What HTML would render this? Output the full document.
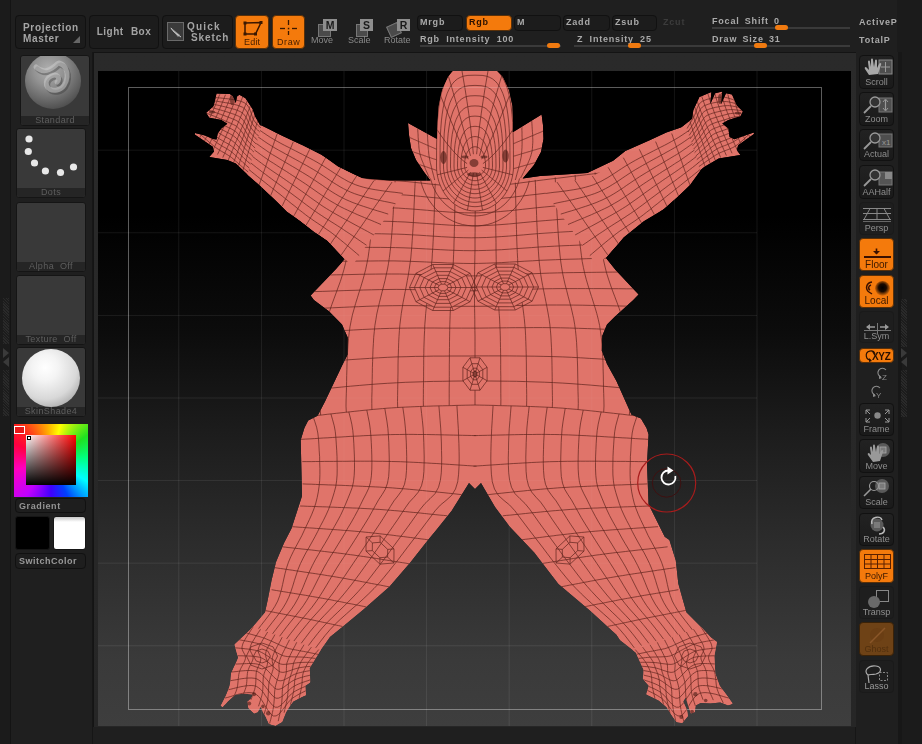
<!DOCTYPE html>
<html><head><meta charset="utf-8">
<style>
*{margin:0;padding:0;box-sizing:border-box}
body *{-webkit-font-smoothing:antialiased}
.btn,.t9,.th .c,.rb .t,.il,.sq{will-change:transform}
html,body{width:922px;height:744px;overflow:hidden;background:#1f1f1f;font-family:"Liberation Sans",sans-serif}
.a{position:absolute}
.btn{position:absolute;background:#1c1c1c;border:1px solid #111;border-radius:4px;color:#a6a6a6;font-weight:bold;font-size:10px;letter-spacing:0.7px;white-space:nowrap}
.or{background:#f47a0c;border-color:#5a3008}
.t9{position:absolute;color:#aaa;font-weight:bold;font-size:9px;letter-spacing:0.8px;white-space:nowrap;line-height:10px}
.th{position:absolute;background:#393939;border:1px solid #151515;border-radius:3px;overflow:hidden}
.th .c{position:absolute;left:0;right:0;bottom:0;height:9px;background:#252525;color:#5e5e5e;font-size:9px;text-align:center;line-height:9px;letter-spacing:0.4px}
.rb{position:absolute;left:859px;width:35px;background:linear-gradient(#222,#1a1a1a);border:1px solid #111;border-radius:4px;color:#8e8e8e;font-size:9px;text-align:center;overflow:hidden}
.rb .t{position:absolute;left:0;right:0;bottom:1px;line-height:10px}
.trk{position:absolute;height:2px;background:#3a3a3a}
.knob{position:absolute;height:5px;background:#f07a10;border-radius:3px}
.sq{position:absolute;background:#8e8e8e;color:#1a1a1a;font-weight:bold;font-size:10.5px;text-align:center;line-height:12px}
.sqb{position:absolute;background:#4a4a4a;border:1px solid #777}
.il{position:absolute;color:#8a8a8a;font-size:9px;white-space:nowrap;line-height:10px}
</style></head><body>
<div class="a" style="left:0;top:0;width:10px;height:744px;background:#1b1b1b"></div>
<div class="a" style="left:10px;top:0;width:1px;height:744px;background:#141414"></div>
<div class="a" style="left:898px;top:0;width:24px;height:744px;background:#1b1b1b"></div>
<div class="a" style="left:898px;top:0;width:4px;height:744px;background:#171717"></div>

<!-- top buttons -->
<div class="btn" style="left:15px;top:15px;width:71px;height:34px;padding:6px 0 0 7px;line-height:11px">Projection<br>Master
 <div class="a" style="right:5px;bottom:5px;width:0;height:0;border-left:7px solid transparent;border-bottom:7px solid #666"></div></div>
<div class="btn" style="left:89px;top:15px;width:70px;height:34px;line-height:32px;text-align:center;letter-spacing:0.5px;word-spacing:4px;color:#a4a4a4">Light Box</div>
<div class="btn" style="left:162px;top:15px;width:71px;height:34px;line-height:11px">
 <div class="a" style="left:4px;top:6px;width:17px;height:19px;border:1px solid #6a6a6a;background:#3a3a3a"><svg width="15" height="17" style="position:absolute;left:0;top:0"><path d="M2 4 L12 12 L10 14 Z" fill="#999"/><path d="M3 5 C5 9 9 11 13 14" stroke="#ccc" stroke-width="1" fill="none"/></svg></div>
 <div class="a" style="left:24px;top:5px;letter-spacing:1.2px;color:#a4a4a4">Quick</div><div class="a" style="left:28px;top:16px;letter-spacing:0.9px;color:#a4a4a4">Sketch</div></div>
<div class="btn or" style="left:235px;top:15px;width:34px;height:34px">
 <svg class="a" style="left:0;top:0" width="34" height="34"><path d="M9 7 L25 6.5 L19.5 18 L9 18 Z" fill="none" stroke="#3a1600" stroke-width="1.5"/><g fill="#3a1800"><rect x="7.5" y="5.5" width="3" height="3"/><rect x="23.5" y="5" width="3" height="3"/><rect x="18" y="16.5" width="3" height="3"/><rect x="7.5" y="16.5" width="3" height="3"/></g></svg>
 <div class="a" style="left:8px;top:21px;font-size:9px;font-weight:normal;color:#4a2000;letter-spacing:0.2px">Edit</div></div>
<div class="btn or" style="left:272px;top:15px;width:33px;height:34px">
 <svg class="a" style="left:0;top:0" width="33" height="34"><g stroke="#3a1800" stroke-width="1.3"><line x1="15.5" y1="4" x2="15.5" y2="9"/><line x1="15.5" y1="15" x2="15.5" y2="19"/><line x1="7" y1="12.5" x2="12" y2="12.5"/><line x1="19" y1="12.5" x2="24" y2="12.5"/></g><rect x="14.8" y="11.8" width="1.5" height="1.5" fill="#3a1800"/></svg>
 <div class="a" style="left:4px;top:21px;font-size:9px;font-weight:normal;color:#4a2000;letter-spacing:0.6px">Draw</div></div>
<!-- move scale rotate -->
<div class="sqb" style="left:318px;top:24px;width:13px;height:13px"></div>
<div class="sq" style="left:323px;top:19px;width:14px;height:12px">M</div>
<div class="il" style="left:311px;top:35px">Move</div>
<div class="sqb" style="left:356px;top:24px;width:12px;height:13px"></div>
<div class="sq" style="left:360px;top:19px;width:13px;height:12px">S</div>
<div class="il" style="left:348px;top:35px">Scale</div>
<div class="sqb" style="left:388px;top:24px;width:12px;height:12px;transform:rotate(-25deg)"></div>
<div class="sq" style="left:397px;top:19px;width:13px;height:12px">R</div>
<div class="il" style="left:384px;top:35px">Rotate</div>
<!-- mrgb row -->
<div class="btn" style="left:417px;top:15px;width:46px;height:16px"></div>
<div class="btn or" style="left:466px;top:15px;width:46px;height:16px"></div>
<div class="btn" style="left:514px;top:15px;width:47px;height:16px"></div>
<div class="btn" style="left:563px;top:15px;width:47px;height:16px"></div>
<div class="btn" style="left:612px;top:15px;width:45px;height:16px"></div>
<div class="t9" style="left:420px;top:17px">Mrgb</div>
<div class="t9" style="left:469px;top:17px;color:#2a1000">Rgb</div>
<div class="t9" style="left:517px;top:17px">M</div>
<div class="t9" style="left:566px;top:17px">Zadd</div>
<div class="t9" style="left:615px;top:17px">Zsub</div>
<div class="t9" style="left:663px;top:17px;color:#3c3c3c">Zcut</div>
<div class="t9" style="left:420px;top:34px;word-spacing:3px">Rgb Intensity 100</div>
<div class="t9" style="left:577px;top:34px;word-spacing:3px">Z Intensity 25</div>
<div class="t9" style="left:712px;top:16px;word-spacing:2px">Focal Shift 0</div>
<div class="t9" style="left:712px;top:34px;word-spacing:2px">Draw Size 31</div>
<div class="t9" style="left:859px;top:17px">ActiveP</div>
<div class="t9" style="left:859px;top:35px">TotalP</div>
<div class="a" style="left:897px;top:0;width:25px;height:52px;background:#1b1b1b"></div>
<div class="trk" style="left:420px;top:45px;width:141px"></div>
<div class="trk" style="left:574px;top:45px;width:130px"></div>
<div class="trk" style="left:712px;top:27px;width:138px"></div>
<div class="trk" style="left:690px;top:45px;width:160px"></div>
<div class="knob" style="left:547px;top:43px;width:13px"></div>
<div class="knob" style="left:628px;top:43px;width:13px"></div>
<div class="knob" style="left:775px;top:25px;width:13px"></div>
<div class="knob" style="left:754px;top:43px;width:13px"></div>


<!-- left panel -->
<div class="a" style="left:3px;top:298px;width:6px;height:46px;background:repeating-linear-gradient(45deg,#2a2a2a 0 1px,#1c1c1c 1px 2px)"></div>
<div class="a" style="left:3px;top:370px;width:6px;height:46px;background:repeating-linear-gradient(45deg,#2a2a2a 0 1px,#1c1c1c 1px 2px)"></div>
<div class="a" style="left:3px;top:348px;width:0;height:0;border-top:5px solid transparent;border-bottom:5px solid transparent;border-left:6px solid #3a3a3a"></div>
<div class="a" style="left:3px;top:357px;width:0;height:0;border-top:5px solid transparent;border-bottom:5px solid transparent;border-right:6px solid #3a3a3a"></div>
<div class="th" style="left:20px;top:55px;width:70px;height:71px">
 <div class="a" style="left:4px;top:-3px;width:56px;height:56px;border-radius:50%;background:radial-gradient(circle at 42% 30%,#b0b0b0 0%,#929292 30%,#666 62%,#454545 85%,#3a3a3a 100%)"></div>
 <svg class="a" style="left:-2px;top:0" width="70" height="62"><path d="M17 11 C24 18 32 14 38 8 M40 7 C52 10 50 32 38 34 C26 36 24 24 32 20 C38 17 42 22 38 26" fill="none" stroke="#2a2a2a" stroke-width="5" opacity="0.35" stroke-linecap="round" transform="translate(1.5,2)"/><path d="M17 11 C24 18 32 14 38 8 M40 7 C52 10 50 32 38 34 C26 36 24 24 32 20 C38 17 42 22 38 26" fill="none" stroke="#cfcfcf" stroke-width="5" opacity="0.5" stroke-linecap="round"/></svg>
 <div class="c">Standard</div></div>
<div class="th" style="left:16px;top:128px;width:70px;height:70px">
 <svg class="a" style="left:0;top:0" width="70" height="60"><g fill="#e8e8e8"><circle cx="12" cy="10" r="3.6"/><circle cx="11.3" cy="22.5" r="3.6"/><circle cx="17.5" cy="34" r="3.6"/><circle cx="28.4" cy="42" r="3.6"/><circle cx="43.5" cy="43.5" r="3.6"/><circle cx="56.5" cy="38" r="3.6"/></g></svg>
 <div class="c">Dots</div></div>
<div class="th" style="left:16px;top:202px;width:70px;height:70px"><div class="c">Alpha &nbsp;Off</div></div>
<div class="th" style="left:16px;top:275px;width:70px;height:70px"><div class="c">Texture &nbsp;Off</div></div>
<div class="th" style="left:16px;top:347px;width:70px;height:70px">
 <div class="a" style="left:5px;top:1px;width:58px;height:58px;border-radius:50%;background:radial-gradient(circle at 40% 32%,#ffffff 0%,#f4f4f4 25%,#d8d8d8 60%,#9a9a9a 90%,#777 100%)"></div>
 <div class="c">SkinShade4</div></div>
<div class="a" style="left:14px;top:424px;width:74px;height:73px;background:conic-gradient(from -45deg,#ff2020 0deg,#ffb000 40deg,#ffff00 60deg,#20e020 100deg,#00ff80 130deg,#00ffff 165deg,#0040ff 200deg,#4000ff 225deg,#c000ff 260deg,#ff00c0 300deg,#ff0040 340deg,#ff2020 360deg)"></div>
<div class="a" style="left:26px;top:435px;width:50px;height:50px;background:linear-gradient(to top,#000,rgba(0,0,0,0)),linear-gradient(to right,#fff,#f00)"></div>
<div class="a" style="left:14px;top:426px;width:11px;height:8px;border:1.5px solid #fff;background:#e81818"></div>
<div class="a" style="left:27px;top:436px;width:4px;height:4px;border:1px solid #000;background:#fff"></div>
<div class="btn" style="left:15px;top:498px;width:71px;height:15px;font-size:9px;color:#959595;padding:1px 0 0 3px;line-height:12px;letter-spacing:0.6px;background:#1e1e1e">Gradient</div>
<div class="a" style="left:15px;top:516px;width:35px;height:34px;background:#000;border-radius:3px;border:1px solid #161616"></div>
<div class="a" style="left:53px;top:516px;width:33px;height:34px;background:linear-gradient(#c8c8c8 0,#fff 5px,#fff 100%);border-radius:3px;border:1px solid #161616"></div>
<div class="btn" style="left:15px;top:553px;width:71px;height:16px;font-size:9px;color:#9a9a9a;padding:1px 0 0 3px;line-height:13px;letter-spacing:0.5px;background:#1e1e1e">SwitchColor</div>
<div class="a" style="left:92px;top:52px;width:1px;height:692px;background:#161616"></div>


<!-- right panel -->
<div class="a" style="left:855px;top:52px;width:1px;height:692px;background:#161616"></div>
<div class="a" style="left:901px;top:299px;width:6px;height:48px;background:repeating-linear-gradient(45deg,#2a2a2a 0 1px,#1c1c1c 1px 2px)"></div>
<div class="a" style="left:901px;top:370px;width:6px;height:47px;background:repeating-linear-gradient(45deg,#2a2a2a 0 1px,#1c1c1c 1px 2px)"></div>
<div class="a" style="left:901px;top:348px;width:0;height:0;border-top:5px solid transparent;border-bottom:5px solid transparent;border-left:6px solid #3a3a3a"></div>
<div class="a" style="left:901px;top:357px;width:0;height:0;border-top:5px solid transparent;border-bottom:5px solid transparent;border-right:6px solid #3a3a3a"></div>

<div class="rb" style="top:55px;height:34px"><svg class="a" style="left:0;top:0" width="35" height="24">
 <rect x="19" y="4" width="13" height="14" fill="#4e4e4e" stroke="#888" stroke-width="1"/>
 <path d="M25.5 6v10M21 11h9" stroke="#999" stroke-width="1"/>
 <path d="M9 19 L5 13 C4 11 6 10 7 12 L9 14 L8 6 C8 4 10 4 10 6 L11 11 L11 4 C11 2 13 2 13 4 L14 11 L15 5 C15 3 17 3 17 5 L17 12 L19 8 C20 6 22 7 21 9 L18 18 Z" fill="#a8a8a8"/></svg><div class="t">Scroll</div></div>
<div class="rb" style="top:92px;height:34px"><svg class="a" style="left:0;top:0" width="35" height="24">
 <rect x="19" y="5" width="13" height="14" fill="#4e4e4e" stroke="#777" stroke-width="1"/>
 <path d="M25.5 7v10" stroke="#999" stroke-width="1.2"/><path d="M23 9l2.5-3 2.5 3M23 15l2.5 3 2.5-3" fill="none" stroke="#999"/>
 <circle cx="15" cy="9" r="5" fill="#333" stroke="#999" stroke-width="1.3"/><path d="M11 13 L4 20" stroke="#999" stroke-width="1.8"/></svg><div class="t">Zoom</div></div>
<div class="rb" style="top:129px;height:32px"><svg class="a" style="left:0;top:0" width="35" height="22">
 <rect x="19" y="4" width="13" height="13" fill="#4e4e4e" stroke="#777" stroke-width="1"/>
 <text x="22" y="15" font-size="8" fill="#999" font-family="Liberation Sans">x1</text>
 <circle cx="15" cy="8" r="5" fill="#333" stroke="#999" stroke-width="1.3"/><path d="M11 12 L4 19" stroke="#999" stroke-width="1.8"/></svg><div class="t">Actual</div></div>
<div class="rb" style="top:165px;height:34px"><svg class="a" style="left:0;top:0" width="35" height="24">
 <rect x="19" y="6" width="13" height="13" fill="#555" stroke="#777" stroke-width="1"/><rect x="25" y="6" width="7" height="7" fill="#888"/>
 <circle cx="15" cy="9" r="5" fill="#333" stroke="#999" stroke-width="1.3"/><path d="M11 13 L4 20" stroke="#999" stroke-width="1.8"/></svg><div class="t">AAHalf</div></div>
<div class="rb" style="top:202px;height:33px;background:#1e1e1e;border-color:#1a1a1a"><svg class="a" style="left:0;top:0" width="35" height="22">
 <g stroke="#888" stroke-width="1" fill="none"><path d="M3 5.5h28M3 10.5h28M3 16.5h28M10 5.5L4 16.5M24 5.5L30 16.5M17 5.5v11"/><path d="M3 18.5h28" stroke="#666"/></g></svg><div class="t" style="color:#909090">Persp</div></div>
<div class="rb" style="top:238px;height:33px;background:#f47a0c;border-color:#5a3008;color:#3a1800"><svg class="a" style="left:0;top:0" width="35" height="22">
 <path d="M4 18h27" stroke="#3a1000" stroke-width="2"/><path d="M16.5 9.5v5" stroke="#3a1000" stroke-width="1.6"/><path d="M13 12l3.5 3.5 3.5-3.5z" fill="#3a1000"/></svg><div class="t" style="font-size:10px;bottom:0px">Floor</div></div>
<div class="rb" style="top:275px;height:33px;background:#f47a0c;border-color:#5a3008;color:#3a1800">
 <div class="a" style="left:15px;top:5px;width:15px;height:15px;border-radius:50%;background:radial-gradient(circle at 50% 45%,#000 0%,#1a0a00 35%,rgba(240,120,12,0) 75%)"></div>
 <svg class="a" style="left:0;top:0" width="35" height="22"><path d="M12 6 C6 7 5 13 9 16 M11 9 C8 10 8 13 10 14 M9 16 L12 18" fill="none" stroke="#3a1000" stroke-width="1.5"/></svg><div class="t" style="font-size:10px;bottom:1px">Local</div></div>
<div class="rb" style="top:311px;height:32px;background:#1e1e1e;border-color:#1a1a1a"><svg class="a" style="left:0;top:0" width="35" height="22">
 <path d="M4 18.5h27" stroke="#777" stroke-width="1.2"/><path d="M17.5 11v11" stroke="#777"/><path d="M7 15h8M20 15h8" stroke="#999" stroke-width="1.6"/><path d="M10 12l-4 3 4 3zM25 12l4 3-4 3z" fill="#999"/></svg><div class="t" style="color:#909090">L.Sym</div></div>
<div class="rb" style="top:348px;height:15px;background:#f47a0c;border-color:#5a3008;color:#2a1000"><div class="a" style="left:12px;top:2px;font-size:10px;line-height:12px;font-weight:bold;letter-spacing:-0.3px">XYZ</div>
 <svg class="a" style="left:0;top:0" width="35" height="15"><path d="M15 5 A4.5 4.5 0 1 0 11 11" fill="none" stroke="#2a1000" stroke-width="1.2"/><path d="M9 9 L12 12 L9 13 Z" fill="#2a1000"/></svg></div>
<svg class="a" style="left:859px;top:364px" width="35" height="36"><g fill="none" stroke="#8a8a8a" stroke-width="1.1"><path d="M27 6 A4.5 4.5 0 1 0 22 13"/><path d="M21 24 A4.5 4.5 0 1 0 16 31"/></g><path d="M20 11 L23 14 L20 15 Z M14 29 L17 32 L14 33 Z" fill="#8a8a8a"/>
 <text x="23" y="16" font-size="8" fill="#8a8a8a" font-family="Liberation Sans">Z</text><text x="17" y="34" font-size="8" fill="#8a8a8a" font-family="Liberation Sans">Y</text></svg>
<div class="rb" style="top:403px;height:33px"><svg class="a" style="left:0;top:0" width="35" height="22">
 <circle cx="17.5" cy="11.5" r="3.2" fill="#888"/><g stroke="#999" stroke-width="1" fill="none"><path d="M6 6l4 4M6 6h4M6 6v4M29 6l-4 4M29 6h-4M29 6v4M6 18l4-4M6 18h4M6 18v-4M29 18l-4-4M29 18h-4M29 18v-4"/></g></svg><div class="t">Frame</div></div>
<div class="rb" style="top:439px;height:34px"><svg class="a" style="left:0;top:0" width="35" height="24">
 <circle cx="23" cy="10" r="7" fill="#5a5a5a"/><rect x="20" y="7" width="6" height="6" fill="#7a7a7a" stroke="#aaa" stroke-width="0.8"/>
 <path d="M13 22 L8 15 C7 13 9 12 10 14 L11 15 L10 8 C10 6 12 6 12 8 L13 12 L13 6 C13 4 15 4 15 6 L16 12 L17 7 C17 5 19 5 19 7 L19 14 L21 11 C22 9 24 10 23 12 L20 21 Z" fill="#999"/></svg><div class="t">Move</div></div>
<div class="rb" style="top:476px;height:33px"><svg class="a" style="left:0;top:0" width="35" height="23">
 <circle cx="22" cy="9" r="7" fill="#5a5a5a"/><rect x="19" y="6" width="6" height="6" fill="#7a7a7a" stroke="#aaa" stroke-width="0.8"/>
 <circle cx="14" cy="9" r="4.5" fill="none" stroke="#999" stroke-width="1.2"/><path d="M11 12 L4 19" stroke="#999" stroke-width="1.6"/></svg><div class="t">Scale</div></div>
<div class="rb" style="top:513px;height:33px"><svg class="a" style="left:0;top:0" width="35" height="23">
 <circle cx="17" cy="11" r="6.5" fill="#5a5a5a"/><rect x="14" y="8" width="6" height="6" fill="#7a7a7a"/>
 <path d="M12 10 C10 3 20 1 22 6 M23 13 C26 16 24 20 19 20" fill="none" stroke="#bbb" stroke-width="1.5"/></svg><div class="t">Rotate</div></div>
<div class="rb" style="top:549px;height:34px;background:#f47a0c;border-color:#5a3008;color:#3a1800"><svg class="a" style="left:0;top:0" width="35" height="24">
 <g stroke="#5a2000" stroke-width="1" fill="none"><rect x="4.5" y="4.5" width="26" height="14"/><path d="M4.5 9.5h26M4.5 14h26M11 4.5v14M17.5 4.5v14M24 4.5v14"/></g></svg><div class="t" style="font-size:9px;bottom:1px">PolyF</div></div>
<div class="rb" style="top:586px;height:33px;background:#1e1e1e;border-color:#1a1a1a"><svg class="a" style="left:0;top:0" width="35" height="23">
 <rect x="16.5" y="3.5" width="12" height="11" fill="none" stroke="#888"/><circle cx="14" cy="15" r="6" fill="#6a6a6a"/></svg><div class="t" style="color:#909090">Transp</div></div>
<div class="rb" style="top:622px;height:34px;background:#6e4216;border-color:#3a2208;color:#52300e"><svg class="a" style="left:0;top:0" width="35" height="24">
 <circle cx="17" cy="12" r="7" fill="#6a3e14"/><path d="M10 20 L25 5" stroke="#8a5628" stroke-width="1.5"/></svg><div class="t">Ghost</div></div>
<div class="rb" style="top:660px;height:33px;background:#1e1e1e;border-color:#1a1a1a"><svg class="a" style="left:0;top:0" width="35" height="23">
 <path d="M8 14 C3 10 8 4 16 5 C22 6 22 11 16 13 C12 14 9 13 8 14 Z M8 14 L9 22" fill="none" stroke="#aaa" stroke-width="1.2"/><rect x="19.5" y="11.5" width="8" height="8" fill="none" stroke="#888" stroke-dasharray="2 1.5"/></svg><div class="t" style="color:#9a9a9a">Lasso</div></div>

<!-- canvas panel -->
<div class="a" style="left:93px;top:52px;width:763px;height:675px;background:linear-gradient(#2a2a2a,#262626);border-left:1px solid #141414;border-top:1px solid #141414"></div>
<div id="cv" class="a" style="left:98px;top:71px;width:753px;height:655px;background:linear-gradient(#000 0%,#000 22%,#0c0c0c 40%,#1c1c1c 55%,#2c2c2c 72%,#3a3a3a 90%,#3e3e3e 100%);overflow:hidden">
</div>
<svg class="a" style="left:0;top:0" width="922" height="744" viewBox="0 0 922 744">
<defs><clipPath id="cc"><rect x="98" y="71" width="753" height="655"/></clipPath></defs>
<g clip-path="url(#cc)">
<g stroke="rgba(255,255,255,0.05)" stroke-width="1"><line x1="178.8" y1="71" x2="178.8" y2="726"/><line x1="261.4" y1="71" x2="261.4" y2="726"/><line x1="344.0" y1="71" x2="344.0" y2="726"/><line x1="426.6" y1="71" x2="426.6" y2="726"/><line x1="509.2" y1="71" x2="509.2" y2="726"/><line x1="591.8" y1="71" x2="591.8" y2="726"/><line x1="674.4" y1="71" x2="674.4" y2="726"/><line x1="757.0" y1="71" x2="757.0" y2="726"/><line x1="96" y1="150.2" x2="757" y2="150.2"/><line x1="96" y1="232.8" x2="757" y2="232.8"/><line x1="96" y1="315.4" x2="757" y2="315.4"/><line x1="96" y1="398.0" x2="757" y2="398.0"/><line x1="96" y1="480.6" x2="757" y2="480.6"/><line x1="96" y1="563.2" x2="757" y2="563.2"/><line x1="96" y1="645.8" x2="757" y2="645.8"/></g>
<rect x="128.5" y="87.5" width="693" height="622" fill="none" stroke="rgba(255,255,255,0.24)" stroke-width="1"/>
<clipPath id="sil"><path d="M455,68 L494,68 L503,77 L509,90 L512.5,106 L513,122 L512.4,132.5 L541.6,114.6 L543,125 L543.5,139 L541,152 L534,165 L522.7,178.6 L540,176 L587.3,172.9 L613.1,160.7 L625.3,150.9 L649.6,140.2 L666.3,132.6 L681.5,127.3 L692.1,118.7 L693.3,110.2 L699.4,97 L711.4,92.1 L710.2,104.2 L715.1,93.3 L722.3,91.5 L721.1,104.2 L726,93.3 L732,94.5 L736.9,105.4 L742.9,111.5 L740.5,116.3 L728.4,120 L722.3,123.5 L728.4,128.4 L729.6,136.9 L734.4,139.3 L745,135.5 L753.8,132.5 L754,134 L738.1,145.3 L736.9,150.2 L740.5,155 L718.7,158.6 L704.2,167.1 L700.6,170 L690,184.8 L677.4,196.9 L663.9,209 L643.8,221 L623.6,237.2 L606,258 L615.6,270 L638.6,294.4 L633.3,300 L614.5,317 L607,324.5 L602.3,335.7 L601.8,350.8 L607,364 L616.4,381 L631.5,414.7 L640.9,418.5 L646.5,428 L648.6,434.5 L647,464 L648.6,504.4 L664.7,536.7 L669.4,540 L675.8,560.4 L678.3,583.5 L682.9,600 L686.4,612.2 L702.1,628 L710.9,637.6 L717,642 L714.4,656 L715.3,673.4 L719.7,685.7 L733,703.4 L728,705.4 L720.3,702.5 L710.5,703.4 L700.8,703 L695.9,705.4 L695,712.2 L691,713.7 L689,708.3 L685.6,697.6 L683.2,701.5 L687.1,710.3 L688,716 L682.2,723 L676.4,722 L671.5,715.2 L666.6,707.3 L658.8,700.5 L646.2,694.4 L648.8,685.7 L642.7,678.7 L643.6,670 L635.7,652.4 L620,640.2 L616.4,634.7 L589.8,610.6 L558.4,584 L534.2,552.5 L510,527.1 L495,507 L481,483 L475,489 L469,483 L451.9,510.4 L436.7,529.4 L428,540 L410.3,562.6 L389.4,586.8 L363.5,609.4 L344.2,625.5 L330,637 L320,651.3 L309.6,668.2 L310.5,682.2 L305.3,685.7 L306,695.3 L302.9,696.6 L293.1,701.5 L286.3,712.2 L282.4,722 L275.5,725.9 L268.7,724 L265.8,717.1 L262.9,712.2 L260.9,706.4 L258,712.2 L254.1,713.7 L248.2,708.3 L247.2,701.5 L251.1,698.6 L253.1,694.6 L244.3,693.7 L235.5,694.6 L227.7,701.5 L222.8,707.3 L220.4,705.9 L225.7,695.6 L229.6,685.9 L230.6,680 L231,673.4 L238,657.7 L234.5,644.6 L250.2,629.7 L265,612.2 L267.7,600 L271.4,581 L276,562 L284,543 L291.5,528.6 L302,496 L300.7,440 L304.4,427.9 L308.2,420.4 L317.6,415.7 L325,401.6 L342,365.8 L347.7,354.5 L347.7,337.6 L342,324.5 L328.9,311.3 L313.9,300 L310.6,295.6 L336,269 L344.5,259.3 L327.2,240.6 L313.8,231.8 L300.3,221 L286.9,211.7 L273.4,198.2 L260,185.5 L247.9,175 L235.8,163.6 L227.3,160 L209.2,157 L214,151.5 L212.8,146.7 L194.7,134.5 L195,133 L205,135.5 L213,139 L216.5,139.4 L217.7,133.4 L221.3,128.5 L227.3,123.7 L221.3,120 L209.2,117.7 L206.2,112.8 L213.4,106.2 L214.6,102 L216.5,93.5 L229.8,94 L232.8,95.9 L235.8,103 L237,96.5 L239.4,94.7 L245.5,98.3 L252.7,109.2 L255.2,116.5 L260,124.9 L280.4,134.9 L303.1,145.6 L321.4,154.7 L338.1,166.8 L362.4,178.2 L390,180.5 L430.5,180.5 L424,172 L416,160 L411,148 L409,135 L408,123 L437,139 L437.5,122 L438.5,106 L442,90 L448,77 Z"/></clipPath>
<g clip-path="url(#sil)">
<path d="M455,68 L494,68 L503,77 L509,90 L512.5,106 L513,122 L512.4,132.5 L541.6,114.6 L543,125 L543.5,139 L541,152 L534,165 L522.7,178.6 L540,176 L587.3,172.9 L613.1,160.7 L625.3,150.9 L649.6,140.2 L666.3,132.6 L681.5,127.3 L692.1,118.7 L693.3,110.2 L699.4,97 L711.4,92.1 L710.2,104.2 L715.1,93.3 L722.3,91.5 L721.1,104.2 L726,93.3 L732,94.5 L736.9,105.4 L742.9,111.5 L740.5,116.3 L728.4,120 L722.3,123.5 L728.4,128.4 L729.6,136.9 L734.4,139.3 L745,135.5 L753.8,132.5 L754,134 L738.1,145.3 L736.9,150.2 L740.5,155 L718.7,158.6 L704.2,167.1 L700.6,170 L690,184.8 L677.4,196.9 L663.9,209 L643.8,221 L623.6,237.2 L606,258 L615.6,270 L638.6,294.4 L633.3,300 L614.5,317 L607,324.5 L602.3,335.7 L601.8,350.8 L607,364 L616.4,381 L631.5,414.7 L640.9,418.5 L646.5,428 L648.6,434.5 L647,464 L648.6,504.4 L664.7,536.7 L669.4,540 L675.8,560.4 L678.3,583.5 L682.9,600 L686.4,612.2 L702.1,628 L710.9,637.6 L717,642 L714.4,656 L715.3,673.4 L719.7,685.7 L733,703.4 L728,705.4 L720.3,702.5 L710.5,703.4 L700.8,703 L695.9,705.4 L695,712.2 L691,713.7 L689,708.3 L685.6,697.6 L683.2,701.5 L687.1,710.3 L688,716 L682.2,723 L676.4,722 L671.5,715.2 L666.6,707.3 L658.8,700.5 L646.2,694.4 L648.8,685.7 L642.7,678.7 L643.6,670 L635.7,652.4 L620,640.2 L616.4,634.7 L589.8,610.6 L558.4,584 L534.2,552.5 L510,527.1 L495,507 L481,483 L475,489 L469,483 L451.9,510.4 L436.7,529.4 L428,540 L410.3,562.6 L389.4,586.8 L363.5,609.4 L344.2,625.5 L330,637 L320,651.3 L309.6,668.2 L310.5,682.2 L305.3,685.7 L306,695.3 L302.9,696.6 L293.1,701.5 L286.3,712.2 L282.4,722 L275.5,725.9 L268.7,724 L265.8,717.1 L262.9,712.2 L260.9,706.4 L258,712.2 L254.1,713.7 L248.2,708.3 L247.2,701.5 L251.1,698.6 L253.1,694.6 L244.3,693.7 L235.5,694.6 L227.7,701.5 L222.8,707.3 L220.4,705.9 L225.7,695.6 L229.6,685.9 L230.6,680 L231,673.4 L238,657.7 L234.5,644.6 L250.2,629.7 L265,612.2 L267.7,600 L271.4,581 L276,562 L284,543 L291.5,528.6 L302,496 L300.7,440 L304.4,427.9 L308.2,420.4 L317.6,415.7 L325,401.6 L342,365.8 L347.7,354.5 L347.7,337.6 L342,324.5 L328.9,311.3 L313.9,300 L310.6,295.6 L336,269 L344.5,259.3 L327.2,240.6 L313.8,231.8 L300.3,221 L286.9,211.7 L273.4,198.2 L260,185.5 L247.9,175 L235.8,163.6 L227.3,160 L209.2,157 L214,151.5 L212.8,146.7 L194.7,134.5 L195,133 L205,135.5 L213,139 L216.5,139.4 L217.7,133.4 L221.3,128.5 L227.3,123.7 L221.3,120 L209.2,117.7 L206.2,112.8 L213.4,106.2 L214.6,102 L216.5,93.5 L229.8,94 L232.8,95.9 L235.8,103 L237,96.5 L239.4,94.7 L245.5,98.3 L252.7,109.2 L255.2,116.5 L260,124.9 L280.4,134.9 L303.1,145.6 L321.4,154.7 L338.1,166.8 L362.4,178.2 L390,180.5 L430.5,180.5 L424,172 L416,160 L411,148 L409,135 L408,123 L437,139 L437.5,122 L438.5,106 L442,90 L448,77 Z" fill="#e0746a"/>
<path d="M334.9,177.1 342.1,177.5 349.3,177.9 356.5,178.3 363.7,178.8 370.9,179.2 378.1,179.6 385.3,180.1 392.5,180.5 399.7,181.0 406.9,181.6 414.1,182.3 421.3,183.1 428.5,183.9 435.7,184.6 442.8,185.3 450.0,186.0 457.2,186.5 464.4,186.8 471.7,186.9 478.9,186.8 486.1,186.5 493.3,186.0 500.5,185.3 507.7,184.5 514.8,183.7 522.0,182.7 529.1,181.8 536.3,180.8 543.4,179.9 550.6,179.0 557.8,178.2 565.0,177.3 572.1,176.4 579.3,175.6 586.4,174.7 593.6,173.8 600.8,172.9 607.9,172.0 615.1,171.1M333.6,191.4 340.8,191.7 348.1,192.1 355.4,192.4 362.6,192.7 369.9,193.1 377.2,193.4 384.5,193.8 391.7,194.2 399.0,194.6 406.2,195.1 413.5,195.7 420.7,196.4 428.0,197.1 435.2,197.8 442.5,198.4 449.8,199.0 457.0,199.5 464.3,199.8 471.6,199.9 478.9,199.8 486.1,199.5 493.4,199.0 500.7,198.4 507.9,197.7 515.1,196.9 522.4,196.0 529.6,195.1 536.8,194.3 544.1,193.4 551.3,192.7 558.5,191.9 565.8,191.2 573.0,190.4 580.2,189.7 587.5,188.9 594.7,188.1 601.9,187.3 609.1,186.5 616.4,185.8M332.3,205.7 339.6,205.9 347.0,206.2 354.3,206.4 361.6,206.7 368.9,206.9 376.3,207.2 383.6,207.5 390.9,207.8 398.3,208.1 405.6,208.6 412.9,209.1 420.2,209.7 427.5,210.3 434.8,211.0 442.2,211.5 449.5,212.1 456.8,212.5 464.2,212.8 471.5,212.9 478.8,212.8 486.2,212.5 493.5,212.1 500.8,211.5 508.2,210.8 515.5,210.1 522.7,209.3 530.0,208.5 537.3,207.7 544.6,207.0 551.9,206.3 559.2,205.7 566.5,205.0 573.8,204.4 581.1,203.7 588.4,203.1 595.7,202.4 603.0,201.8 610.3,201.1 617.6,200.4M330.9,220.0 338.3,220.1 345.7,220.3 353.1,220.5 360.5,220.6 367.9,220.8 375.3,221.0 382.7,221.2 390.1,221.4 397.5,221.7 404.9,222.0 412.2,222.5 419.6,223.0 427.0,223.5 434.4,224.1 441.8,224.6 449.2,225.1 456.6,225.5 464.0,225.7 471.4,225.8 478.8,225.8 486.2,225.5 493.6,225.1 501.0,224.6 508.4,224.0 515.8,223.3 523.1,222.6 530.5,221.9 537.9,221.2 545.2,220.6 552.6,220.0 560.0,219.4 567.3,218.9 574.7,218.4 582.1,217.8 589.4,217.3 596.8,216.7 604.2,216.2 611.5,215.6 618.9,215.1M329.4,233.1 336.8,233.2 344.3,233.3 351.8,233.4 359.3,233.5 366.7,233.6 374.2,233.7 381.7,233.8 389.1,234.0 396.6,234.1 404.1,234.4 411.5,234.8 419.0,235.2 426.4,235.7 433.9,236.2 441.4,236.7 448.8,237.1 456.3,237.5 463.8,237.7 471.3,237.8 478.8,237.7 486.3,237.5 493.7,237.1 501.2,236.6 508.7,236.1 516.1,235.5 523.5,234.9 531.0,234.2 538.4,233.6 545.9,233.1 553.3,232.6 560.8,232.1 568.2,231.7 575.6,231.2 583.1,230.8 590.5,230.4 597.9,229.9 605.4,229.5 612.8,229.0 620.3,228.6M327.4,247.4 334.9,247.4 342.5,247.4 350.1,247.3 357.6,247.3 365.2,247.3 372.8,247.4 380.3,247.4 387.9,247.5 395.5,247.6 403.0,247.8 410.6,248.1 418.1,248.5 425.7,248.9 433.2,249.3 440.8,249.7 448.4,250.1 456.0,250.4 463.5,250.6 471.1,250.7 478.7,250.6 486.3,250.4 493.9,250.1 501.5,249.7 509.0,249.2 516.6,248.6 524.1,248.1 531.6,247.6 539.2,247.0 546.7,246.6 554.3,246.2 561.8,245.8 569.4,245.5 576.9,245.2 584.4,244.8 592.0,244.5 599.5,244.2 607.0,243.8 614.6,243.5 622.1,243.2M324.6,261.4 332.3,261.4 340.0,261.3 347.7,261.2 355.4,261.1 363.1,261.0 370.8,261.0 378.5,260.9 386.2,260.9 393.9,260.9 401.6,261.1 409.3,261.3 417.0,261.6 424.6,261.9 432.3,262.3 440.0,262.6 447.7,263.0 455.5,263.2 463.2,263.4 470.9,263.5 478.6,263.4 486.3,263.2 494.1,262.9 501.8,262.6 509.5,262.1 517.1,261.7 524.8,261.2 532.5,260.8 540.2,260.3 547.9,260.0 555.5,259.7 563.2,259.4 570.9,259.2 578.6,259.0 586.2,258.7 593.9,258.5 601.6,258.3 609.2,258.1 616.9,257.9 624.6,257.6M320.5,275.2 328.4,275.0 336.3,274.8 344.1,274.7 352.0,274.5 359.9,274.3 367.8,274.2 375.7,274.1 383.6,274.0 391.5,274.0 399.4,274.0 407.3,274.2 415.2,274.4 423.1,274.6 431.0,274.9 438.9,275.2 446.8,275.5 454.7,275.7 462.7,275.9 470.6,275.9 478.5,275.9 486.4,275.7 494.3,275.5 502.2,275.2 510.1,274.8 518.0,274.4 525.9,274.0 533.8,273.7 541.7,273.4 549.6,273.1 557.4,272.9 565.3,272.7 573.2,272.6 581.1,272.5 588.9,272.4 596.8,272.3 604.7,272.2 612.5,272.1 620.4,272.0 628.3,271.9M314.0,291.6 322.2,291.4 330.4,291.1 338.6,290.8 346.9,290.5 355.1,290.3 363.3,290.0 371.5,289.8 379.8,289.6 388.0,289.5 396.2,289.4 404.4,289.5 412.7,289.6 420.9,289.8 429.1,290.0 437.3,290.2 445.6,290.4 453.8,290.6 462.1,290.7 470.3,290.8 478.6,290.7 486.8,290.6 495.1,290.4 503.3,290.1 511.6,289.9 519.8,289.6 528.0,289.3 536.2,289.0 544.4,288.8 552.6,288.7 560.8,288.6 569.1,288.6 577.3,288.6 585.5,288.6 593.7,288.6 601.9,288.6 610.1,288.7 618.3,288.7 626.5,288.8 634.7,288.8M306.8,308.9 315.4,308.6 323.9,308.2 332.5,307.8 341.1,307.4 349.7,307.0 358.3,306.7 366.9,306.3 375.5,306.0 384.1,305.8 392.7,305.7 401.3,305.6 410.0,305.6 418.6,305.7 427.2,305.8 435.8,305.9 444.4,306.1 453.0,306.2 461.7,306.3 470.3,306.3 478.9,306.3 487.5,306.2 496.2,306.0 504.8,305.8 513.4,305.6 522.0,305.4 530.6,305.3 539.2,305.1 547.8,305.0 556.4,305.0 565.0,305.0 573.6,305.1 582.2,305.2 590.7,305.4 599.3,305.6 607.9,305.7 616.5,305.9 625.0,306.1 633.6,306.3 642.2,306.5M299.5,333.2 308.4,332.7 317.4,332.1 326.4,331.6 335.4,331.0 344.4,330.5 353.4,330.0 362.3,329.5 371.3,329.1 380.3,328.7 389.3,328.4 398.3,328.2 407.3,328.1 416.3,328.0 425.3,328.0 434.3,328.0 443.3,328.1 452.4,328.1 461.4,328.1 470.4,328.1 479.4,328.1 488.4,328.0 497.5,327.9 506.5,327.8 515.5,327.7 524.5,327.7 533.5,327.6 542.5,327.6 551.5,327.7 560.5,327.8 569.4,328.0 578.4,328.3 587.4,328.6 596.4,328.9 605.3,329.3 614.3,329.7 623.3,330.1 632.2,330.4 641.2,330.8 650.2,331.2M296.2,363.9 305.3,363.2 314.5,362.5 323.6,361.7 332.8,361.0 341.9,360.3 351.1,359.6 360.2,359.0 369.4,358.4 378.6,357.8 387.7,357.3 396.9,356.9 406.1,356.7 415.3,356.4 424.5,356.3 433.6,356.1 442.8,356.1 452.0,356.0 461.2,356.0 470.4,356.0 479.6,355.9 488.8,355.9 498.0,355.9 507.2,355.9 516.4,356.0 525.6,356.1 534.8,356.2 543.9,356.4 553.1,356.6 562.3,356.9 571.4,357.3 580.6,357.8 589.7,358.4 598.9,358.9 608.0,359.5 617.2,360.1 626.3,360.8 635.5,361.4 644.6,362.0 653.7,362.6M295.3,391.5 304.5,390.6 313.7,389.7 322.9,388.8 332.1,388.0 341.3,387.1 350.5,386.2 359.7,385.4 368.9,384.6 378.1,383.9 387.3,383.3 396.5,382.8 405.7,382.3 415.0,382.0 424.2,381.7 433.4,381.4 442.7,381.3 451.9,381.1 461.2,381.0 470.4,381.0 479.6,381.0 488.9,381.0 498.1,381.1 507.4,381.2 516.6,381.3 525.8,381.6 535.1,381.9 544.3,382.2 553.5,382.6 562.7,383.1 572.0,383.7 581.2,384.4 590.4,385.1 599.6,385.9 608.7,386.7 617.9,387.5 627.1,388.4 636.3,389.2 645.5,390.1 654.7,390.9M355.1,177.2 354.5,183.4 354.0,189.6 353.5,195.8 353.1,202.0 352.6,208.2 352.1,214.4 351.5,220.6 350.9,226.8 350.2,233.0 349.5,239.2 348.7,245.4 347.7,251.5 346.7,257.7 345.4,263.7 343.9,269.7 342.2,275.6 340.3,281.5 338.2,287.2 336.1,293.0 334.0,298.7 331.9,304.4 329.9,310.3 328.0,316.1 326.5,322.1 325.1,328.1 324.1,334.2 323.3,340.4 322.7,346.6 322.1,352.8 321.8,359.0 321.5,365.2 321.3,371.4 321.1,377.7 321.0,383.9 320.9,390.2 320.7,396.4 320.4,402.6 320.3,408.9 320.6,415.1M375.1,178.4 374.7,184.5 374.2,190.6 373.8,196.7 373.4,202.8 373.0,208.9 372.6,215.0 372.1,221.1 371.6,227.2 371.0,233.3 370.4,239.4 369.8,245.4 368.9,251.5 368.1,257.5 366.9,263.5 365.7,269.4 364.2,275.2 362.6,280.9 360.9,286.6 359.1,292.2 357.4,297.8 355.6,303.5 354.0,309.2 352.4,314.9 351.2,320.7 350.0,326.7 349.2,332.7 348.5,338.7 348.0,344.8 347.6,350.9 347.3,357.0 347.0,363.2 346.9,369.3 346.7,375.4 346.6,381.6 346.5,387.7 346.3,393.8 346.1,399.9 346.0,406.1 346.3,412.2M395.2,179.7 394.8,185.7 394.5,191.7 394.1,197.7 393.8,203.7 393.4,209.7 393.1,215.7 392.7,221.7 392.3,227.7 391.8,233.7 391.3,239.7 390.8,245.6 390.1,251.6 389.4,257.5 388.5,263.4 387.5,269.1 386.2,274.9 385.0,280.5 383.6,286.1 382.2,291.6 380.8,297.1 379.4,302.7 378.1,308.3 376.8,313.9 375.9,319.6 374.9,325.4 374.3,331.4 373.7,337.3 373.4,343.3 373.0,349.3 372.8,355.3 372.6,361.3 372.4,367.4 372.3,373.4 372.2,379.4 372.1,385.4 372.0,391.5 371.8,397.5 371.8,403.5 371.9,409.5M415.2,181.4 414.9,187.3 414.6,193.2 414.4,199.1 414.1,205.0 413.9,210.9 413.6,216.9 413.3,222.8 413.0,228.7 412.6,234.5 412.2,240.4 411.8,246.3 411.3,252.1 410.8,258.0 410.0,263.7 409.2,269.4 408.3,275.1 407.3,280.6 406.3,286.1 405.2,291.5 404.2,296.9 403.1,302.4 402.2,307.9 401.3,313.4 400.6,319.0 399.9,324.7 399.4,330.6 399.0,336.4 398.7,342.3 398.5,348.2 398.3,354.1 398.1,360.1 398.0,366.0 398.0,371.9 397.9,377.8 397.8,383.8 397.7,389.7 397.6,395.6 397.5,401.6 397.7,407.5M435.2,183.6 435.0,189.4 434.8,195.2 434.6,201.0 434.4,206.8 434.3,212.6 434.1,218.5 433.9,224.3 433.6,230.1 433.4,235.9 433.1,241.7 432.8,247.5 432.4,253.2 432.1,258.9 431.5,264.6 431.0,270.2 430.3,275.8 429.7,281.2 429.0,286.6 428.3,292.0 427.6,297.3 426.9,302.6 426.3,308.0 425.7,313.5 425.3,319.0 424.8,324.6 424.6,330.3 424.3,336.1 424.1,341.9 423.9,347.7 423.8,353.5 423.7,359.4 423.7,365.2 423.6,371.1 423.6,376.9 423.5,382.7 423.4,388.6 423.4,394.4 423.3,400.3 423.4,406.1M455.2,185.3 455.1,191.1 455.0,196.8 454.9,202.6 454.8,208.3 454.7,214.1 454.6,219.8 454.5,225.6 454.3,231.3 454.2,237.1 454.0,242.8 453.9,248.5 453.6,254.2 453.4,259.9 453.1,265.5 452.8,271.0 452.4,276.5 452.1,281.9 451.7,287.2 451.4,292.5 451.0,297.8 450.7,303.0 450.5,308.3 450.2,313.7 450.0,319.2 449.8,324.7 449.7,330.4 449.6,336.1 449.5,341.8 449.5,347.6 449.4,353.3 449.4,359.1 449.3,364.9 449.3,370.6 449.3,376.4 449.3,382.2 449.2,388.0 449.2,393.7 449.2,399.5 449.2,405.3M475.3,185.9 475.3,191.7 475.2,197.4 475.2,203.1 475.2,208.9 475.2,214.6 475.1,220.3 475.1,226.0 475.1,231.8 475.0,237.5 475.0,243.2 475.0,248.9 474.9,254.5 474.8,260.2 474.7,265.8 474.6,271.3 474.5,276.8 474.5,282.1 474.5,287.5 474.5,292.7 474.5,298.0 474.5,303.2 474.6,308.5 474.7,313.8 474.8,319.3 474.8,324.8 474.9,330.4 475.0,336.1 475.0,341.8 475.0,347.5 475.0,353.3 475.0,359.0 475.0,364.8 475.0,370.5 475.0,376.3 475.0,382.0 475.0,387.8 475.0,393.5 475.0,399.3 475.0,405.0M495.3,184.8 495.4,190.6 495.5,196.3 495.5,202.1 495.6,207.9 495.6,213.6 495.7,219.4 495.7,225.2 495.8,230.9 495.9,236.7 496.0,242.4 496.0,248.1 496.1,253.8 496.2,259.5 496.3,265.2 496.5,270.7 496.6,276.2 496.9,281.6 497.2,287.0 497.6,292.3 498.0,297.5 498.4,302.8 498.8,308.1 499.2,313.5 499.6,319.0 499.8,324.6 500.1,330.2 500.3,335.9 500.4,341.7 500.5,347.4 500.6,353.2 500.7,359.0 500.7,364.8 500.7,370.6 500.8,376.3 500.8,382.1 500.8,387.9 500.8,393.7 500.9,399.5 500.8,405.3M515.3,182.6 515.5,188.4 515.6,194.3 515.7,200.1 515.9,206.0 516.0,211.8 516.2,217.6 516.3,223.5 516.5,229.3 516.6,235.1 516.8,241.0 517.0,246.8 517.3,252.6 517.6,258.3 517.8,264.0 518.3,269.7 518.7,275.3 519.3,280.7 519.9,286.2 520.6,291.5 521.4,296.9 522.1,302.3 522.9,307.6 523.6,313.1 524.3,318.7 524.8,324.3 525.3,330.0 525.6,335.8 525.8,341.6 526.0,347.5 526.2,353.3 526.3,359.2 526.4,365.0 526.4,370.9 526.5,376.8 526.5,382.6 526.6,388.5 526.7,394.4 526.7,400.2 526.6,406.1M535.2,179.9 535.5,185.8 535.7,191.8 535.9,197.7 536.1,203.7 536.4,209.6 536.6,215.6 536.8,221.5 537.1,227.5 537.3,233.4 537.7,239.3 538.0,245.2 538.4,251.1 538.8,257.0 539.3,262.8 540.0,268.6 540.7,274.3 541.6,279.9 542.6,285.4 543.7,290.9 544.8,296.3 545.9,301.8 547.0,307.3 548.0,312.8 549.0,318.5 549.8,324.2 550.4,330.1 550.9,336.0 551.2,341.9 551.5,347.8 551.7,353.8 551.9,359.7 552.0,365.7 552.1,371.7 552.2,377.7 552.2,383.6 552.3,389.6 552.4,395.6 552.5,401.5 552.3,407.5M555.2,177.4 555.5,183.5 555.8,189.5 556.1,195.6 556.4,201.7 556.7,207.7 557.0,213.8 557.4,219.8 557.7,225.9 558.1,232.0 558.5,238.0 559.0,244.0 559.5,250.0 560.1,256.0 560.8,262.0 561.7,267.8 562.7,273.7 563.9,279.4 565.2,285.0 566.7,290.6 568.1,296.2 569.6,301.8 571.1,307.4 572.4,313.0 573.7,318.8 574.7,324.7 575.5,330.6 576.1,336.6 576.6,342.7 576.9,348.7 577.2,354.8 577.4,360.9 577.6,367.0 577.7,373.0 577.8,379.1 577.9,385.2 578.0,391.3 578.2,397.4 578.3,403.5 578.1,409.5M575.1,175.0 575.5,181.2 575.9,187.4 576.3,193.6 576.7,199.8 577.1,206.0 577.4,212.2 577.9,218.4 578.3,224.5 578.8,230.7 579.4,236.9 579.9,243.1 580.6,249.2 581.4,255.3 582.2,261.4 583.4,267.4 584.7,273.4 586.2,279.2 587.9,285.0 589.7,290.7 591.5,296.4 593.3,302.1 595.1,307.8 596.8,313.6 598.3,319.5 599.6,325.5 600.5,331.6 601.3,337.7 601.9,343.9 602.4,350.1 602.7,356.3 603.0,362.5 603.1,368.7 603.3,374.9 603.4,381.1 603.5,387.3 603.7,393.6 603.9,399.8 604.0,406.0 603.7,412.2M595.1,172.5 595.6,178.8 596.0,185.2 596.5,191.5 596.9,197.8 597.4,204.2 597.9,210.5 598.4,216.8 598.9,223.2 599.5,229.5 600.2,235.8 600.9,242.1 601.7,248.4 602.7,254.6 603.7,260.9 605.1,267.0 606.6,273.1 608.5,279.1 610.5,285.0 612.6,290.9 614.8,296.7 617.0,302.5 619.2,308.4 621.1,314.3 622.9,320.3 624.4,326.5 625.6,332.7 626.5,338.9 627.2,345.3 627.7,351.6 628.1,357.9 628.4,364.3 628.7,370.6 628.8,377.0 629.0,383.3 629.1,389.7 629.3,396.0 629.6,402.4 629.7,408.7 629.4,415.1" fill="none" stroke="#62261e" stroke-width="0.8" stroke-opacity="0.9"/>
<path d="M262.0,124.0 265.5,126.3 268.9,128.6 272.5,130.8 276.1,132.9 279.7,134.8 283.4,136.7 287.2,138.6 290.9,140.4 294.7,142.2 298.4,144.0 302.2,145.7 305.9,147.5 309.7,149.3 313.4,151.2 317.1,153.0 320.8,154.9 324.5,157.0 328.0,159.1 331.6,161.3 335.1,163.5 338.6,165.8 342.1,168.0 345.6,170.2 349.2,172.3 352.9,174.2 356.7,175.9 360.6,177.4 364.5,178.6 368.6,179.6 372.7,180.3 376.8,180.8 380.9,181.3 385.1,181.7 389.2,182.0 393.4,182.2 397.5,182.4 401.7,182.5 405.8,182.7 410.0,183.0 410.0,183.0 408.5,185.1 407.0,187.3 405.5,189.4 404.1,191.5 402.6,193.6 401.1,195.8 399.6,197.9 398.1,200.0 396.6,202.2 395.1,204.3 393.6,206.4 392.2,208.5 390.7,210.7 389.2,212.8 387.7,214.9 386.2,217.1 384.7,219.2 383.2,221.3 381.7,223.4 380.3,225.6 378.8,227.7 377.3,229.8 375.8,231.9 374.3,234.1 372.8,236.2 371.3,238.3 369.8,240.5 368.4,242.6 366.9,244.7 365.4,246.8 363.9,249.0 362.4,251.1 360.9,253.2 359.4,255.4 357.9,257.5 356.5,259.6 355.0,261.7 353.5,263.9 352.0,266.0 352.0,266.0 349.5,263.5 347.1,260.9 344.6,258.3 342.2,255.8 339.7,253.2 337.2,250.7 334.7,248.2 332.1,245.7 329.5,243.3 326.9,240.9 324.1,238.7 321.3,236.5 318.5,234.3 315.6,232.3 312.7,230.2 309.8,228.2 306.9,226.1 304.0,224.1 301.2,221.9 298.4,219.7 295.7,217.5 292.9,215.2 290.2,212.9 287.5,210.6 284.8,208.2 282.2,205.9 279.5,203.6 276.8,201.3 274.1,198.9 271.4,196.6 268.7,194.3 266.0,192.1 263.3,189.8 260.6,187.5 257.8,185.2 255.1,182.9 252.4,180.6 249.7,178.3 247.0,176.0 247.0,176.0 247.4,174.7 247.8,173.3 248.2,172.0 248.5,170.7 248.9,169.3 249.3,168.0 249.7,166.7 250.1,165.3 250.5,164.0 250.8,162.7 251.2,161.3 251.6,160.0 252.0,158.7 252.4,157.3 252.8,156.0 253.2,154.7 253.5,153.3 253.9,152.0 254.3,150.7 254.7,149.3 255.1,148.0 255.5,146.7 255.8,145.3 256.2,144.0 256.6,142.7 257.0,141.3 257.4,140.0 257.8,138.7 258.2,137.3 258.5,136.0 258.9,134.7 259.3,133.3 259.7,132.0 260.1,130.7 260.5,129.3 260.8,128.0 261.2,126.7 261.6,125.3 262.0,124.0Z" fill="#e0746a"/>
<path d="M260.1,130.5 263.5,132.8 266.9,135.1 270.3,137.3 273.8,139.4 277.3,141.4 280.9,143.4 284.5,145.3 288.1,147.1 291.8,149.0 295.4,150.8 299.0,152.7 302.6,154.5 306.2,156.4 309.9,158.3 313.4,160.2 317.0,162.2 320.5,164.3 324.0,166.4 327.4,168.6 330.8,170.8 334.2,173.1 337.7,175.3 341.1,177.5 344.7,179.5 348.2,181.5 351.9,183.2 355.7,184.8 359.5,186.1 363.4,187.2 367.3,188.2 371.2,189.0 375.2,189.7 379.1,190.3 383.0,190.9 387.0,191.4 390.9,191.9 394.9,192.3 398.8,192.8 402.8,193.4M258.2,137.0 261.5,139.3 264.8,141.6 268.1,143.8 271.5,145.9 274.9,148.0 278.4,150.0 281.9,151.9 285.4,153.9 288.9,155.8 292.3,157.7 295.8,159.6 299.3,161.5 302.8,163.5 306.3,165.4 309.7,167.4 313.2,169.4 316.6,171.5 320.0,173.7 323.3,175.9 326.6,178.1 329.9,180.4 333.3,182.6 336.7,184.7 340.1,186.8 343.6,188.7 347.1,190.5 350.8,192.2 354.4,193.6 358.2,194.9 361.9,196.0 365.6,197.1 369.4,198.0 373.1,198.9 376.8,199.8 380.6,200.6 384.3,201.4 388.0,202.1 391.8,202.9 395.5,203.8M256.4,143.5 259.6,145.8 262.8,148.1 266.0,150.3 269.2,152.5 272.5,154.6 275.9,156.6 279.2,158.6 282.6,160.6 285.9,162.6 289.3,164.6 292.7,166.6 296.0,168.5 299.4,170.6 302.7,172.6 306.0,174.6 309.4,176.7 312.6,178.8 315.9,181.0 319.1,183.2 322.4,185.4 325.6,187.7 328.9,189.8 332.2,192.0 335.5,194.0 338.9,196.0 342.4,197.8 345.9,199.6 349.4,201.1 352.9,202.6 356.5,203.9 360.0,205.2 363.6,206.4 367.1,207.5 370.6,208.7 374.2,209.8 377.7,210.9 381.2,211.9 384.7,213.0 388.2,214.1M254.5,150.0 257.6,152.3 260.7,154.6 263.8,156.8 267.0,159.0 270.1,161.2 273.4,163.2 276.6,165.3 279.8,167.4 283.0,169.4 286.3,171.4 289.5,173.5 292.7,175.6 295.9,177.6 299.1,179.7 302.3,181.8 305.5,183.9 308.7,186.1 311.9,188.3 315.0,190.5 318.1,192.7 321.3,194.9 324.5,197.1 327.7,199.2 331.0,201.3 334.3,203.2 337.6,205.1 341.0,207.0 344.3,208.6 347.7,210.2 351.1,211.8 354.5,213.3 357.8,214.8 361.1,216.2 364.5,217.6 367.8,219.0 371.1,220.3 374.4,221.7 377.7,223.1 381.0,224.5M252.6,156.5 255.6,158.8 258.6,161.1 261.6,163.3 264.7,165.6 267.7,167.7 270.8,169.9 273.9,172.0 277.0,174.1 280.1,176.2 283.2,178.3 286.3,180.4 289.4,182.6 292.5,184.7 295.6,186.8 298.6,189.0 301.7,191.2 304.8,193.4 307.8,195.6 310.8,197.8 313.9,200.0 317.0,202.2 320.1,204.4 323.2,206.5 326.4,208.5 329.6,210.5 332.8,212.4 336.1,214.3 339.3,216.1 342.5,217.9 345.7,219.7 348.9,221.4 352.0,223.1 355.1,224.8 358.3,226.5 361.4,228.2 364.5,229.8 367.6,231.5 370.6,233.2 373.8,234.9M250.8,163.0 253.7,165.3 256.6,167.6 259.5,169.8 262.4,172.1 265.4,174.3 268.3,176.5 271.3,178.7 274.2,180.9 277.2,183.0 280.2,185.2 283.1,187.4 286.1,189.6 289.0,191.8 292.0,194.0 294.9,196.2 297.9,198.4 300.8,200.6 303.8,202.9 306.7,205.1 309.7,207.3 312.7,209.5 315.7,211.6 318.7,213.7 321.8,215.7 324.9,217.8 328.0,219.7 331.1,221.7 334.2,223.6 337.3,225.6 340.3,227.5 343.3,229.5 346.2,231.5 349.2,233.4 352.1,235.4 355.0,237.4 357.8,239.3 360.7,241.3 363.6,243.3 366.5,245.2M248.9,169.5 251.7,171.8 254.5,174.1 257.3,176.4 260.1,178.6 263.0,180.9 265.8,183.1 268.6,185.4 271.5,187.6 274.3,189.8 277.1,192.1 280.0,194.3 282.8,196.6 285.6,198.8 288.4,201.1 291.2,203.4 294.1,205.6 296.9,207.9 299.7,210.2 302.6,212.4 305.4,214.6 308.3,216.8 311.3,218.9 314.3,221.0 317.3,223.0 320.3,225.0 323.3,227.0 326.2,229.1 329.2,231.1 332.1,233.2 334.9,235.4 337.7,237.6 340.4,239.8 343.2,242.1 345.9,244.3 348.6,246.6 351.2,248.8 353.9,251.1 356.6,253.4 359.2,255.6M277.3,133.5 276.8,134.9 276.3,136.2 275.9,137.6 275.4,138.9 274.9,140.2 274.4,141.6 274.0,142.9 273.5,144.3 273.0,145.6 272.5,147.0 272.1,148.3 271.6,149.6 271.1,151.0 270.6,152.3 270.2,153.7 269.7,155.0 269.2,156.4 268.7,157.7 268.3,159.1 267.8,160.4 267.3,161.7 266.8,163.1 266.4,164.4 265.9,165.8 265.4,167.1 264.9,168.5 264.5,169.8 264.0,171.2 263.5,172.5 263.0,173.8 262.6,175.2 262.1,176.5 261.6,177.9 261.1,179.2 260.7,180.6 260.2,181.9 259.7,183.2 259.2,184.6 258.8,185.9M293.4,141.6 292.8,143.0 292.2,144.4 291.7,145.8 291.1,147.1 290.5,148.5 289.9,149.9 289.3,151.3 288.7,152.7 288.1,154.1 287.5,155.5 287.0,156.9 286.4,158.3 285.8,159.7 285.2,161.1 284.6,162.5 284.0,163.9 283.4,165.2 282.8,166.6 282.3,168.0 281.7,169.4 281.1,170.8 280.5,172.2 279.9,173.6 279.3,175.0 278.7,176.4 278.1,177.8 277.6,179.2 277.0,180.6 276.4,182.0 275.8,183.3 275.2,184.7 274.6,186.1 274.0,187.5 273.4,188.9 272.8,190.3 272.3,191.7 271.7,193.1 271.1,194.5 270.5,195.9M309.7,149.3 309.0,150.8 308.3,152.2 307.6,153.7 306.9,155.1 306.2,156.6 305.5,158.0 304.7,159.5 304.0,160.9 303.3,162.4 302.6,163.8 301.9,165.3 301.2,166.7 300.5,168.2 299.8,169.6 299.1,171.1 298.4,172.5 297.7,174.0 297.0,175.4 296.3,176.9 295.6,178.4 294.9,179.8 294.2,181.3 293.5,182.7 292.8,184.2 292.0,185.6 291.3,187.1 290.6,188.5 289.9,190.0 289.2,191.4 288.5,192.9 287.8,194.3 287.1,195.8 286.4,197.2 285.7,198.7 285.0,200.1 284.3,201.6 283.6,203.0 282.9,204.5 282.2,205.9M325.7,157.7 324.8,159.2 324.0,160.7 323.2,162.2 322.4,163.6 321.6,165.1 320.8,166.6 319.9,168.1 319.1,169.6 318.3,171.1 317.5,172.6 316.7,174.1 315.9,175.6 315.1,177.1 314.2,178.6 313.4,180.1 312.6,181.6 311.8,183.1 311.0,184.6 310.2,186.1 309.3,187.6 308.5,189.0 307.7,190.5 306.9,192.0 306.1,193.5 305.3,195.0 304.4,196.5 303.6,198.0 302.8,199.5 302.0,201.0 301.2,202.5 300.4,204.0 299.6,205.5 298.7,207.0 297.9,208.5 297.1,210.0 296.3,211.5 295.5,213.0 294.7,214.4 293.8,215.9M340.9,167.3 340.0,168.8 339.1,170.3 338.2,171.8 337.3,173.3 336.4,174.8 335.5,176.3 334.6,177.8 333.7,179.2 332.8,180.7 331.9,182.2 331.0,183.7 330.1,185.2 329.2,186.7 328.3,188.2 327.4,189.7 326.5,191.2 325.6,192.7 324.8,194.2 323.9,195.6 323.0,197.1 322.1,198.6 321.2,200.1 320.3,201.6 319.4,203.1 318.5,204.6 317.6,206.1 316.7,207.6 315.8,209.1 314.9,210.5 314.0,212.0 313.1,213.5 312.2,215.0 311.3,216.5 310.4,218.0 309.5,219.5 308.6,221.0 307.7,222.5 306.8,224.0 305.9,225.5M356.7,175.9 355.7,177.4 354.7,178.9 353.7,180.4 352.8,181.9 351.8,183.4 350.8,184.9 349.8,186.4 348.9,187.9 347.9,189.4 346.9,190.9 345.9,192.4 344.9,193.9 344.0,195.4 343.0,196.9 342.0,198.4 341.0,199.9 340.0,201.4 339.1,202.9 338.1,204.4 337.1,205.9 336.1,207.4 335.1,208.9 334.2,210.4 333.2,211.9 332.2,213.4 331.2,214.9 330.2,216.4 329.3,217.9 328.3,219.4 327.3,220.9 326.3,222.4 325.4,223.9 324.4,225.4 323.4,226.9 322.4,228.4 321.4,229.8 320.5,231.3 319.5,232.8 318.5,234.3M374.1,180.5 372.9,182.1 371.8,183.7 370.7,185.4 369.6,187.0 368.5,188.6 367.3,190.3 366.2,191.9 365.1,193.5 364.0,195.2 362.9,196.8 361.7,198.4 360.6,200.0 359.5,201.7 358.4,203.3 357.3,204.9 356.1,206.6 355.0,208.2 353.9,209.8 352.8,211.5 351.7,213.1 350.5,214.7 349.4,216.4 348.3,218.0 347.2,219.6 346.1,221.3 344.9,222.9 343.8,224.5 342.7,226.1 341.6,227.8 340.5,229.4 339.3,231.0 338.2,232.7 337.1,234.3 336.0,235.9 334.9,237.6 333.7,239.2 332.6,240.8 331.5,242.5 330.4,244.1M392.0,182.1 390.7,184.0 389.4,185.8 388.1,187.7 386.8,189.6 385.5,191.4 384.2,193.3 382.9,195.2 381.6,197.0 380.3,198.9 379.0,200.8 377.7,202.6 376.4,204.5 375.1,206.4 373.8,208.2 372.5,210.1 371.2,212.0 369.9,213.8 368.6,215.7 367.3,217.6 366.0,219.4 364.7,221.3 363.4,223.2 362.1,225.0 360.8,226.9 359.5,228.8 358.2,230.6 356.9,232.5 355.6,234.4 354.3,236.2 353.0,238.1 351.7,240.0 350.4,241.8 349.1,243.7 347.8,245.6 346.5,247.4 345.2,249.3 343.9,251.2 342.6,253.0 341.3,254.9" fill="none" stroke="#62261e" stroke-width="0.8" stroke-opacity="0.9"/>
<path d="M687.0,124.0 683.5,126.3 680.1,128.6 676.5,130.8 672.9,132.9 669.3,134.8 665.6,136.7 661.8,138.6 658.1,140.4 654.3,142.2 650.6,144.0 646.8,145.7 643.1,147.5 639.3,149.3 635.6,151.2 631.9,153.0 628.2,154.9 624.5,157.0 621.0,159.1 617.4,161.3 613.9,163.5 610.4,165.8 606.9,168.0 603.4,170.2 599.8,172.3 596.1,174.2 592.3,175.9 588.4,177.4 584.5,178.6 580.4,179.6 576.3,180.3 572.2,180.8 568.1,181.3 563.9,181.7 559.8,182.0 555.6,182.2 551.5,182.4 547.3,182.5 543.2,182.7 539.0,183.0 539.0,183.0 540.5,185.1 542.0,187.3 543.5,189.4 544.9,191.5 546.4,193.6 547.9,195.8 549.4,197.9 550.9,200.0 552.4,202.2 553.9,204.3 555.4,206.4 556.8,208.5 558.3,210.7 559.8,212.8 561.3,214.9 562.8,217.1 564.3,219.2 565.8,221.3 567.3,223.4 568.7,225.6 570.2,227.7 571.7,229.8 573.2,231.9 574.7,234.1 576.2,236.2 577.7,238.3 579.2,240.5 580.6,242.6 582.1,244.7 583.6,246.8 585.1,249.0 586.6,251.1 588.1,253.2 589.6,255.4 591.1,257.5 592.5,259.6 594.0,261.7 595.5,263.9 597.0,266.0 597.0,266.0 599.5,263.5 601.9,260.9 604.4,258.3 606.8,255.8 609.3,253.2 611.8,250.7 614.3,248.2 616.9,245.7 619.5,243.3 622.1,240.9 624.9,238.7 627.7,236.5 630.5,234.3 633.4,232.3 636.3,230.2 639.2,228.2 642.1,226.1 645.0,224.1 647.8,221.9 650.6,219.7 653.3,217.5 656.1,215.2 658.8,212.9 661.5,210.6 664.2,208.2 666.8,205.9 669.5,203.6 672.2,201.3 674.9,198.9 677.6,196.6 680.3,194.3 683.0,192.1 685.7,189.8 688.4,187.5 691.2,185.2 693.9,182.9 696.6,180.6 699.3,178.3 702.0,176.0 702.0,176.0 701.6,174.7 701.2,173.3 700.8,172.0 700.5,170.7 700.1,169.3 699.7,168.0 699.3,166.7 698.9,165.3 698.5,164.0 698.2,162.7 697.8,161.3 697.4,160.0 697.0,158.7 696.6,157.3 696.2,156.0 695.8,154.7 695.5,153.3 695.1,152.0 694.7,150.7 694.3,149.3 693.9,148.0 693.5,146.7 693.2,145.3 692.8,144.0 692.4,142.7 692.0,141.3 691.6,140.0 691.2,138.7 690.8,137.3 690.5,136.0 690.1,134.7 689.7,133.3 689.3,132.0 688.9,130.7 688.5,129.3 688.2,128.0 687.8,126.7 687.4,125.3 687.0,124.0Z" fill="#e0746a"/>
<path d="M688.9,130.5 685.5,132.8 682.1,135.1 678.7,137.3 675.2,139.4 671.7,141.4 668.1,143.4 664.5,145.3 660.9,147.1 657.2,149.0 653.6,150.8 650.0,152.7 646.4,154.5 642.8,156.4 639.1,158.3 635.6,160.2 632.0,162.2 628.5,164.3 625.0,166.4 621.6,168.6 618.2,170.8 614.8,173.1 611.3,175.3 607.9,177.5 604.3,179.5 600.8,181.5 597.1,183.2 593.3,184.8 589.5,186.1 585.6,187.2 581.7,188.2 577.8,189.0 573.8,189.7 569.9,190.3 566.0,190.9 562.0,191.4 558.1,191.9 554.1,192.3 550.2,192.8 546.2,193.4M690.8,137.0 687.5,139.3 684.2,141.6 680.9,143.8 677.5,145.9 674.1,148.0 670.6,150.0 667.1,151.9 663.6,153.9 660.1,155.8 656.7,157.7 653.2,159.6 649.7,161.5 646.2,163.5 642.7,165.4 639.3,167.4 635.8,169.4 632.4,171.5 629.0,173.7 625.7,175.9 622.4,178.1 619.1,180.4 615.7,182.6 612.3,184.7 608.9,186.8 605.4,188.7 601.9,190.5 598.2,192.2 594.6,193.6 590.8,194.9 587.1,196.0 583.4,197.1 579.6,198.0 575.9,198.9 572.2,199.8 568.4,200.6 564.7,201.4 561.0,202.1 557.2,202.9 553.5,203.8M692.6,143.5 689.4,145.8 686.2,148.1 683.0,150.3 679.8,152.5 676.5,154.6 673.1,156.6 669.8,158.6 666.4,160.6 663.1,162.6 659.7,164.6 656.3,166.6 653.0,168.5 649.6,170.6 646.3,172.6 643.0,174.6 639.6,176.7 636.4,178.8 633.1,181.0 629.9,183.2 626.6,185.4 623.4,187.7 620.1,189.8 616.8,192.0 613.5,194.0 610.1,196.0 606.6,197.8 603.1,199.6 599.6,201.1 596.1,202.6 592.5,203.9 589.0,205.2 585.4,206.4 581.9,207.5 578.4,208.7 574.8,209.8 571.3,210.9 567.8,211.9 564.3,213.0 560.8,214.1M694.5,150.0 691.4,152.3 688.3,154.6 685.2,156.8 682.0,159.0 678.9,161.2 675.6,163.2 672.4,165.3 669.2,167.4 666.0,169.4 662.7,171.4 659.5,173.5 656.3,175.6 653.1,177.6 649.9,179.7 646.7,181.8 643.5,183.9 640.3,186.1 637.1,188.3 634.0,190.5 630.9,192.7 627.7,194.9 624.5,197.1 621.3,199.2 618.0,201.3 614.7,203.2 611.4,205.1 608.0,207.0 604.7,208.6 601.3,210.2 597.9,211.8 594.5,213.3 591.2,214.8 587.9,216.2 584.5,217.6 581.2,219.0 577.9,220.3 574.6,221.7 571.3,223.1 568.0,224.5M696.4,156.5 693.4,158.8 690.4,161.1 687.4,163.3 684.3,165.6 681.3,167.7 678.2,169.9 675.1,172.0 672.0,174.1 668.9,176.2 665.8,178.3 662.7,180.4 659.6,182.6 656.5,184.7 653.4,186.8 650.4,189.0 647.3,191.2 644.2,193.4 641.2,195.6 638.2,197.8 635.1,200.0 632.0,202.2 628.9,204.4 625.8,206.5 622.6,208.5 619.4,210.5 616.2,212.4 612.9,214.3 609.7,216.1 606.5,217.9 603.3,219.7 600.1,221.4 597.0,223.1 593.9,224.8 590.7,226.5 587.6,228.2 584.5,229.8 581.4,231.5 578.4,233.2 575.2,234.9M698.2,163.0 695.3,165.3 692.4,167.6 689.5,169.8 686.6,172.1 683.6,174.3 680.7,176.5 677.7,178.7 674.8,180.9 671.8,183.0 668.8,185.2 665.9,187.4 662.9,189.6 660.0,191.8 657.0,194.0 654.1,196.2 651.1,198.4 648.2,200.6 645.2,202.9 642.3,205.1 639.3,207.3 636.3,209.5 633.3,211.6 630.3,213.7 627.2,215.7 624.1,217.8 621.0,219.7 617.9,221.7 614.8,223.6 611.7,225.6 608.7,227.5 605.7,229.5 602.8,231.5 599.8,233.4 596.9,235.4 594.0,237.4 591.2,239.3 588.3,241.3 585.4,243.3 582.5,245.2M700.1,169.5 697.3,171.8 694.5,174.1 691.7,176.4 688.9,178.6 686.0,180.9 683.2,183.1 680.4,185.4 677.5,187.6 674.7,189.8 671.9,192.1 669.0,194.3 666.2,196.6 663.4,198.8 660.6,201.1 657.8,203.4 654.9,205.6 652.1,207.9 649.3,210.2 646.4,212.4 643.6,214.6 640.7,216.8 637.7,218.9 634.7,221.0 631.7,223.0 628.7,225.0 625.7,227.0 622.8,229.1 619.8,231.1 616.9,233.2 614.1,235.4 611.3,237.6 608.6,239.8 605.8,242.1 603.1,244.3 600.4,246.6 597.8,248.8 595.1,251.1 592.4,253.4 589.8,255.6M671.7,133.5 672.2,134.9 672.7,136.2 673.1,137.6 673.6,138.9 674.1,140.2 674.6,141.6 675.0,142.9 675.5,144.3 676.0,145.6 676.5,147.0 676.9,148.3 677.4,149.6 677.9,151.0 678.4,152.3 678.8,153.7 679.3,155.0 679.8,156.4 680.3,157.7 680.7,159.1 681.2,160.4 681.7,161.7 682.2,163.1 682.6,164.4 683.1,165.8 683.6,167.1 684.1,168.5 684.5,169.8 685.0,171.2 685.5,172.5 686.0,173.8 686.4,175.2 686.9,176.5 687.4,177.9 687.9,179.2 688.3,180.6 688.8,181.9 689.3,183.2 689.8,184.6 690.2,185.9M655.6,141.6 656.2,143.0 656.8,144.4 657.3,145.8 657.9,147.1 658.5,148.5 659.1,149.9 659.7,151.3 660.3,152.7 660.9,154.1 661.5,155.5 662.0,156.9 662.6,158.3 663.2,159.7 663.8,161.1 664.4,162.5 665.0,163.9 665.6,165.2 666.2,166.6 666.7,168.0 667.3,169.4 667.9,170.8 668.5,172.2 669.1,173.6 669.7,175.0 670.3,176.4 670.9,177.8 671.4,179.2 672.0,180.6 672.6,182.0 673.2,183.3 673.8,184.7 674.4,186.1 675.0,187.5 675.6,188.9 676.2,190.3 676.7,191.7 677.3,193.1 677.9,194.5 678.5,195.9M639.3,149.3 640.0,150.8 640.7,152.2 641.4,153.7 642.1,155.1 642.8,156.6 643.5,158.0 644.3,159.5 645.0,160.9 645.7,162.4 646.4,163.8 647.1,165.3 647.8,166.7 648.5,168.2 649.2,169.6 649.9,171.1 650.6,172.5 651.3,174.0 652.0,175.4 652.7,176.9 653.4,178.4 654.1,179.8 654.8,181.3 655.5,182.7 656.2,184.2 657.0,185.6 657.7,187.1 658.4,188.5 659.1,190.0 659.8,191.4 660.5,192.9 661.2,194.3 661.9,195.8 662.6,197.2 663.3,198.7 664.0,200.1 664.7,201.6 665.4,203.0 666.1,204.5 666.8,205.9M623.3,157.7 624.2,159.2 625.0,160.7 625.8,162.2 626.6,163.6 627.4,165.1 628.2,166.6 629.1,168.1 629.9,169.6 630.7,171.1 631.5,172.6 632.3,174.1 633.1,175.6 633.9,177.1 634.8,178.6 635.6,180.1 636.4,181.6 637.2,183.1 638.0,184.6 638.8,186.1 639.7,187.6 640.5,189.0 641.3,190.5 642.1,192.0 642.9,193.5 643.7,195.0 644.6,196.5 645.4,198.0 646.2,199.5 647.0,201.0 647.8,202.5 648.6,204.0 649.4,205.5 650.3,207.0 651.1,208.5 651.9,210.0 652.7,211.5 653.5,213.0 654.3,214.4 655.2,215.9M608.1,167.3 609.0,168.8 609.9,170.3 610.8,171.8 611.7,173.3 612.6,174.8 613.5,176.3 614.4,177.8 615.3,179.2 616.2,180.7 617.1,182.2 618.0,183.7 618.9,185.2 619.8,186.7 620.7,188.2 621.6,189.7 622.5,191.2 623.4,192.7 624.2,194.2 625.1,195.6 626.0,197.1 626.9,198.6 627.8,200.1 628.7,201.6 629.6,203.1 630.5,204.6 631.4,206.1 632.3,207.6 633.2,209.1 634.1,210.5 635.0,212.0 635.9,213.5 636.8,215.0 637.7,216.5 638.6,218.0 639.5,219.5 640.4,221.0 641.3,222.5 642.2,224.0 643.1,225.5M592.3,175.9 593.3,177.4 594.3,178.9 595.3,180.4 596.2,181.9 597.2,183.4 598.2,184.9 599.2,186.4 600.1,187.9 601.1,189.4 602.1,190.9 603.1,192.4 604.1,193.9 605.0,195.4 606.0,196.9 607.0,198.4 608.0,199.9 609.0,201.4 609.9,202.9 610.9,204.4 611.9,205.9 612.9,207.4 613.9,208.9 614.8,210.4 615.8,211.9 616.8,213.4 617.8,214.9 618.8,216.4 619.7,217.9 620.7,219.4 621.7,220.9 622.7,222.4 623.6,223.9 624.6,225.4 625.6,226.9 626.6,228.4 627.6,229.8 628.5,231.3 629.5,232.8 630.5,234.3M574.9,180.5 576.1,182.1 577.2,183.7 578.3,185.4 579.4,187.0 580.5,188.6 581.7,190.3 582.8,191.9 583.9,193.5 585.0,195.2 586.1,196.8 587.3,198.4 588.4,200.0 589.5,201.7 590.6,203.3 591.7,204.9 592.9,206.6 594.0,208.2 595.1,209.8 596.2,211.5 597.3,213.1 598.5,214.7 599.6,216.4 600.7,218.0 601.8,219.6 602.9,221.3 604.1,222.9 605.2,224.5 606.3,226.1 607.4,227.8 608.5,229.4 609.7,231.0 610.8,232.7 611.9,234.3 613.0,235.9 614.1,237.6 615.3,239.2 616.4,240.8 617.5,242.5 618.6,244.1M557.0,182.1 558.3,184.0 559.6,185.8 560.9,187.7 562.2,189.6 563.5,191.4 564.8,193.3 566.1,195.2 567.4,197.0 568.7,198.9 570.0,200.8 571.3,202.6 572.6,204.5 573.9,206.4 575.2,208.2 576.5,210.1 577.8,212.0 579.1,213.8 580.4,215.7 581.7,217.6 583.0,219.4 584.3,221.3 585.6,223.2 586.9,225.0 588.2,226.9 589.5,228.8 590.8,230.6 592.1,232.5 593.4,234.4 594.7,236.2 596.0,238.1 597.3,240.0 598.6,241.8 599.9,243.7 601.2,245.6 602.5,247.4 603.8,249.3 605.1,251.2 606.4,253.0 607.7,254.9" fill="none" stroke="#62261e" stroke-width="0.8" stroke-opacity="0.9"/>
<path d="M295.0,418.0 299.6,417.5 304.2,417.0 308.8,416.4 313.4,415.9 318.0,415.4 322.6,414.9 327.2,414.3 331.8,413.8 336.4,413.3 341.0,412.8 345.6,412.3 350.2,411.8 354.8,411.3 359.4,410.8 364.0,410.3 368.6,409.9 373.2,409.4 377.9,409.0 382.5,408.6 387.1,408.2 391.7,407.9 396.3,407.6 401.0,407.3 405.6,407.1 410.2,406.9 414.8,406.7 419.5,406.5 424.1,406.3 428.7,406.2 433.3,406.0 438.0,405.9 442.6,405.8 447.2,405.7 451.9,405.6 456.5,405.4 461.1,405.3 465.7,405.2 470.4,405.1 475.0,405.0M300.9,439.4 305.4,439.1 309.9,438.9 314.4,438.6 318.8,438.3 323.3,438.0 327.8,437.8 332.3,437.5 336.8,437.2 341.2,437.0 345.7,436.7 350.2,436.4 354.7,436.2 359.2,436.0 363.7,435.7 368.1,435.5 372.6,435.3 377.1,435.1 381.6,434.9 386.1,434.8 390.6,434.6 395.1,434.5 399.6,434.5 404.1,434.4 408.6,434.4 413.1,434.4 417.6,434.5 422.1,434.5 426.6,434.5 431.1,434.6 435.6,434.7 440.1,434.8 444.6,434.9 449.1,435.0 453.6,435.1 458.1,435.2 462.6,435.3 467.1,435.4 471.7,435.5 476.2,435.6M302.3,461.6 306.8,461.6 311.2,461.6 315.7,461.5 320.2,461.5 324.6,461.4 329.1,461.4 333.5,461.4 338.0,461.3 342.4,461.3 346.9,461.3 351.3,461.2 355.8,461.2 360.2,461.2 364.7,461.2 369.2,461.2 373.6,461.2 378.1,461.3 382.6,461.3 387.0,461.4 391.5,461.5 396.0,461.6 400.4,461.7 404.9,461.9 409.4,462.1 413.8,462.3 418.3,462.5 422.8,462.8 427.3,463.0 431.7,463.3 436.2,463.5 440.7,463.8 445.2,464.1 449.6,464.4 454.1,464.7 458.6,465.0 463.1,465.3 467.6,465.6 472.0,465.9 476.5,466.2M302.6,483.9 306.9,484.1 311.2,484.2 315.5,484.4 319.7,484.6 324.0,484.7 328.3,484.9 332.6,485.0 336.8,485.2 341.1,485.3 345.4,485.5 349.7,485.7 353.9,485.9 358.2,486.1 362.5,486.3 366.8,486.5 371.1,486.7 375.3,486.9 379.6,487.1 383.9,487.4 388.2,487.6 392.5,487.9 396.8,488.3 401.1,488.6 405.3,488.9 409.6,489.3 413.9,489.7 418.2,490.1 422.5,490.5 426.8,491.0 431.1,491.4 435.4,491.8 439.7,492.3 444.0,492.7 448.3,493.2 452.6,493.6 456.9,494.1 461.2,494.6 465.5,495.0 469.8,495.4M300.1,506.0 303.8,506.1 307.6,506.3 311.4,506.4 315.1,506.5 318.9,506.7 322.7,506.8 326.4,506.9 330.2,507.1 334.0,507.2 337.7,507.4 341.5,507.5 345.3,507.7 349.0,507.8 352.8,508.0 356.6,508.1 360.3,508.3 364.1,508.5 367.9,508.7 371.6,508.9 375.4,509.2 379.2,509.4 383.0,509.7 386.8,510.0 390.5,510.3 394.3,510.6 398.1,510.9 401.9,511.3 405.6,511.6 409.4,512.0 413.2,512.4 417.0,512.7 420.8,513.1 424.5,513.5 428.3,513.9 432.1,514.3 435.9,514.7 439.7,515.1 443.5,515.4 447.2,515.8M292.0,526.7 295.5,526.9 298.9,527.2 302.4,527.4 305.9,527.7 309.4,527.9 312.9,528.1 316.4,528.4 319.9,528.6 323.3,528.8 326.8,529.1 330.3,529.3 333.8,529.6 337.3,529.8 340.8,530.1 344.3,530.4 347.8,530.6 351.2,530.9 354.7,531.2 358.2,531.5 361.7,531.8 365.2,532.2 368.7,532.5 372.2,532.9 375.7,533.3 379.2,533.7 382.7,534.1 386.2,534.5 389.7,534.9 393.2,535.3 396.7,535.8 400.2,536.2 403.7,536.6 407.2,537.1 410.7,537.5 414.2,538.0 417.7,538.4 421.2,538.9 424.7,539.3 428.2,539.8M282.4,546.8 285.7,547.2 288.9,547.6 292.2,547.9 295.4,548.3 298.7,548.6 301.9,549.0 305.1,549.3 308.4,549.7 311.6,550.0 314.9,550.4 318.1,550.8 321.4,551.1 324.6,551.5 327.9,551.9 331.1,552.3 334.4,552.6 337.6,553.0 340.9,553.4 344.1,553.8 347.4,554.3 350.6,554.7 353.9,555.1 357.1,555.6 360.4,556.1 363.6,556.5 366.9,557.0 370.1,557.5 373.4,558.0 376.6,558.5 379.9,559.0 383.1,559.6 386.4,560.1 389.7,560.6 392.9,561.1 396.2,561.7 399.4,562.2 402.7,562.7 405.9,563.2 409.2,563.8M274.7,567.6 277.6,568.1 280.5,568.5 283.5,568.9 286.4,569.4 289.3,569.8 292.3,570.2 295.2,570.7 298.1,571.1 301.0,571.5 304.0,572.0 306.9,572.4 309.8,572.9 312.8,573.3 315.7,573.7 318.6,574.2 321.6,574.6 324.5,575.1 327.4,575.6 330.4,576.0 333.3,576.5 336.2,577.0 339.2,577.5 342.1,578.0 345.0,578.5 348.0,579.1 350.9,579.6 353.8,580.1 356.8,580.7 359.7,581.2 362.7,581.8 365.6,582.3 368.5,582.9 371.5,583.5 374.4,584.0 377.3,584.6 380.3,585.1 383.2,585.7 386.2,586.3 389.1,586.8M271.6,589.7 274.0,590.1 276.4,590.5 278.8,590.9 281.3,591.3 283.7,591.7 286.1,592.1 288.5,592.5 290.9,592.9 293.4,593.3 295.8,593.7 298.2,594.1 300.6,594.5 303.0,594.9 305.5,595.3 307.9,595.7 310.3,596.2 312.7,596.6 315.1,597.0 317.6,597.4 320.0,597.9 322.4,598.3 324.8,598.7 327.2,599.2 329.7,599.6 332.1,600.1 334.5,600.6 336.9,601.1 339.3,601.5 341.8,602.0 344.2,602.5 346.6,603.0 349.0,603.5 351.5,603.9 353.9,604.4 356.3,604.9 358.7,605.4 361.2,605.9 363.6,606.4 366.0,606.9M263.4,610.2 265.4,610.6 267.5,611.0 269.5,611.4 271.5,611.8 273.5,612.2 275.6,612.6 277.6,613.0 279.6,613.4 281.7,613.8 283.7,614.2 285.7,614.6 287.7,615.0 289.8,615.4 291.8,615.8 293.8,616.2 295.9,616.6 297.9,617.0 299.9,617.4 301.9,617.8 304.0,618.2 306.0,618.6 308.0,619.0 310.1,619.5 312.1,619.9 314.1,620.3 316.2,620.8 318.2,621.2 320.2,621.6 322.2,622.1 324.3,622.5 326.3,622.9 328.3,623.4 330.4,623.8 332.4,624.3 334.4,624.7 336.4,625.2 338.5,625.6 340.5,626.0 342.5,626.5M312.9,416.0 314.8,421.6 316.6,427.2 317.8,433.0 318.5,438.9 318.9,444.9 319.2,450.8 319.6,456.7 319.7,462.7 319.9,468.6 319.9,474.6 319.7,480.5 319.1,486.3 318.3,491.9 317.2,497.5 315.8,503.1 314.0,508.7 311.8,514.2 309.4,519.6 306.8,525.0 304.3,530.3 301.8,535.7 299.0,540.9 296.2,546.1 293.4,551.4 290.8,556.7 288.5,562.1 286.6,567.7 285.1,573.3 283.8,578.9 282.6,584.5 281.3,590.2 279.7,595.7 277.7,601.1 274.9,606.3 271.7,611.3 268.2,616.1 264.6,620.8 260.9,625.5 257.3,630.2M330.9,413.9 332.6,419.8 334.2,425.7 335.3,431.7 335.9,437.9 336.3,444.1 336.7,450.2 337.0,456.4 337.1,462.6 337.2,468.7 337.1,474.9 336.6,481.0 335.7,486.9 334.2,492.5 332.5,498.0 330.7,503.6 328.6,509.3 326.1,514.9 323.4,520.4 320.5,525.8 317.8,531.3 315.0,536.7 312.0,542.1 309.0,547.5 305.9,552.8 303.1,558.2 300.4,563.7 298.1,569.3 296.2,575.0 294.4,580.6 292.7,586.2 290.9,591.7 288.8,597.2 286.2,602.6 283.1,607.8 279.6,612.8 275.9,617.7 272.1,622.6 268.3,627.5 264.6,632.4M348.8,411.9 350.4,418.0 351.8,424.2 352.8,430.5 353.4,436.9 353.8,443.3 354.1,449.7 354.4,456.1 354.5,462.5 354.5,468.9 354.2,475.3 353.5,481.6 352.2,487.6 350.1,493.1 347.9,498.5 345.6,504.1 343.1,509.9 340.4,515.6 337.4,521.2 334.3,526.7 331.2,532.3 328.2,537.9 325.0,543.4 321.7,548.8 318.5,554.3 315.3,559.8 312.4,565.4 309.7,571.0 307.3,576.7 305.0,582.3 302.8,587.8 300.4,593.3 297.8,598.7 294.8,604.1 291.3,609.3 287.5,614.3 283.6,619.4 279.7,624.4 275.8,629.5 271.9,634.6M366.8,410.1 368.1,416.5 369.4,422.9 370.3,429.4 370.9,436.1 371.3,442.7 371.6,449.3 371.8,455.9 371.9,462.6 371.8,469.2 371.4,475.8 370.5,482.3 368.7,488.3 366.1,493.8 363.3,499.1 360.5,504.8 357.7,510.6 354.6,516.4 351.4,522.1 348.0,527.7 344.7,533.4 341.4,539.0 337.9,544.7 334.5,550.3 331.0,555.8 327.6,561.4 324.3,567.1 321.3,572.8 318.4,578.4 315.6,584.0 312.8,589.5 309.9,594.9 306.8,600.3 303.4,605.6 299.5,610.8 295.5,615.9 291.3,621.0 287.2,626.2 283.2,631.5 279.2,636.8M384.8,408.4 385.9,415.1 387.0,421.8 387.9,428.6 388.4,435.4 388.8,442.3 389.0,449.1 389.2,456.0 389.3,462.8 389.1,469.7 388.7,476.5 387.5,483.1 385.3,489.3 382.1,494.6 378.6,499.8 375.4,505.5 372.2,511.4 368.9,517.3 365.4,523.1 361.8,528.8 358.2,534.6 354.6,540.3 350.9,546.1 347.2,551.8 343.5,557.5 339.8,563.2 336.2,568.9 332.8,574.6 329.5,580.2 326.2,585.8 322.9,591.2 319.5,596.6 315.9,601.9 312.0,607.2 307.8,612.3 303.4,617.5 299.1,622.7 294.8,628.1 290.6,633.5 286.5,639.0M402.8,407.2 403.8,414.1 404.7,421.1 405.4,428.1 405.9,435.1 406.3,442.2 406.5,449.3 406.7,456.3 406.7,463.4 406.5,470.4 405.9,477.5 404.5,484.3 401.8,490.5 398.0,495.8 394.0,500.8 390.4,506.5 386.8,512.5 383.2,518.4 379.4,524.3 375.5,530.1 371.7,536.0 367.8,541.8 363.9,547.7 360.0,553.5 356.0,559.2 352.1,565.0 348.2,570.8 344.4,576.5 340.6,582.1 336.8,587.6 333.0,593.0 329.0,598.3 324.9,603.6 320.6,608.8 316.0,613.9 311.3,619.1 306.8,624.5 302.4,629.9 298.0,635.5 293.8,641.2M420.8,406.4 421.6,413.6 422.4,420.7 423.1,428.0 423.5,435.2 423.8,442.5 424.0,449.7 424.2,457.0 424.1,464.3 423.9,471.5 423.2,478.7 421.5,485.7 418.4,492.0 414.0,497.2 409.4,502.1 405.3,507.8 401.4,513.8 397.5,519.8 393.4,525.7 389.3,531.6 385.2,537.6 381.1,543.5 377.0,549.4 372.8,555.3 368.6,561.2 364.4,567.0 360.2,572.9 356.0,578.6 351.8,584.2 347.5,589.6 343.1,595.0 338.6,600.2 333.9,605.3 329.2,610.4 324.2,615.6 319.3,620.8 314.5,626.2 309.9,631.8 305.5,637.6 301.1,643.4M438.9,405.9 439.5,413.2 440.1,420.6 440.7,428.1 441.1,435.5 441.4,443.0 441.5,450.4 441.7,457.9 441.6,465.4 441.3,472.8 440.4,480.2 438.5,487.3 435.0,493.7 430.0,498.7 424.9,503.6 420.3,509.2 416.1,515.2 411.8,521.3 407.5,527.3 403.1,533.3 398.7,539.3 394.3,545.3 390.0,551.3 385.6,557.3 381.1,563.2 376.6,569.1 372.1,575.0 367.6,580.8 362.9,586.3 358.1,591.7 353.2,596.9 348.1,602.1 343.0,607.1 337.8,612.2 332.4,617.3 327.2,622.5 322.2,628.0 317.5,633.7 312.9,639.6 308.4,645.6M456.9,405.4 457.4,413.1 457.8,420.7 458.3,428.3 458.6,435.9 458.9,443.6 459.1,451.3 459.2,458.9 459.0,466.6 458.6,474.2 457.7,481.8 455.5,489.0 451.6,495.4 446.1,500.4 440.3,505.1 435.2,510.7 430.7,516.8 426.1,522.9 421.5,529.0 416.9,535.0 412.2,541.1 407.6,547.1 403.0,553.2 398.4,559.3 393.7,565.3 388.9,571.3 384.1,577.2 379.2,583.0 374.0,588.5 368.7,593.8 363.2,599.0 357.7,604.0 352.0,608.9 346.4,613.9 340.7,619.0 335.2,624.2 329.9,629.8 325.0,635.6 320.3,641.7 315.7,647.8" fill="none" stroke="#62261e" stroke-width="0.8" stroke-opacity="0.9"/>
<path d="M393.9,563.0 379.9,564.1 366.0,551.1 366.1,537.0 380.1,535.9 394.0,548.9 393.9,563.0M387.6,557.1 379.9,557.7 372.3,550.6 372.4,542.9 380.1,542.3 387.7,549.4 387.6,557.1M393.9,563.0 387.6,557.1M379.9,564.1 379.9,557.7M366.0,551.1 372.3,550.6M366.1,537.0 372.4,542.9M380.1,535.9 380.1,542.3M394.0,548.9 387.7,549.4" fill="none" stroke="#62261e" stroke-width="0.8" stroke-opacity="0.9"/>
<path d="M655.0,418.0 650.4,417.5 645.8,417.0 641.2,416.4 636.6,415.9 632.0,415.4 627.4,414.9 622.8,414.3 618.2,413.8 613.6,413.3 609.0,412.8 604.4,412.3 599.8,411.8 595.2,411.3 590.6,410.8 586.0,410.3 581.4,409.9 576.8,409.4 572.1,409.0 567.5,408.6 562.9,408.2 558.3,407.9 553.7,407.6 549.0,407.3 544.4,407.1 539.8,406.9 535.2,406.7 530.5,406.5 525.9,406.3 521.3,406.2 516.7,406.0 512.0,405.9 507.4,405.8 502.8,405.7 498.1,405.6 493.5,405.4 488.9,405.3 484.3,405.2 479.6,405.1 475.0,405.0M649.1,439.4 644.6,439.1 640.1,438.9 635.6,438.6 631.2,438.3 626.7,438.0 622.2,437.8 617.7,437.5 613.2,437.2 608.8,437.0 604.3,436.7 599.8,436.4 595.3,436.2 590.8,436.0 586.3,435.7 581.9,435.5 577.4,435.3 572.9,435.1 568.4,434.9 563.9,434.8 559.4,434.6 554.9,434.5 550.4,434.5 545.9,434.4 541.4,434.4 536.9,434.4 532.4,434.5 527.9,434.5 523.4,434.5 518.9,434.6 514.4,434.7 509.9,434.8 505.4,434.9 500.9,435.0 496.4,435.1 491.9,435.2 487.4,435.3 482.9,435.4 478.3,435.5 473.8,435.6M647.7,461.6 643.2,461.6 638.8,461.6 634.3,461.5 629.8,461.5 625.4,461.4 620.9,461.4 616.5,461.4 612.0,461.3 607.6,461.3 603.1,461.3 598.7,461.2 594.2,461.2 589.8,461.2 585.3,461.2 580.8,461.2 576.4,461.2 571.9,461.3 567.4,461.3 563.0,461.4 558.5,461.5 554.0,461.6 549.6,461.7 545.1,461.9 540.6,462.1 536.2,462.3 531.7,462.5 527.2,462.8 522.7,463.0 518.3,463.3 513.8,463.5 509.3,463.8 504.8,464.1 500.4,464.4 495.9,464.7 491.4,465.0 486.9,465.3 482.4,465.6 478.0,465.9 473.5,466.2M647.4,483.9 643.1,484.1 638.8,484.2 634.5,484.4 630.3,484.6 626.0,484.7 621.7,484.9 617.4,485.0 613.2,485.2 608.9,485.3 604.6,485.5 600.3,485.7 596.1,485.9 591.8,486.1 587.5,486.3 583.2,486.5 578.9,486.7 574.7,486.9 570.4,487.1 566.1,487.4 561.8,487.6 557.5,487.9 553.2,488.3 548.9,488.6 544.7,488.9 540.4,489.3 536.1,489.7 531.8,490.1 527.5,490.5 523.2,491.0 518.9,491.4 514.6,491.8 510.3,492.3 506.0,492.7 501.7,493.2 497.4,493.6 493.1,494.1 488.8,494.6 484.5,495.0 480.2,495.4M649.9,506.0 646.2,506.1 642.4,506.3 638.6,506.4 634.9,506.5 631.1,506.7 627.3,506.8 623.6,506.9 619.8,507.1 616.0,507.2 612.3,507.4 608.5,507.5 604.7,507.7 601.0,507.8 597.2,508.0 593.4,508.1 589.7,508.3 585.9,508.5 582.1,508.7 578.4,508.9 574.6,509.2 570.8,509.4 567.0,509.7 563.2,510.0 559.5,510.3 555.7,510.6 551.9,510.9 548.1,511.3 544.4,511.6 540.6,512.0 536.8,512.4 533.0,512.7 529.2,513.1 525.5,513.5 521.7,513.9 517.9,514.3 514.1,514.7 510.3,515.1 506.5,515.4 502.8,515.8M658.0,526.7 654.5,526.9 651.1,527.2 647.6,527.4 644.1,527.7 640.6,527.9 637.1,528.1 633.6,528.4 630.1,528.6 626.7,528.8 623.2,529.1 619.7,529.3 616.2,529.6 612.7,529.8 609.2,530.1 605.7,530.4 602.2,530.6 598.8,530.9 595.3,531.2 591.8,531.5 588.3,531.8 584.8,532.2 581.3,532.5 577.8,532.9 574.3,533.3 570.8,533.7 567.3,534.1 563.8,534.5 560.3,534.9 556.8,535.3 553.3,535.8 549.8,536.2 546.3,536.6 542.8,537.1 539.3,537.5 535.8,538.0 532.3,538.4 528.8,538.9 525.3,539.3 521.8,539.8M667.6,546.8 664.3,547.2 661.1,547.6 657.8,547.9 654.6,548.3 651.3,548.6 648.1,549.0 644.9,549.3 641.6,549.7 638.4,550.0 635.1,550.4 631.9,550.8 628.6,551.1 625.4,551.5 622.1,551.9 618.9,552.3 615.6,552.6 612.4,553.0 609.1,553.4 605.9,553.8 602.6,554.3 599.4,554.7 596.1,555.1 592.9,555.6 589.6,556.1 586.4,556.5 583.1,557.0 579.9,557.5 576.6,558.0 573.4,558.5 570.1,559.0 566.9,559.6 563.6,560.1 560.3,560.6 557.1,561.1 553.8,561.7 550.6,562.2 547.3,562.7 544.1,563.2 540.8,563.8M675.3,567.6 672.4,568.1 669.5,568.5 666.5,568.9 663.6,569.4 660.7,569.8 657.7,570.2 654.8,570.7 651.9,571.1 649.0,571.5 646.0,572.0 643.1,572.4 640.2,572.9 637.2,573.3 634.3,573.7 631.4,574.2 628.4,574.6 625.5,575.1 622.6,575.6 619.6,576.0 616.7,576.5 613.8,577.0 610.8,577.5 607.9,578.0 605.0,578.5 602.0,579.1 599.1,579.6 596.2,580.1 593.2,580.7 590.3,581.2 587.3,581.8 584.4,582.3 581.5,582.9 578.5,583.5 575.6,584.0 572.7,584.6 569.7,585.1 566.8,585.7 563.8,586.3 560.9,586.8M678.4,589.7 676.0,590.1 673.6,590.5 671.2,590.9 668.7,591.3 666.3,591.7 663.9,592.1 661.5,592.5 659.1,592.9 656.6,593.3 654.2,593.7 651.8,594.1 649.4,594.5 647.0,594.9 644.5,595.3 642.1,595.7 639.7,596.2 637.3,596.6 634.9,597.0 632.4,597.4 630.0,597.9 627.6,598.3 625.2,598.7 622.8,599.2 620.3,599.6 617.9,600.1 615.5,600.6 613.1,601.1 610.7,601.5 608.2,602.0 605.8,602.5 603.4,603.0 601.0,603.5 598.5,603.9 596.1,604.4 593.7,604.9 591.3,605.4 588.8,605.9 586.4,606.4 584.0,606.9M686.6,610.2 684.6,610.6 682.5,611.0 680.5,611.4 678.5,611.8 676.5,612.2 674.4,612.6 672.4,613.0 670.4,613.4 668.3,613.8 666.3,614.2 664.3,614.6 662.3,615.0 660.2,615.4 658.2,615.8 656.2,616.2 654.1,616.6 652.1,617.0 650.1,617.4 648.1,617.8 646.0,618.2 644.0,618.6 642.0,619.0 639.9,619.5 637.9,619.9 635.9,620.3 633.8,620.8 631.8,621.2 629.8,621.6 627.8,622.1 625.7,622.5 623.7,622.9 621.7,623.4 619.6,623.8 617.6,624.3 615.6,624.7 613.6,625.2 611.5,625.6 609.5,626.0 607.5,626.5M637.1,416.0 635.2,421.6 633.4,427.2 632.2,433.0 631.5,438.9 631.1,444.9 630.8,450.8 630.4,456.7 630.3,462.7 630.1,468.6 630.1,474.6 630.3,480.5 630.9,486.3 631.7,491.9 632.8,497.5 634.2,503.1 636.0,508.7 638.2,514.2 640.6,519.6 643.2,525.0 645.7,530.3 648.2,535.7 651.0,540.9 653.8,546.1 656.6,551.4 659.2,556.7 661.5,562.1 663.4,567.7 664.9,573.3 666.2,578.9 667.4,584.5 668.7,590.2 670.3,595.7 672.3,601.1 675.1,606.3 678.3,611.3 681.8,616.1 685.4,620.8 689.1,625.5 692.7,630.2M619.1,413.9 617.4,419.8 615.8,425.7 614.7,431.7 614.1,437.9 613.7,444.1 613.3,450.2 613.0,456.4 612.9,462.6 612.8,468.7 612.9,474.9 613.4,481.0 614.3,486.9 615.8,492.5 617.5,498.0 619.3,503.6 621.4,509.3 623.9,514.9 626.6,520.4 629.5,525.8 632.2,531.3 635.0,536.7 638.0,542.1 641.0,547.5 644.1,552.8 646.9,558.2 649.6,563.7 651.9,569.3 653.8,575.0 655.6,580.6 657.3,586.2 659.1,591.7 661.2,597.2 663.8,602.6 666.9,607.8 670.4,612.8 674.1,617.7 677.9,622.6 681.7,627.5 685.4,632.4M601.2,411.9 599.6,418.0 598.2,424.2 597.2,430.5 596.6,436.9 596.2,443.3 595.9,449.7 595.6,456.1 595.5,462.5 595.5,468.9 595.8,475.3 596.5,481.6 597.8,487.6 599.9,493.1 602.1,498.5 604.4,504.1 606.9,509.9 609.6,515.6 612.6,521.2 615.7,526.7 618.8,532.3 621.8,537.9 625.0,543.4 628.3,548.8 631.5,554.3 634.7,559.8 637.6,565.4 640.3,571.0 642.7,576.7 645.0,582.3 647.2,587.8 649.6,593.3 652.2,598.7 655.2,604.1 658.7,609.3 662.5,614.3 666.4,619.4 670.3,624.4 674.2,629.5 678.1,634.6M583.2,410.1 581.9,416.5 580.6,422.9 579.7,429.4 579.1,436.1 578.7,442.7 578.4,449.3 578.2,455.9 578.1,462.6 578.2,469.2 578.6,475.8 579.5,482.3 581.3,488.3 583.9,493.8 586.7,499.1 589.5,504.8 592.3,510.6 595.4,516.4 598.6,522.1 602.0,527.7 605.3,533.4 608.6,539.0 612.1,544.7 615.5,550.3 619.0,555.8 622.4,561.4 625.7,567.1 628.7,572.8 631.6,578.4 634.4,584.0 637.2,589.5 640.1,594.9 643.2,600.3 646.6,605.6 650.5,610.8 654.5,615.9 658.7,621.0 662.8,626.2 666.8,631.5 670.8,636.8M565.2,408.4 564.1,415.1 563.0,421.8 562.1,428.6 561.6,435.4 561.2,442.3 561.0,449.1 560.8,456.0 560.7,462.8 560.9,469.7 561.3,476.5 562.5,483.1 564.7,489.3 567.9,494.6 571.4,499.8 574.6,505.5 577.8,511.4 581.1,517.3 584.6,523.1 588.2,528.8 591.8,534.6 595.4,540.3 599.1,546.1 602.8,551.8 606.5,557.5 610.2,563.2 613.8,568.9 617.2,574.6 620.5,580.2 623.8,585.8 627.1,591.2 630.5,596.6 634.1,601.9 638.0,607.2 642.2,612.3 646.6,617.5 650.9,622.7 655.2,628.1 659.4,633.5 663.5,639.0M547.2,407.2 546.2,414.1 545.3,421.1 544.6,428.1 544.1,435.1 543.7,442.2 543.5,449.3 543.3,456.3 543.3,463.4 543.5,470.4 544.1,477.5 545.5,484.3 548.2,490.5 552.0,495.8 556.0,500.8 559.6,506.5 563.2,512.5 566.8,518.4 570.6,524.3 574.5,530.1 578.3,536.0 582.2,541.8 586.1,547.7 590.0,553.5 594.0,559.2 597.9,565.0 601.8,570.8 605.6,576.5 609.4,582.1 613.2,587.6 617.0,593.0 621.0,598.3 625.1,603.6 629.4,608.8 634.0,613.9 638.7,619.1 643.2,624.5 647.6,629.9 652.0,635.5 656.2,641.2M529.2,406.4 528.4,413.6 527.6,420.7 526.9,428.0 526.5,435.2 526.2,442.5 526.0,449.7 525.8,457.0 525.9,464.3 526.1,471.5 526.8,478.7 528.5,485.7 531.6,492.0 536.0,497.2 540.6,502.1 544.7,507.8 548.6,513.8 552.5,519.8 556.6,525.7 560.7,531.6 564.8,537.6 568.9,543.5 573.0,549.4 577.2,555.3 581.4,561.2 585.6,567.0 589.8,572.9 594.0,578.6 598.2,584.2 602.5,589.6 606.9,595.0 611.4,600.2 616.1,605.3 620.8,610.4 625.8,615.6 630.7,620.8 635.5,626.2 640.1,631.8 644.5,637.6 648.9,643.4M511.1,405.9 510.5,413.2 509.9,420.6 509.3,428.1 508.9,435.5 508.6,443.0 508.5,450.4 508.3,457.9 508.4,465.4 508.7,472.8 509.6,480.2 511.5,487.3 515.0,493.7 520.0,498.7 525.1,503.6 529.7,509.2 533.9,515.2 538.2,521.3 542.5,527.3 546.9,533.3 551.3,539.3 555.7,545.3 560.0,551.3 564.4,557.3 568.9,563.2 573.4,569.1 577.9,575.0 582.4,580.8 587.1,586.3 591.9,591.7 596.8,596.9 601.9,602.1 607.0,607.1 612.2,612.2 617.6,617.3 622.8,622.5 627.8,628.0 632.5,633.7 637.1,639.6 641.6,645.6M493.1,405.4 492.6,413.1 492.2,420.7 491.7,428.3 491.4,435.9 491.1,443.6 490.9,451.3 490.8,458.9 491.0,466.6 491.4,474.2 492.3,481.8 494.5,489.0 498.4,495.4 503.9,500.4 509.7,505.1 514.8,510.7 519.3,516.8 523.9,522.9 528.5,529.0 533.1,535.0 537.8,541.1 542.4,547.1 547.0,553.2 551.6,559.3 556.3,565.3 561.1,571.3 565.9,577.2 570.8,583.0 576.0,588.5 581.3,593.8 586.8,599.0 592.3,604.0 598.0,608.9 603.6,613.9 609.3,619.0 614.8,624.2 620.1,629.8 625.0,635.6 629.7,641.7 634.3,647.8" fill="none" stroke="#62261e" stroke-width="0.8" stroke-opacity="0.9"/>
<path d="M583.9,537.0 584.0,551.1 570.1,564.1 556.1,563.0 556.0,548.9 569.9,535.9 583.9,537.0M577.6,542.9 577.7,550.6 570.1,557.7 562.4,557.1 562.3,549.4 569.9,542.3 577.6,542.9M583.9,537.0 577.6,542.9M584.0,551.1 577.7,550.6M570.1,564.1 570.1,557.7M556.1,563.0 562.4,557.1M556.0,548.9 562.3,549.4M569.9,535.9 569.9,542.3" fill="none" stroke="#62261e" stroke-width="0.8" stroke-opacity="0.9"/>
<path d="M246.0,624.0 248.0,624.7 250.1,625.5 252.1,626.2 254.2,627.0 256.2,627.7 258.2,628.5 260.3,629.2 262.3,630.0 264.4,630.7 266.4,631.5 268.4,632.2 270.5,633.0 272.5,633.7 274.6,634.5 276.6,635.2 278.7,635.9 280.7,636.7 282.7,637.4 284.8,638.2 286.8,638.9 288.9,639.6 290.9,640.3 293.0,641.0 295.1,641.7 297.1,642.4 299.2,643.1 301.2,643.8 303.3,644.5 305.4,645.2 307.4,645.9 309.5,646.6 311.5,647.3 313.6,647.9 315.7,648.6 317.7,649.3 319.8,650.0 321.9,650.6 323.9,651.3 326.0,652.0 326.0,652.0 325.2,652.9 324.3,653.8 323.5,654.7 322.6,655.5 321.7,656.4 320.9,657.3 320.0,658.2 319.2,659.0 318.4,660.0 317.5,660.9 316.7,661.8 315.9,662.7 315.1,663.6 314.4,664.6 313.6,665.5 312.9,666.6 312.3,667.6 311.7,668.7 311.2,669.8 310.9,671.0 310.6,672.2 310.4,673.4 310.3,674.6 310.2,675.8 310.2,677.0 310.2,678.3 310.2,679.5 310.1,680.7 310.0,681.9 309.8,683.1 309.6,684.3 309.4,685.5 309.2,686.8 309.0,688.0 308.8,689.2 308.6,690.4 308.4,691.6 308.2,692.8 308.0,694.0 308.0,694.0 305.5,695.4 302.9,696.8 300.3,698.1 297.8,699.6 295.3,701.1 292.9,702.7 290.6,704.5 288.6,706.6 286.7,708.8 285.1,711.2 283.5,713.6 281.9,716.0 280.3,718.4 278.5,720.8 276.5,722.9 274.2,724.4 271.4,724.7 269.1,723.0 267.3,720.8 265.6,718.4 264.2,715.9 262.8,713.3 261.3,710.8 259.9,708.3 258.2,705.9 256.5,703.6 254.3,701.7 251.9,700.1 249.1,699.6 246.2,699.4 243.3,699.7 240.5,700.1 237.6,700.8 234.8,701.6 232.1,702.5 229.3,703.3 226.5,704.3 223.8,705.2 221.0,706.0 221.0,706.0 222.0,704.0 223.1,701.9 224.2,699.9 225.2,697.8 226.2,695.7 227.1,693.6 227.8,691.4 228.4,689.2 228.9,687.0 229.2,684.7 229.5,682.4 229.7,680.1 230.0,677.8 230.4,675.6 230.9,673.3 231.7,671.2 232.7,669.1 233.8,667.1 235.0,665.1 236.1,663.1 237.1,661.1 237.8,658.9 237.9,656.6 237.2,654.4 236.0,652.4 234.9,650.4 234.1,648.3 233.9,646.0 234.4,643.8 235.3,641.7 236.3,639.6 237.4,637.6 238.6,635.6 239.8,633.7 241.0,631.7 242.3,629.8 243.5,627.9 244.8,625.9 246.0,624.0Z" fill="#e0746a"/>
<path d="M241.1,631.5 243.3,632.1 245.4,632.7 247.5,633.3 249.7,633.9 251.8,634.5 254.0,635.1 256.1,635.7 258.2,636.3 260.4,636.9 262.5,637.6 264.7,638.3 266.8,639.2 268.8,640.0 270.9,640.9 272.9,641.8 274.9,642.7 276.9,643.6 278.9,644.6 280.9,645.5 283.0,646.4 285.0,647.2 287.1,648.0 289.3,648.7 291.4,649.1 293.4,649.6 295.5,649.9 297.5,650.3 299.6,650.7 301.6,651.1 303.6,651.4 305.7,651.8 307.8,652.2 309.9,652.7 312.0,653.1 314.2,653.6 316.3,654.0 318.4,654.5 320.6,655.0 322.7,655.4M236.5,639.2 238.8,639.6 241.0,640.1 243.2,640.5 245.4,640.9 247.6,641.3 249.9,641.7 252.1,642.2 254.3,642.7 256.6,643.2 258.8,643.8 261.1,644.5 263.2,645.4 265.3,646.4 267.3,647.5 269.3,648.5 271.3,649.6 273.3,650.7 275.2,651.8 277.2,652.8 279.2,653.9 281.2,654.9 283.4,655.8 285.6,656.3 287.8,656.6 289.8,656.7 291.9,656.8 293.9,656.9 295.9,656.9 297.9,657.0 299.9,657.0 302.0,657.1 304.1,657.2 306.2,657.4 308.4,657.6 310.6,657.9 312.8,658.1 315.0,658.4 317.2,658.6 319.4,658.9M234.0,647.6 236.2,647.9 238.5,648.1 240.7,648.3 243.0,648.5 245.3,648.8 247.5,649.0 249.8,649.3 252.1,649.7 254.4,650.1 256.7,650.6 259.0,651.3 261.1,652.2 263.2,653.3 265.2,654.5 267.1,655.7 269.0,656.9 270.8,658.2 272.7,659.4 274.6,660.7 276.5,661.9 278.5,663.0 280.6,664.0 282.9,664.4 285.0,664.3 287.1,664.2 289.0,663.9 291.0,663.7 292.9,663.4 294.8,663.1 296.7,662.8 298.7,662.6 300.8,662.5 302.9,662.4 305.1,662.3 307.3,662.3 309.5,662.3 311.7,662.3 313.9,662.4 316.2,662.4M237.7,655.7 239.8,655.8 242.0,655.8 244.1,655.9 246.2,655.9 248.4,656.0 250.6,656.1 252.7,656.2 254.9,656.5 257.1,656.8 259.3,657.2 261.5,657.9 263.5,658.9 265.4,660.1 267.1,661.4 268.8,662.7 270.4,664.2 272.0,665.6 273.7,667.0 275.3,668.4 277.0,669.8 278.7,671.0 280.7,672.1 282.9,672.4 284.8,672.1 286.7,671.7 288.4,671.1 290.1,670.6 291.8,670.0 293.5,669.4 295.2,668.8 297.0,668.3 298.9,667.8 300.9,667.5 302.9,667.2 304.9,666.9 307.0,666.7 309.1,666.5 311.1,666.3 313.2,666.2M235.5,664.1 237.8,664.0 239.9,663.9 242.1,663.8 244.3,663.7 246.5,663.6 248.8,663.5 251.0,663.5 253.2,663.6 255.5,663.8 257.7,664.2 260.0,664.8 262.0,665.9 263.9,667.2 265.6,668.7 267.2,670.2 268.8,671.8 270.3,673.4 271.8,675.0 273.4,676.5 275.0,678.1 276.7,679.5 278.7,680.6 280.9,680.8 282.9,680.3 284.7,679.6 286.4,678.7 288.1,677.9 289.7,676.9 291.3,676.0 292.9,675.1 294.7,674.3 296.6,673.6 298.5,673.0 300.6,672.5 302.6,672.0 304.7,671.6 306.8,671.2 308.9,670.8 311.0,670.4M231.4,672.0 233.7,671.8 236.1,671.6 238.4,671.3 240.7,671.0 243.1,670.8 245.4,670.6 247.8,670.5 250.2,670.5 252.6,670.6 255.0,670.9 257.4,671.5 259.5,672.7 261.5,674.2 263.2,675.8 264.9,677.5 266.5,679.3 268.0,681.1 269.5,682.9 271.1,684.7 272.8,686.4 274.5,688.0 276.6,689.2 278.9,689.3 281.0,688.7 282.9,687.7 284.7,686.5 286.3,685.3 288.0,684.1 289.6,682.9 291.3,681.7 293.1,680.6 295.0,679.7 297.1,678.8 299.2,678.1 301.4,677.4 303.6,676.8 305.8,676.2 308.1,675.7 310.3,675.1M229.6,680.8 232.1,680.4 234.5,680.0 236.9,679.6 239.4,679.1 241.8,678.7 244.3,678.4 246.8,678.1 249.3,678.0 251.8,678.0 254.3,678.3 256.8,678.9 259.0,680.2 261.0,681.7 262.7,683.5 264.4,685.4 265.9,687.4 267.4,689.3 268.9,691.3 270.4,693.3 272.0,695.1 273.8,696.9 276.0,698.2 278.4,698.2 280.5,697.3 282.5,696.1 284.2,694.6 285.8,693.1 287.4,691.6 289.1,690.1 290.7,688.6 292.5,687.2 294.5,686.0 296.6,684.9 298.8,683.9 301.0,683.0 303.3,682.2 305.6,681.4 307.9,680.7 310.2,679.8M228.3,689.7 230.8,689.2 233.4,688.5 235.8,687.9 238.4,687.3 240.9,686.7 243.4,686.3 246.0,685.8 248.6,685.6 251.2,685.5 253.8,685.7 256.3,686.3 258.5,687.7 260.6,689.3 262.3,691.3 263.9,693.3 265.3,695.5 266.8,697.6 268.2,699.7 269.7,701.9 271.3,703.9 273.0,705.8 275.2,707.2 277.7,707.2 279.9,706.0 281.8,704.5 283.5,702.7 285.1,700.9 286.6,699.1 288.2,697.2 289.8,695.4 291.7,693.8 293.6,692.2 295.7,690.9 298.0,689.7 300.2,688.6 302.5,687.6 304.9,686.6 307.3,685.6 309.6,684.6M225.1,698.0 227.7,697.4 230.4,696.6 233.0,695.8 235.6,695.1 238.2,694.3 240.9,693.7 243.6,693.2 246.3,692.8 249.0,692.6 251.8,692.8 254.4,693.3 256.7,694.8 258.8,696.6 260.5,698.7 262.2,700.9 263.6,703.2 265.0,705.6 266.5,707.9 267.9,710.2 269.5,712.4 271.2,714.5 273.5,716.0 276.1,715.9 278.4,714.5 280.3,712.7 282.0,710.6 283.6,708.5 285.2,706.4 286.8,704.3 288.4,702.2 290.2,700.2 292.2,698.4 294.4,696.9 296.7,695.5 299.1,694.1 301.5,692.9 303.9,691.7 306.4,690.5 308.8,689.3M253.2,626.7 252.1,628.4 250.9,630.2 249.8,632.0 248.6,633.8 247.4,635.6 246.3,637.4 245.2,639.2 244.2,641.1 243.2,642.9 242.5,644.9 242.0,647.0 242.1,649.1 242.8,651.0 243.8,652.9 244.8,654.7 245.4,656.7 245.4,658.8 244.7,660.9 243.8,662.8 242.8,664.7 241.8,666.5 240.8,668.4 240.0,670.3 239.3,672.4 238.8,674.4 238.6,676.6 238.3,678.7 238.1,680.8 237.9,683.0 237.7,685.1 237.3,687.2 236.8,689.2 236.1,691.3 235.3,693.3 234.5,695.2 233.6,697.1 232.7,699.0 231.7,700.9 230.8,702.9M260.5,629.3 259.4,631.0 258.3,632.6 257.3,634.2 256.2,635.9 255.1,637.5 254.1,639.2 253.1,640.9 252.1,642.6 251.2,644.3 250.5,646.1 250.0,648.0 250.1,649.9 250.7,651.7 251.6,653.4 252.5,655.2 253.1,657.0 253.0,659.0 252.4,660.8 251.6,662.6 250.7,664.4 249.8,666.1 249.0,667.9 248.3,669.7 247.7,671.6 247.4,673.5 247.2,675.5 247.0,677.5 246.9,679.5 246.8,681.5 246.6,683.5 246.3,685.4 245.9,687.4 245.3,689.3 244.6,691.1 243.9,692.9 243.1,694.7 242.3,696.5 241.5,698.3 240.7,700.1M267.7,632.0 266.7,633.5 265.8,635.1 264.8,636.7 263.8,638.2 262.8,639.8 261.9,641.4 261.0,643.0 260.1,644.6 259.3,646.2 258.6,648.0 258.2,649.7 258.2,651.6 258.8,653.3 259.5,654.9 260.3,656.6 260.8,658.3 260.7,660.2 260.2,662.0 259.6,663.7 258.8,665.4 258.0,667.1 257.3,668.8 256.8,670.5 256.3,672.4 256.1,674.2 256.0,676.1 255.9,678.1 255.9,680.0 255.8,681.9 255.7,683.8 255.5,685.7 255.1,687.5 254.7,689.4 254.1,691.1 253.5,692.9 252.9,694.6 252.2,696.4 251.6,698.1 250.9,699.8M274.9,634.6 274.0,636.3 273.1,637.9 272.1,639.6 271.2,641.2 270.2,642.9 269.3,644.6 268.4,646.3 267.5,648.0 266.7,649.7 266.1,651.5 265.6,653.4 265.6,655.3 265.9,657.1 266.5,658.8 267.1,660.5 267.5,662.4 267.4,664.3 266.9,666.2 266.2,668.1 265.5,669.9 264.8,671.7 264.2,673.5 263.7,675.4 263.3,677.3 263.2,679.3 263.1,681.3 263.0,683.3 263.0,685.3 262.9,687.3 262.8,689.3 262.6,691.3 262.3,693.2 261.9,695.2 261.4,697.1 260.9,698.9 260.3,700.8 259.7,702.6 259.1,704.5 258.5,706.3M282.2,637.2 281.2,639.1 280.3,640.9 279.3,642.7 278.3,644.5 277.3,646.3 276.4,648.1 275.4,650.0 274.5,651.8 273.7,653.7 272.9,655.7 272.4,657.7 272.2,659.7 272.3,661.6 272.7,663.5 273.1,665.4 273.2,667.4 273.0,669.5 272.4,671.5 271.8,673.5 271.1,675.5 270.4,677.5 269.8,679.5 269.3,681.6 268.9,683.7 268.7,685.8 268.6,687.9 268.5,690.1 268.4,692.3 268.3,694.4 268.1,696.6 267.9,698.7 267.6,700.8 267.2,702.9 266.7,705.0 266.1,707.1 265.6,709.1 265.0,711.1 264.4,713.1 263.8,715.2M289.5,639.8 288.5,641.8 287.5,643.7 286.5,645.7 285.5,647.7 284.5,649.6 283.5,651.6 282.5,653.6 281.6,655.6 280.7,657.6 279.9,659.7 279.3,661.8 279.0,663.9 278.9,666.0 279.1,668.0 279.2,670.1 279.2,672.2 278.8,674.4 278.3,676.6 277.6,678.8 276.9,680.9 276.3,683.1 275.7,685.3 275.2,687.5 274.9,689.7 274.6,692.0 274.5,694.3 274.4,696.6 274.3,698.9 274.1,701.2 273.9,703.5 273.6,705.8 273.3,708.1 272.9,710.3 272.4,712.6 271.9,714.8 271.3,717.0 270.8,719.2 270.2,721.3 269.6,723.5M296.7,642.3 295.8,644.2 294.9,646.0 293.9,647.8 293.0,649.7 292.0,651.5 291.1,653.3 290.2,655.2 289.3,657.1 288.4,659.0 287.7,660.9 287.0,662.8 286.6,664.8 286.5,666.8 286.4,668.7 286.4,670.6 286.3,672.6 285.9,674.6 285.3,676.7 284.7,678.8 284.1,680.8 283.6,682.8 283.1,684.9 282.7,687.0 282.5,689.2 282.3,691.3 282.2,693.5 282.2,695.7 282.1,697.9 281.9,700.0 281.8,702.2 281.5,704.4 281.2,706.5 280.9,708.6 280.5,710.8 280.1,712.8 279.6,714.9 279.1,717.0 278.7,719.1 278.2,721.2M304.0,644.8 303.1,646.3 302.1,647.9 301.2,649.4 300.2,651.0 299.2,652.5 298.3,654.1 297.4,655.7 296.4,657.2 295.5,658.8 294.7,660.5 294.0,662.1 293.4,663.8 293.1,665.5 292.8,667.1 292.6,668.7 292.3,670.4 291.8,672.2 291.2,673.9 290.6,675.7 290.0,677.5 289.5,679.3 289.0,681.1 288.7,682.9 288.4,684.8 288.3,686.7 288.1,688.6 288.1,690.5 287.9,692.4 287.8,694.3 287.5,696.2 287.3,698.0 287.0,699.9 286.6,701.8 286.2,703.6 285.8,705.4 285.4,707.3 284.9,709.1 284.5,710.9 284.1,712.7M311.4,647.2 310.4,648.5 309.4,649.8 308.5,651.1 307.5,652.3 306.5,653.6 305.6,654.9 304.6,656.2 303.7,657.5 302.8,658.8 301.9,660.2 301.1,661.5 300.4,662.9 299.9,664.3 299.4,665.6 299.0,667.0 298.5,668.4 297.9,669.9 297.3,671.4 296.7,672.9 296.1,674.4 295.7,676.0 295.3,677.5 294.9,679.1 294.7,680.7 294.6,682.3 294.4,684.0 294.3,685.6 294.2,687.2 294.0,688.8 293.7,690.4 293.5,692.1 293.1,693.7 292.8,695.2 292.4,696.8 292.0,698.4 291.7,700.0 291.2,701.6 290.8,703.1 290.4,704.7M318.7,649.6 317.8,650.7 316.9,651.8 315.9,652.8 315.0,653.9 314.1,655.0 313.2,656.0 312.3,657.1 311.4,658.2 310.5,659.3 309.7,660.4 308.8,661.5 308.1,662.7 307.4,663.8 306.8,664.9 306.2,666.1 305.6,667.3 305.0,668.5 304.4,669.8 303.8,671.1 303.4,672.5 303.0,673.8 302.7,675.2 302.5,676.6 302.3,678.0 302.2,679.4 302.2,680.8 302.1,682.2 302.0,683.7 301.8,685.1 301.6,686.5 301.3,687.9 301.1,689.3 300.8,690.7 300.5,692.0 300.2,693.4 299.9,694.8 299.6,696.2 299.3,697.5 299.0,698.9" fill="none" stroke="#62261e" stroke-width="0.8" stroke-opacity="0.9"/>
<path d="M270.4,656.0 267.9,660.9 262.0,663.0 256.1,660.9 253.6,656.0 256.1,651.1 262.0,649.0 267.9,651.1 270.4,656.0M277.6,656.0 273.0,665.2 262.0,669.0 251.0,665.2 246.4,656.0 251.0,646.8 262.0,643.0 273.0,646.8 277.6,656.0" fill="none" stroke="#62261e" stroke-width="0.8" stroke-opacity="0.9"/>
<path d="M708.0,624.0 706.0,624.7 703.9,625.5 701.9,626.2 699.8,627.0 697.8,627.7 695.8,628.5 693.7,629.2 691.7,630.0 689.6,630.7 687.6,631.5 685.6,632.2 683.5,633.0 681.5,633.7 679.4,634.5 677.4,635.2 675.3,635.9 673.3,636.7 671.3,637.4 669.2,638.2 667.2,638.9 665.1,639.6 663.1,640.3 661.0,641.0 658.9,641.7 656.9,642.4 654.8,643.1 652.8,643.8 650.7,644.5 648.6,645.2 646.6,645.9 644.5,646.6 642.5,647.3 640.4,647.9 638.3,648.6 636.3,649.3 634.2,650.0 632.1,650.6 630.1,651.3 628.0,652.0 628.0,652.0 628.8,652.9 629.7,653.8 630.5,654.7 631.4,655.5 632.3,656.4 633.1,657.3 634.0,658.2 634.8,659.0 635.6,660.0 636.5,660.9 637.3,661.8 638.1,662.7 638.9,663.6 639.6,664.6 640.4,665.5 641.1,666.6 641.7,667.6 642.3,668.7 642.8,669.8 643.1,671.0 643.4,672.2 643.6,673.4 643.7,674.6 643.8,675.8 643.8,677.0 643.8,678.3 643.8,679.5 643.9,680.7 644.0,681.9 644.2,683.1 644.4,684.3 644.6,685.5 644.8,686.8 645.0,688.0 645.2,689.2 645.4,690.4 645.6,691.6 645.8,692.8 646.0,694.0 646.0,694.0 648.5,695.4 651.1,696.8 653.7,698.1 656.2,699.6 658.7,701.1 661.1,702.7 663.4,704.5 665.4,706.6 667.3,708.8 668.9,711.2 670.5,713.6 672.1,716.0 673.7,718.4 675.5,720.8 677.5,722.9 679.8,724.4 682.6,724.7 684.9,723.0 686.7,720.8 688.4,718.4 689.8,715.9 691.2,713.3 692.7,710.8 694.1,708.3 695.8,705.9 697.5,703.6 699.7,701.7 702.1,700.1 704.9,699.6 707.8,699.4 710.7,699.7 713.5,700.1 716.4,700.8 719.2,701.6 721.9,702.5 724.7,703.3 727.5,704.3 730.2,705.2 733.0,706.0 733.0,706.0 732.0,704.0 730.9,701.9 729.8,699.9 728.8,697.8 727.8,695.7 726.9,693.6 726.2,691.4 725.6,689.2 725.1,687.0 724.8,684.7 724.5,682.4 724.3,680.1 724.0,677.8 723.6,675.6 723.1,673.3 722.3,671.2 721.3,669.1 720.2,667.1 719.0,665.1 717.9,663.1 716.9,661.1 716.2,658.9 716.1,656.6 716.8,654.4 718.0,652.4 719.1,650.4 719.9,648.3 720.1,646.0 719.6,643.8 718.7,641.7 717.7,639.6 716.6,637.6 715.4,635.6 714.2,633.7 713.0,631.7 711.7,629.8 710.5,627.9 709.2,625.9 708.0,624.0Z" fill="#e0746a"/>
<path d="M712.9,631.5 710.7,632.1 708.6,632.7 706.5,633.3 704.3,633.9 702.2,634.5 700.0,635.1 697.9,635.7 695.8,636.3 693.6,636.9 691.5,637.6 689.3,638.3 687.2,639.2 685.2,640.0 683.1,640.9 681.1,641.8 679.1,642.7 677.1,643.6 675.1,644.6 673.1,645.5 671.0,646.4 669.0,647.2 666.9,648.0 664.7,648.7 662.6,649.1 660.6,649.6 658.5,649.9 656.5,650.3 654.4,650.7 652.4,651.1 650.4,651.4 648.3,651.8 646.2,652.2 644.1,652.7 642.0,653.1 639.8,653.6 637.7,654.0 635.6,654.5 633.4,655.0 631.3,655.4M717.5,639.2 715.2,639.6 713.0,640.1 710.8,640.5 708.6,640.9 706.4,641.3 704.1,641.7 701.9,642.2 699.7,642.7 697.4,643.2 695.2,643.8 692.9,644.5 690.8,645.4 688.7,646.4 686.7,647.5 684.7,648.5 682.7,649.6 680.7,650.7 678.8,651.8 676.8,652.8 674.8,653.9 672.8,654.9 670.6,655.8 668.4,656.3 666.2,656.6 664.2,656.7 662.1,656.8 660.1,656.9 658.1,656.9 656.1,657.0 654.1,657.0 652.0,657.1 649.9,657.2 647.8,657.4 645.6,657.6 643.4,657.9 641.2,658.1 639.0,658.4 636.8,658.6 634.6,658.9M720.0,647.6 717.8,647.9 715.5,648.1 713.3,648.3 711.0,648.5 708.7,648.8 706.5,649.0 704.2,649.3 701.9,649.7 699.6,650.1 697.3,650.6 695.0,651.3 692.9,652.2 690.8,653.3 688.8,654.5 686.9,655.7 685.0,656.9 683.2,658.2 681.3,659.4 679.4,660.7 677.5,661.9 675.5,663.0 673.4,664.0 671.1,664.4 669.0,664.3 666.9,664.2 665.0,663.9 663.0,663.7 661.1,663.4 659.2,663.1 657.3,662.8 655.3,662.6 653.2,662.5 651.1,662.4 648.9,662.3 646.7,662.3 644.5,662.3 642.3,662.3 640.1,662.4 637.8,662.4M716.3,655.7 714.2,655.8 712.0,655.8 709.9,655.9 707.8,655.9 705.6,656.0 703.4,656.1 701.3,656.2 699.1,656.5 696.9,656.8 694.7,657.2 692.5,657.9 690.5,658.9 688.6,660.1 686.9,661.4 685.2,662.7 683.6,664.2 682.0,665.6 680.3,667.0 678.7,668.4 677.0,669.8 675.3,671.0 673.3,672.1 671.1,672.4 669.2,672.1 667.3,671.7 665.6,671.1 663.9,670.6 662.2,670.0 660.5,669.4 658.8,668.8 657.0,668.3 655.1,667.8 653.1,667.5 651.1,667.2 649.1,666.9 647.0,666.7 644.9,666.5 642.9,666.3 640.8,666.2M718.5,664.1 716.2,664.0 714.1,663.9 711.9,663.8 709.7,663.7 707.5,663.6 705.2,663.5 703.0,663.5 700.8,663.6 698.5,663.8 696.3,664.2 694.0,664.8 692.0,665.9 690.1,667.2 688.4,668.7 686.8,670.2 685.2,671.8 683.7,673.4 682.2,675.0 680.6,676.5 679.0,678.1 677.3,679.5 675.3,680.6 673.1,680.8 671.1,680.3 669.3,679.6 667.6,678.7 665.9,677.9 664.3,676.9 662.7,676.0 661.1,675.1 659.3,674.3 657.4,673.6 655.5,673.0 653.4,672.5 651.4,672.0 649.3,671.6 647.2,671.2 645.1,670.8 643.0,670.4M722.6,672.0 720.3,671.8 717.9,671.6 715.6,671.3 713.3,671.0 710.9,670.8 708.6,670.6 706.2,670.5 703.8,670.5 701.4,670.6 699.0,670.9 696.6,671.5 694.5,672.7 692.5,674.2 690.8,675.8 689.1,677.5 687.5,679.3 686.0,681.1 684.5,682.9 682.9,684.7 681.2,686.4 679.5,688.0 677.4,689.2 675.1,689.3 673.0,688.7 671.1,687.7 669.3,686.5 667.7,685.3 666.0,684.1 664.4,682.9 662.7,681.7 660.9,680.6 659.0,679.7 656.9,678.8 654.8,678.1 652.6,677.4 650.4,676.8 648.2,676.2 645.9,675.7 643.7,675.1M724.4,680.8 721.9,680.4 719.5,680.0 717.1,679.6 714.6,679.1 712.2,678.7 709.7,678.4 707.2,678.1 704.7,678.0 702.2,678.0 699.7,678.3 697.2,678.9 695.0,680.2 693.0,681.7 691.3,683.5 689.6,685.4 688.1,687.4 686.6,689.3 685.1,691.3 683.6,693.3 682.0,695.1 680.2,696.9 678.0,698.2 675.6,698.2 673.5,697.3 671.5,696.1 669.8,694.6 668.2,693.1 666.6,691.6 664.9,690.1 663.3,688.6 661.5,687.2 659.5,686.0 657.4,684.9 655.2,683.9 653.0,683.0 650.7,682.2 648.4,681.4 646.1,680.7 643.8,679.8M725.7,689.7 723.2,689.2 720.6,688.5 718.2,687.9 715.6,687.3 713.1,686.7 710.6,686.3 708.0,685.8 705.4,685.6 702.8,685.5 700.2,685.7 697.7,686.3 695.5,687.7 693.4,689.3 691.7,691.3 690.1,693.3 688.7,695.5 687.2,697.6 685.8,699.7 684.3,701.9 682.7,703.9 681.0,705.8 678.8,707.2 676.3,707.2 674.1,706.0 672.2,704.5 670.5,702.7 668.9,700.9 667.4,699.1 665.8,697.2 664.2,695.4 662.3,693.8 660.4,692.2 658.3,690.9 656.0,689.7 653.8,688.6 651.5,687.6 649.1,686.6 646.7,685.6 644.4,684.6M728.9,698.0 726.3,697.4 723.6,696.6 721.0,695.8 718.4,695.1 715.8,694.3 713.1,693.7 710.4,693.2 707.7,692.8 705.0,692.6 702.2,692.8 699.6,693.3 697.3,694.8 695.2,696.6 693.5,698.7 691.8,700.9 690.4,703.2 689.0,705.6 687.5,707.9 686.1,710.2 684.5,712.4 682.8,714.5 680.5,716.0 677.9,715.9 675.6,714.5 673.7,712.7 672.0,710.6 670.4,708.5 668.8,706.4 667.2,704.3 665.6,702.2 663.8,700.2 661.8,698.4 659.6,696.9 657.3,695.5 654.9,694.1 652.5,692.9 650.1,691.7 647.6,690.5 645.2,689.3M700.8,626.7 701.9,628.4 703.1,630.2 704.2,632.0 705.4,633.8 706.6,635.6 707.7,637.4 708.8,639.2 709.8,641.1 710.8,642.9 711.5,644.9 712.0,647.0 711.9,649.1 711.2,651.0 710.2,652.9 709.2,654.7 708.6,656.7 708.6,658.8 709.3,660.9 710.2,662.8 711.2,664.7 712.2,666.5 713.2,668.4 714.0,670.3 714.7,672.4 715.2,674.4 715.4,676.6 715.7,678.7 715.9,680.8 716.1,683.0 716.3,685.1 716.7,687.2 717.2,689.2 717.9,691.3 718.7,693.3 719.5,695.2 720.4,697.1 721.3,699.0 722.3,700.9 723.2,702.9M693.5,629.3 694.6,631.0 695.7,632.6 696.7,634.2 697.8,635.9 698.9,637.5 699.9,639.2 700.9,640.9 701.9,642.6 702.8,644.3 703.5,646.1 704.0,648.0 703.9,649.9 703.3,651.7 702.4,653.4 701.5,655.2 700.9,657.0 701.0,659.0 701.6,660.8 702.4,662.6 703.3,664.4 704.2,666.1 705.0,667.9 705.7,669.7 706.3,671.6 706.6,673.5 706.8,675.5 707.0,677.5 707.1,679.5 707.2,681.5 707.4,683.5 707.7,685.4 708.1,687.4 708.7,689.3 709.4,691.1 710.1,692.9 710.9,694.7 711.7,696.5 712.5,698.3 713.3,700.1M686.3,632.0 687.3,633.5 688.2,635.1 689.2,636.7 690.2,638.2 691.2,639.8 692.1,641.4 693.0,643.0 693.9,644.6 694.7,646.2 695.4,648.0 695.8,649.7 695.8,651.6 695.2,653.3 694.5,654.9 693.7,656.6 693.2,658.3 693.3,660.2 693.8,662.0 694.4,663.7 695.2,665.4 696.0,667.1 696.7,668.8 697.2,670.5 697.7,672.4 697.9,674.2 698.0,676.1 698.1,678.1 698.1,680.0 698.2,681.9 698.3,683.8 698.5,685.7 698.9,687.5 699.3,689.4 699.9,691.1 700.5,692.9 701.1,694.6 701.8,696.4 702.4,698.1 703.1,699.8M679.1,634.6 680.0,636.3 680.9,637.9 681.9,639.6 682.8,641.2 683.8,642.9 684.7,644.6 685.6,646.3 686.5,648.0 687.3,649.7 687.9,651.5 688.4,653.4 688.4,655.3 688.1,657.1 687.5,658.8 686.9,660.5 686.5,662.4 686.6,664.3 687.1,666.2 687.8,668.1 688.5,669.9 689.2,671.7 689.8,673.5 690.3,675.4 690.7,677.3 690.8,679.3 690.9,681.3 691.0,683.3 691.0,685.3 691.1,687.3 691.2,689.3 691.4,691.3 691.7,693.2 692.1,695.2 692.6,697.1 693.1,698.9 693.7,700.8 694.3,702.6 694.9,704.5 695.5,706.3M671.8,637.2 672.8,639.1 673.7,640.9 674.7,642.7 675.7,644.5 676.7,646.3 677.6,648.1 678.6,650.0 679.5,651.8 680.3,653.7 681.1,655.7 681.6,657.7 681.8,659.7 681.7,661.6 681.3,663.5 680.9,665.4 680.8,667.4 681.0,669.5 681.6,671.5 682.2,673.5 682.9,675.5 683.6,677.5 684.2,679.5 684.7,681.6 685.1,683.7 685.3,685.8 685.4,687.9 685.5,690.1 685.6,692.3 685.7,694.4 685.9,696.6 686.1,698.7 686.4,700.8 686.8,702.9 687.3,705.0 687.9,707.1 688.4,709.1 689.0,711.1 689.6,713.1 690.2,715.2M664.5,639.8 665.5,641.8 666.5,643.7 667.5,645.7 668.5,647.7 669.5,649.6 670.5,651.6 671.5,653.6 672.4,655.6 673.3,657.6 674.1,659.7 674.7,661.8 675.0,663.9 675.1,666.0 674.9,668.0 674.8,670.1 674.8,672.2 675.2,674.4 675.7,676.6 676.4,678.8 677.1,680.9 677.7,683.1 678.3,685.3 678.8,687.5 679.1,689.7 679.4,692.0 679.5,694.3 679.6,696.6 679.7,698.9 679.9,701.2 680.1,703.5 680.4,705.8 680.7,708.1 681.1,710.3 681.6,712.6 682.1,714.8 682.7,717.0 683.2,719.2 683.8,721.3 684.4,723.5M657.3,642.3 658.2,644.2 659.1,646.0 660.1,647.8 661.0,649.7 662.0,651.5 662.9,653.3 663.8,655.2 664.7,657.1 665.6,659.0 666.3,660.9 667.0,662.8 667.4,664.8 667.5,666.8 667.6,668.7 667.6,670.6 667.7,672.6 668.1,674.6 668.7,676.7 669.3,678.8 669.9,680.8 670.4,682.8 670.9,684.9 671.3,687.0 671.5,689.2 671.7,691.3 671.8,693.5 671.8,695.7 671.9,697.9 672.1,700.0 672.2,702.2 672.5,704.4 672.8,706.5 673.1,708.6 673.5,710.8 673.9,712.8 674.4,714.9 674.9,717.0 675.3,719.1 675.8,721.2M650.0,644.8 650.9,646.3 651.9,647.9 652.8,649.4 653.8,651.0 654.8,652.5 655.7,654.1 656.6,655.7 657.6,657.2 658.5,658.8 659.3,660.5 660.0,662.1 660.6,663.8 660.9,665.5 661.2,667.1 661.4,668.7 661.7,670.4 662.2,672.2 662.8,673.9 663.4,675.7 664.0,677.5 664.5,679.3 665.0,681.1 665.3,682.9 665.6,684.8 665.7,686.7 665.9,688.6 665.9,690.5 666.1,692.4 666.2,694.3 666.5,696.2 666.7,698.0 667.0,699.9 667.4,701.8 667.8,703.6 668.2,705.4 668.6,707.3 669.1,709.1 669.5,710.9 669.9,712.7M642.6,647.2 643.6,648.5 644.6,649.8 645.5,651.1 646.5,652.3 647.5,653.6 648.4,654.9 649.4,656.2 650.3,657.5 651.2,658.8 652.1,660.2 652.9,661.5 653.6,662.9 654.1,664.3 654.6,665.6 655.0,667.0 655.5,668.4 656.1,669.9 656.7,671.4 657.3,672.9 657.9,674.4 658.3,676.0 658.7,677.5 659.1,679.1 659.3,680.7 659.4,682.3 659.6,684.0 659.7,685.6 659.8,687.2 660.0,688.8 660.3,690.4 660.5,692.1 660.9,693.7 661.2,695.2 661.6,696.8 662.0,698.4 662.3,700.0 662.8,701.6 663.2,703.1 663.6,704.7M635.3,649.6 636.2,650.7 637.1,651.8 638.1,652.8 639.0,653.9 639.9,655.0 640.8,656.0 641.7,657.1 642.6,658.2 643.5,659.3 644.3,660.4 645.2,661.5 645.9,662.7 646.6,663.8 647.2,664.9 647.8,666.1 648.4,667.3 649.0,668.5 649.6,669.8 650.2,671.1 650.6,672.5 651.0,673.8 651.3,675.2 651.5,676.6 651.7,678.0 651.8,679.4 651.8,680.8 651.9,682.2 652.0,683.7 652.2,685.1 652.4,686.5 652.7,687.9 652.9,689.3 653.2,690.7 653.5,692.0 653.8,693.4 654.1,694.8 654.4,696.2 654.7,697.5 655.0,698.9" fill="none" stroke="#62261e" stroke-width="0.8" stroke-opacity="0.9"/>
<path d="M698.4,656.0 695.9,660.9 690.0,663.0 684.1,660.9 681.6,656.0 684.1,651.1 690.0,649.0 695.9,651.1 698.4,656.0M705.6,656.0 701.0,665.2 690.0,669.0 679.0,665.2 674.4,656.0 679.0,646.8 690.0,643.0 701.0,646.8 705.6,656.0" fill="none" stroke="#62261e" stroke-width="0.8" stroke-opacity="0.9"/>
<path d="M408.8,137.1 409.5,137.4 410.3,137.8 411.0,138.1 411.8,138.4 412.5,138.7 413.2,139.1 414.0,139.4 414.7,139.7 415.5,140.0 416.2,140.4 417.0,140.7 417.7,141.0 418.4,141.3 419.2,141.6 419.9,142.0 420.7,142.3 421.4,142.6 422.2,142.9 422.9,143.3 423.6,143.6 424.4,143.9 425.1,144.2 425.9,144.6 426.6,144.9 427.4,145.2 428.1,145.5 428.8,145.9 429.6,146.2 430.3,146.5 431.1,146.8 431.8,147.2 432.6,147.5 433.3,147.8 434.0,148.1 434.8,148.5 435.5,148.8 436.3,149.1 437.0,149.4 437.8,149.8M410.8,151.1 411.5,151.3 412.2,151.6 412.9,151.8 413.6,152.0 414.3,152.3 415.1,152.5 415.8,152.8 416.5,153.0 417.2,153.2 417.9,153.5 418.6,153.7 419.3,154.0 420.0,154.2 420.7,154.5 421.4,154.7 422.2,154.9 422.9,155.2 423.6,155.4 424.3,155.7 425.0,155.9 425.7,156.1 426.4,156.4 427.1,156.6 427.8,156.9 428.6,157.1 429.3,157.4 430.0,157.6 430.7,157.8 431.4,158.1 432.1,158.3 432.8,158.6 433.5,158.8 434.2,159.0 434.9,159.3 435.7,159.5 436.4,159.8 437.1,160.0 437.8,160.3 438.5,160.5M416.9,163.8 417.5,164.0 418.1,164.2 418.6,164.3 419.2,164.5 419.8,164.7 420.4,164.9 420.9,165.1 421.5,165.3 422.1,165.5 422.7,165.7 423.2,165.9 423.8,166.1 424.4,166.3 424.9,166.5 425.5,166.6 426.1,166.8 426.7,167.0 427.2,167.2 427.8,167.4 428.4,167.6 428.9,167.8 429.5,168.0 430.1,168.2 430.7,168.4 431.2,168.6 431.8,168.8 432.4,168.9 433.0,169.1 433.5,169.3 434.1,169.5 434.7,169.7 435.2,169.9 435.8,170.1 436.4,170.3 437.0,170.5 437.5,170.7 438.1,170.9 438.7,171.1 439.2,171.2M417.7,128.3 417.8,129.7 417.8,131.0 417.9,132.3 418.0,133.7 418.1,135.0 418.1,136.3 418.2,137.7 418.3,139.0 418.4,140.3 418.5,141.7 418.6,143.0 418.7,144.3 418.8,145.6 418.9,147.0 419.0,148.3 419.2,149.6 419.4,150.9 419.6,152.3 419.9,153.6 420.2,154.9 420.5,156.1 420.9,157.4 421.4,158.6 421.8,159.9 422.3,161.1 422.8,162.3 423.3,163.5 423.8,164.7 424.2,166.0 424.7,167.2 425.2,168.4 425.7,169.6 426.2,170.8 426.7,172.0 427.3,173.2 427.8,174.4 428.3,175.6 428.8,176.8 429.3,178.0M427.3,133.7 427.4,134.9 427.5,136.1 427.6,137.3 427.6,138.5 427.7,139.8 427.8,141.0 427.9,142.2 428.0,143.4 428.0,144.6 428.1,145.8 428.2,147.1 428.3,148.3 428.4,149.5 428.5,150.7 428.6,151.9 428.7,153.1 428.8,154.3 429.0,155.6 429.2,156.8 429.4,158.0 429.6,159.1 429.8,160.3 430.1,161.5 430.3,162.7 430.6,163.8 430.9,165.0 431.2,166.1 431.5,167.3 431.7,168.5 432.0,169.6 432.3,170.8 432.6,171.9 432.9,173.1 433.2,174.2 433.5,175.4 433.8,176.5 434.1,177.7 434.4,178.8 434.7,180.0" fill="none" stroke="#62261e" stroke-width="0.8" stroke-opacity="0.9"/>
<path d="M543.2,131.1 542.4,131.4 541.6,131.8 540.8,132.1 540.0,132.5 539.2,132.8 538.3,133.2 537.5,133.5 536.7,133.8 535.9,134.2 535.1,134.5 534.3,134.9 533.5,135.2 532.7,135.6 531.8,135.9 531.0,136.2 530.2,136.6 529.4,136.9 528.6,137.3 527.8,137.6 527.0,138.0 526.1,138.3 525.3,138.7 524.5,139.0 523.7,139.3 522.9,139.7 522.1,140.0 521.3,140.4 520.4,140.7 519.6,141.1 518.8,141.4 518.0,141.7 517.2,142.1 516.4,142.4 515.6,142.8 514.8,143.1 513.9,143.5 513.1,143.8 512.3,144.2 511.5,144.5M542.6,147.6 541.8,147.8 541.0,148.1 540.2,148.3 539.4,148.6 538.6,148.8 537.8,149.0 537.0,149.3 536.2,149.5 535.3,149.8 534.5,150.0 533.7,150.2 532.9,150.5 532.1,150.7 531.3,151.0 530.5,151.2 529.7,151.5 528.9,151.7 528.0,151.9 527.2,152.2 526.4,152.4 525.6,152.7 524.8,152.9 524.0,153.1 523.2,153.4 522.4,153.6 521.5,153.9 520.7,154.1 519.9,154.3 519.1,154.6 518.3,154.8 517.5,155.1 516.7,155.3 515.9,155.6 515.1,155.8 514.2,156.0 513.4,156.3 512.6,156.5 511.8,156.8 511.0,157.0M535.6,162.5 534.9,162.6 534.3,162.8 533.6,163.0 533.0,163.2 532.3,163.4 531.7,163.5 531.1,163.7 530.4,163.9 529.8,164.1 529.1,164.3 528.5,164.4 527.8,164.6 527.2,164.8 526.6,165.0 525.9,165.2 525.3,165.3 524.6,165.5 524.0,165.7 523.3,165.9 522.7,166.1 522.1,166.3 521.4,166.4 520.8,166.6 520.1,166.8 519.5,167.0 518.9,167.2 518.2,167.3 517.6,167.5 516.9,167.7 516.3,167.9 515.6,168.1 515.0,168.2 514.4,168.4 513.7,168.6 513.1,168.8 512.4,169.0 511.8,169.1 511.1,169.3 510.5,169.5M531.7,120.4 531.8,122.0 531.9,123.5 532.0,125.1 532.1,126.6 532.2,128.2 532.3,129.7 532.4,131.3 532.5,132.8 532.6,134.4 532.7,135.9 532.7,137.5 532.8,139.1 532.8,140.6 532.8,142.2 532.7,143.7 532.6,145.3 532.5,146.9 532.4,148.4 532.2,150.0 532.0,151.5 531.6,153.0 531.2,154.5 530.8,156.0 530.3,157.4 529.8,158.9 529.2,160.3 528.6,161.7 528.0,163.1 527.4,164.5 526.7,165.8 526.1,167.2 525.4,168.6 524.7,169.9 524.0,171.3 523.4,172.6 522.7,173.9 522.0,175.3 521.3,176.6 520.7,178.0M521.9,126.2 521.9,127.6 521.9,129.0 521.9,130.5 522.0,131.9 522.0,133.3 522.0,134.7 522.0,136.1 522.1,137.5 522.1,139.0 522.1,140.4 522.1,141.8 522.1,143.2 522.1,144.6 522.0,146.1 522.0,147.5 521.9,148.9 521.8,150.3 521.7,151.7 521.6,153.2 521.5,154.6 521.3,156.0 521.1,157.4 520.8,158.7 520.5,160.1 520.2,161.5 519.9,162.8 519.6,164.2 519.3,165.5 518.9,166.8 518.6,168.1 518.2,169.5 517.9,170.8 517.5,172.1 517.1,173.4 516.8,174.7 516.4,176.1 516.1,177.4 515.7,178.7 515.3,180.0" fill="none" stroke="#62261e" stroke-width="0.8" stroke-opacity="0.9"/>
<path d="M513.5,166.0 513.4,169.9 512.9,173.8 512.2,177.6 511.2,181.4 509.9,185.0 508.3,188.5 506.5,191.8 504.5,194.9 502.2,197.8 499.7,200.5 497.1,202.9 494.2,205.0 491.3,206.8 488.2,208.3 485.0,209.5 481.7,210.3 478.4,210.8 475.0,211.0 471.6,210.8 468.3,210.3 465.0,209.5 461.8,208.3 458.7,206.8 455.8,205.0 452.9,202.9 450.3,200.5 447.8,197.8 445.5,194.9 443.5,191.8 441.7,188.5 440.1,185.0 438.8,181.4 437.8,177.6 437.1,173.8 436.6,169.9 436.5,166.0 436.6,144.0 436.9,132.2 437.3,122.6 438.0,114.3 438.8,107.0 439.8,100.5 441.0,94.6 442.4,89.4 444.0,84.7 445.8,80.5 447.8,76.8 450.0,73.7 452.5,71.0 455.3,68.9 458.5,67.2 462.1,66.0 466.6,65.2 475.0,65.0 483.4,65.2 487.9,66.0 491.5,67.2 494.7,68.9 497.5,71.0 500.0,73.7 502.2,76.8 504.2,80.5 506.0,84.7 507.6,89.4 509.0,94.6 510.2,100.5 511.2,107.0 512.0,114.3 512.7,122.6 513.1,132.2 513.4,144.0 513.5,166.0Z" fill="#e0746a"/>
<path d="M485.5,166.0 485.5,166.9 485.3,167.8 485.1,168.7 484.9,169.5 484.5,170.4 484.1,171.2 483.6,171.9 483.0,172.6 482.4,173.3 481.7,173.9 481.0,174.5 480.2,174.9 479.4,175.4 478.6,175.7 477.7,176.0 476.8,176.2 475.9,176.3 475.0,176.3 474.1,176.3 473.2,176.2 472.3,176.0 471.4,175.7 470.6,175.4 469.8,174.9 469.0,174.5 468.3,173.9 467.6,173.3 467.0,172.6 466.4,171.9 465.9,171.2 465.5,170.4 465.1,169.5 464.9,168.7 464.7,167.8 464.5,166.9 464.5,166.0 464.5,164.0 464.6,162.3 464.8,160.6 465.1,159.0 465.4,157.4 465.8,156.0 466.3,154.6 466.8,153.3 467.4,152.1 468.1,151.0 468.8,150.1 469.5,149.2 470.3,148.5 471.2,147.9 472.0,147.4 473.0,147.1 473.9,146.8 475.0,146.8 476.1,146.8 477.0,147.1 478.0,147.4 478.8,147.9 479.7,148.5 480.5,149.2 481.2,150.1 481.9,151.0 482.6,152.1 483.2,153.3 483.7,154.6 484.2,156.0 484.6,157.4 484.9,159.0 485.2,160.6 485.4,162.3 485.5,164.0 485.5,166.0M489.0,166.0 488.9,167.3 488.8,168.5 488.5,169.8 488.2,171.0 487.7,172.2 487.1,173.3 486.5,174.4 485.7,175.4 484.9,176.4 484.0,177.2 483.0,178.0 482.0,178.7 480.9,179.3 479.8,179.8 478.6,180.2 477.4,180.4 476.2,180.6 475.0,180.7 473.8,180.6 472.6,180.4 471.4,180.2 470.2,179.8 469.1,179.3 468.0,178.7 467.0,178.0 466.0,177.2 465.1,176.4 464.3,175.4 463.5,174.4 462.9,173.3 462.3,172.2 461.8,171.0 461.5,169.8 461.2,168.5 461.1,167.3 461.0,166.0 461.0,162.6 461.2,159.7 461.4,157.1 461.7,154.6 462.2,152.2 462.7,150.0 463.3,148.0 463.9,146.1 464.7,144.3 465.5,142.7 466.4,141.3 467.4,140.1 468.5,139.0 469.6,138.1 470.8,137.4 472.0,137.0 473.4,136.7 475.0,136.6 476.6,136.7 478.0,137.0 479.2,137.4 480.4,138.1 481.5,139.0 482.6,140.1 483.6,141.3 484.5,142.7 485.3,144.3 486.1,146.1 486.7,148.0 487.3,150.0 487.8,152.2 488.3,154.6 488.6,157.1 488.8,159.7 489.0,162.6 489.0,166.0M492.5,166.0 492.4,167.7 492.2,169.3 491.9,170.9 491.4,172.5 490.9,174.0 490.2,175.5 489.3,176.9 488.4,178.2 487.4,179.4 486.2,180.6 485.0,181.6 483.8,182.5 482.4,183.2 481.0,183.9 479.5,184.4 478.0,184.7 476.5,184.9 475.0,185.0 473.5,184.9 472.0,184.7 470.5,184.4 469.0,183.9 467.6,183.2 466.2,182.5 465.0,181.6 463.8,180.6 462.6,179.4 461.6,178.2 460.7,176.9 459.8,175.5 459.1,174.0 458.6,172.5 458.1,170.9 457.8,169.3 457.6,167.7 457.5,166.0 457.6,160.8 457.7,156.8 458.0,153.1 458.4,149.8 458.9,146.6 459.5,143.7 460.2,141.0 461.0,138.6 461.9,136.3 462.9,134.2 464.0,132.4 465.2,130.8 466.5,129.5 467.8,128.3 469.3,127.5 470.9,126.8 472.7,126.5 475.0,126.3 477.3,126.5 479.1,126.8 480.7,127.5 482.2,128.3 483.5,129.5 484.8,130.8 486.0,132.4 487.1,134.2 488.1,136.3 489.0,138.6 489.8,141.0 490.5,143.7 491.1,146.6 491.6,149.8 492.0,153.1 492.3,156.8 492.4,160.8 492.5,166.0M496.0,166.0 495.9,168.0 495.7,170.1 495.3,172.0 494.7,174.0 494.0,175.9 493.2,177.7 492.2,179.4 491.1,181.0 489.8,182.5 488.5,183.9 487.0,185.1 485.5,186.2 483.9,187.1 482.2,187.9 480.4,188.5 478.6,189.0 476.8,189.2 475.0,189.3 473.2,189.2 471.4,189.0 469.6,188.5 467.8,187.9 466.1,187.1 464.5,186.2 463.0,185.1 461.5,183.9 460.2,182.5 458.9,181.0 457.8,179.4 456.8,177.7 456.0,175.9 455.3,174.0 454.7,172.0 454.3,170.1 454.1,168.0 454.0,166.0 454.1,158.7 454.3,153.5 454.6,148.8 455.0,144.6 455.6,140.7 456.3,137.1 457.1,133.8 458.0,130.8 459.0,128.1 460.2,125.6 461.5,123.4 462.9,121.5 464.4,119.8 466.0,118.5 467.8,117.5 469.7,116.7 471.9,116.3 475.0,116.1 478.1,116.3 480.3,116.7 482.2,117.5 484.0,118.5 485.6,119.8 487.1,121.5 488.5,123.4 489.8,125.6 491.0,128.1 492.0,130.8 492.9,133.8 493.7,137.1 494.4,140.7 495.0,144.6 495.4,148.8 495.7,153.5 495.9,158.7 496.0,166.0M499.5,166.0 499.4,168.4 499.1,170.8 498.7,173.2 498.0,175.5 497.2,177.7 496.2,179.8 495.1,181.9 493.8,183.8 492.3,185.6 490.7,187.2 489.1,188.7 487.2,190.0 485.4,191.1 483.4,192.0 481.3,192.7 479.3,193.2 477.1,193.6 475.0,193.7 472.9,193.6 470.7,193.2 468.7,192.7 466.6,192.0 464.6,191.1 462.8,190.0 460.9,188.7 459.3,187.2 457.7,185.6 456.2,183.8 454.9,181.9 453.8,179.8 452.8,177.7 452.0,175.5 451.3,173.2 450.9,170.8 450.6,168.4 450.5,166.0 450.6,156.4 450.8,149.8 451.1,144.2 451.6,139.1 452.2,134.5 453.0,130.3 453.9,126.4 454.9,122.8 456.1,119.6 457.4,116.8 458.9,114.2 460.4,112.0 462.2,110.2 464.0,108.6 466.1,107.4 468.4,106.6 471.1,106.1 475.0,105.9 478.9,106.1 481.6,106.6 483.9,107.4 486.0,108.6 487.8,110.2 489.6,112.0 491.1,114.2 492.6,116.8 493.9,119.6 495.1,122.8 496.1,126.4 497.0,130.3 497.8,134.5 498.4,139.1 498.9,144.2 499.2,149.8 499.4,156.4 499.5,166.0M503.0,166.0 502.9,168.8 502.6,171.6 502.0,174.3 501.3,176.9 500.4,179.5 499.2,182.0 497.9,184.4 496.4,186.6 494.8,188.6 493.0,190.5 491.1,192.2 489.0,193.7 486.8,195.0 484.6,196.1 482.2,196.9 479.9,197.5 477.4,197.9 475.0,198.0 472.6,197.9 470.1,197.5 467.8,196.9 465.4,196.1 463.2,195.0 461.0,193.7 458.9,192.2 457.0,190.5 455.2,188.6 453.6,186.6 452.1,184.4 450.8,182.0 449.6,179.5 448.7,176.9 448.0,174.3 447.4,171.6 447.1,168.8 447.0,166.0 447.1,153.7 447.3,145.9 447.7,139.2 448.2,133.3 448.9,128.0 449.7,123.1 450.7,118.7 451.9,114.7 453.1,111.1 454.6,107.9 456.2,105.0 457.9,102.5 459.9,100.4 462.0,98.7 464.3,97.4 467.0,96.4 470.1,95.9 475.0,95.7 479.9,95.9 483.0,96.4 485.7,97.4 488.0,98.7 490.1,100.4 492.1,102.5 493.8,105.0 495.4,107.9 496.9,111.1 498.1,114.7 499.3,118.7 500.3,123.1 501.1,128.0 501.8,133.3 502.3,139.2 502.7,145.9 502.9,153.7 503.0,166.0M506.5,166.0 506.4,169.2 506.0,172.3 505.4,175.4 504.6,178.4 503.5,181.4 502.3,184.2 500.8,186.8 499.1,189.4 497.3,191.7 495.2,193.8 493.1,195.8 490.8,197.5 488.3,198.9 485.8,200.1 483.2,201.1 480.5,201.8 477.7,202.2 475.0,202.3 472.3,202.2 469.5,201.8 466.8,201.1 464.2,200.1 461.7,198.9 459.2,197.5 456.9,195.8 454.8,193.8 452.7,191.7 450.9,189.4 449.2,186.8 447.7,184.2 446.5,181.4 445.4,178.4 444.6,175.4 444.0,172.3 443.6,169.2 443.5,166.0 443.6,150.7 443.8,141.6 444.2,133.9 444.8,127.2 445.5,121.2 446.4,115.8 447.5,110.9 448.7,106.4 450.1,102.4 451.7,98.8 453.4,95.7 455.4,93.0 457.5,90.7 459.8,88.8 462.5,87.3 465.5,86.3 469.0,85.7 475.0,85.4 481.0,85.7 484.5,86.3 487.5,87.3 490.2,88.8 492.5,90.7 494.6,93.0 496.6,95.7 498.3,98.8 499.9,102.4 501.3,106.4 502.5,110.9 503.6,115.8 504.5,121.2 505.2,127.2 505.8,133.9 506.2,141.6 506.4,150.7 506.5,166.0M510.0,166.0 509.9,169.5 509.5,173.1 508.8,176.5 507.9,179.9 506.7,183.2 505.3,186.3 503.7,189.3 501.8,192.1 499.7,194.8 497.5,197.2 495.1,199.3 492.5,201.2 489.8,202.9 487.0,204.2 484.1,205.3 481.1,206.0 478.1,206.5 475.0,206.7 471.9,206.5 468.9,206.0 465.9,205.3 463.0,204.2 460.2,202.9 457.5,201.2 454.9,199.3 452.5,197.2 450.3,194.8 448.2,192.1 446.3,189.3 444.7,186.3 443.3,183.2 442.1,179.9 441.2,176.5 440.5,173.1 440.1,169.5 440.0,166.0 440.1,147.5 440.3,137.0 440.8,128.4 441.4,120.9 442.2,114.2 443.1,108.2 444.3,102.8 445.6,98.0 447.1,93.6 448.8,89.7 450.6,86.3 452.7,83.4 455.0,80.9 457.6,78.8 460.5,77.3 463.8,76.1 467.9,75.4 475.0,75.2 482.1,75.4 486.2,76.1 489.5,77.3 492.4,78.8 495.0,80.9 497.3,83.4 499.4,86.3 501.2,89.7 502.9,93.6 504.4,98.0 505.7,102.8 506.9,108.2 507.8,114.2 508.6,120.9 509.2,128.4 509.7,137.0 509.9,147.5 510.0,166.0M513.5,166.0 513.4,169.9 512.9,173.8 512.2,177.6 511.2,181.4 509.9,185.0 508.3,188.5 506.5,191.8 504.5,194.9 502.2,197.8 499.7,200.5 497.1,202.9 494.2,205.0 491.3,206.8 488.2,208.3 485.0,209.5 481.7,210.3 478.4,210.8 475.0,211.0 471.6,210.8 468.3,210.3 465.0,209.5 461.8,208.3 458.7,206.8 455.8,205.0 452.9,202.9 450.3,200.5 447.8,197.8 445.5,194.9 443.5,191.8 441.7,188.5 440.1,185.0 438.8,181.4 437.8,177.6 437.1,173.8 436.6,169.9 436.5,166.0 436.6,144.0 436.9,132.2 437.3,122.6 438.0,114.3 438.8,107.0 439.8,100.5 441.0,94.6 442.4,89.4 444.0,84.7 445.8,80.5 447.8,76.8 450.0,73.7 452.5,71.0 455.3,68.9 458.5,67.2 462.1,66.0 466.6,65.2 475.0,65.0 483.4,65.2 487.9,66.0 491.5,67.2 494.7,68.9 497.5,71.0 500.0,73.7 502.2,76.8 504.2,80.5 506.0,84.7 507.6,89.4 509.0,94.6 510.2,100.5 511.2,107.0 512.0,114.3 512.7,122.6 513.1,132.2 513.4,144.0 513.5,166.0M482.9,167.4 484.9,167.9 486.9,168.4 488.9,168.9 490.9,169.4 492.9,169.9 494.8,170.4 496.8,170.9 498.8,171.3 500.8,171.8 502.8,172.3 504.8,172.8 506.8,173.3 508.8,173.8 510.8,174.3 512.8,174.8M481.7,170.1 483.4,171.5 485.1,172.8 486.8,174.2 488.4,175.6 490.1,177.0 491.8,178.4 493.5,179.8 495.2,181.2 496.9,182.6 498.6,184.0 500.3,185.4 501.9,186.8 503.6,188.2 505.3,189.6 507.0,191.0M479.5,172.1 480.6,174.2 481.7,176.2 482.9,178.3 484.0,180.4 485.1,182.5 486.2,184.6 487.4,186.7 488.5,188.8 489.6,190.9 490.8,193.0 491.9,195.1 493.0,197.1 494.1,199.2 495.3,201.3 496.4,203.4M476.6,173.2 477.0,175.6 477.4,178.1 477.8,180.6 478.2,183.0 478.6,185.5 478.9,187.9 479.3,190.4 479.7,192.9 480.1,195.3 480.5,197.8 480.9,200.3 481.3,202.7 481.7,205.2 482.1,207.7 482.5,210.1M473.4,173.2 473.0,175.6 472.6,178.1 472.2,180.6 471.8,183.0 471.4,185.5 471.1,187.9 470.7,190.4 470.3,192.9 469.9,195.3 469.5,197.8 469.1,200.3 468.7,202.7 468.3,205.2 467.9,207.7 467.5,210.1M470.5,172.1 469.4,174.2 468.3,176.2 467.1,178.3 466.0,180.4 464.9,182.5 463.8,184.6 462.6,186.7 461.5,188.8 460.4,190.9 459.2,193.0 458.1,195.1 457.0,197.1 455.9,199.2 454.7,201.3 453.6,203.4M468.3,170.1 466.6,171.5 464.9,172.8 463.2,174.2 461.6,175.6 459.9,177.0 458.2,178.4 456.5,179.8 454.8,181.2 453.1,182.6 451.4,184.0 449.7,185.4 448.1,186.8 446.4,188.2 444.7,189.6 443.0,191.0M467.1,167.4 465.1,167.9 463.1,168.4 461.1,168.9 459.1,169.4 457.1,169.9 455.2,170.4 453.2,170.9 451.2,171.3 449.2,171.8 447.2,172.3 445.2,172.8 443.2,173.3 441.2,173.8 439.2,174.3 437.2,174.8M467.1,163.6 465.1,162.2 463.1,160.6 461.1,158.9 459.1,157.1 457.1,155.2 455.1,153.1 453.1,150.9 451.1,148.6 449.1,146.2 447.0,143.7 445.0,141.1 443.0,138.3 441.0,135.5 439.0,132.6 437.0,129.6M468.3,159.2 466.5,155.7 464.8,152.0 463.0,148.2 461.2,144.3 459.4,140.3 457.5,136.2 455.7,132.0 453.9,127.8 452.0,123.4 450.1,119.0 448.3,114.5 446.4,110.0 444.5,105.4 442.6,100.8 440.7,96.1M470.5,155.9 469.2,150.9 467.9,145.8 466.6,140.6 465.2,135.4 463.8,130.2 462.3,124.9 460.9,119.6 459.4,114.2 457.9,108.8 456.3,103.4 454.8,98.0 453.2,92.5 451.6,87.0 450.0,81.5 448.3,76.0M473.4,154.2 472.8,148.3 472.3,142.5 471.6,136.7 471.0,130.8 470.3,125.0 469.5,119.1 468.7,113.2 467.9,107.4 467.0,101.5 466.1,95.6 465.2,89.7 464.2,83.9 463.2,78.0 462.2,72.1 461.1,66.2M476.6,154.2 477.2,148.3 477.7,142.5 478.4,136.7 479.0,130.8 479.7,125.0 480.5,119.1 481.3,113.2 482.1,107.4 483.0,101.5 483.9,95.6 484.8,89.7 485.8,83.9 486.8,78.0 487.8,72.1 488.9,66.2M479.5,155.9 480.8,150.9 482.1,145.8 483.4,140.6 484.8,135.4 486.2,130.2 487.7,124.9 489.1,119.6 490.6,114.2 492.1,108.8 493.7,103.4 495.2,98.0 496.8,92.5 498.4,87.0 500.0,81.5 501.7,76.0M481.7,159.2 483.5,155.7 485.2,152.0 487.0,148.2 488.8,144.3 490.6,140.3 492.5,136.2 494.3,132.0 496.1,127.8 498.0,123.4 499.9,119.0 501.7,114.5 503.6,110.0 505.5,105.4 507.4,100.8 509.3,96.1M482.9,163.6 484.9,162.2 486.9,160.6 488.9,158.9 490.9,157.1 492.9,155.2 494.9,153.1 496.9,150.9 498.9,148.6 500.9,146.2 503.0,143.7 505.0,141.1 507.0,138.3 509.0,135.5 511.0,132.6 513.0,129.6" fill="none" stroke="#62261e" stroke-width="0.8" stroke-opacity="0.9"/>
<path d="M471.6,287.5 466.2,299.6 451.8,307.2 434.2,307.2 419.8,299.6 414.4,287.5 419.8,275.4 434.2,267.8 451.8,267.8 466.2,275.4 471.6,287.5Z" fill="#e0746a"/>
<path d="M447.9,287.5 446.9,289.6 444.5,290.8 441.5,290.8 439.1,289.6 438.1,287.5 439.1,285.4 441.5,284.2 444.5,284.2 446.9,285.4 447.9,287.5M451.6,287.5 450.0,291.2 445.7,293.4 440.3,293.4 436.0,291.2 434.4,287.5 436.0,283.8 440.3,281.6 445.7,281.6 450.0,283.8 451.6,287.5M456.0,287.5 453.5,293.0 447.0,296.4 439.0,296.4 432.5,293.0 430.0,287.5 432.5,282.0 439.0,278.6 447.0,278.6 453.5,282.0 456.0,287.5M460.8,287.5 457.4,295.1 448.5,299.7 437.5,299.7 428.6,295.1 425.2,287.5 428.6,279.9 437.5,275.3 448.5,275.3 457.4,279.9 460.8,287.5M466.2,287.5 461.8,297.4 450.2,303.4 435.8,303.4 424.2,297.4 419.8,287.5 424.2,277.6 435.8,271.6 450.2,271.6 461.8,277.6 466.2,287.5M471.6,287.5 466.2,299.6 451.8,307.2 434.2,307.2 419.8,299.6 414.4,287.5 419.8,275.4 434.2,267.8 451.8,267.8 466.2,275.4 471.6,287.5M476.5,287.5 470.1,301.7 453.3,310.5 432.7,310.5 415.9,301.7 409.5,287.5 415.9,273.3 432.7,264.5 453.3,264.5 470.1,273.3 476.5,287.5M447.9,287.5 476.5,287.5M446.9,289.6 470.1,301.7M444.5,290.8 453.3,310.5M441.5,290.8 432.7,310.5M439.1,289.6 415.9,301.7M438.1,287.5 409.5,287.5M439.1,285.4 415.9,273.3M441.5,284.2 432.7,264.5M444.5,284.2 453.3,264.5M446.9,285.4 470.1,273.3" fill="none" stroke="#62261e" stroke-width="0.8" stroke-opacity="0.9"/>
<path d="M533.6,287.0 528.2,299.1 513.8,306.7 496.2,306.7 481.8,299.1 476.4,287.0 481.8,274.9 496.2,267.3 513.8,267.3 528.2,274.9 533.6,287.0Z" fill="#e0746a"/>
<path d="M509.9,287.0 508.9,289.1 506.5,290.3 503.5,290.3 501.1,289.1 500.1,287.0 501.1,284.9 503.5,283.7 506.5,283.7 508.9,284.9 509.9,287.0M513.6,287.0 512.0,290.7 507.7,292.9 502.3,292.9 498.0,290.7 496.4,287.0 498.0,283.3 502.3,281.1 507.7,281.1 512.0,283.3 513.6,287.0M518.0,287.0 515.5,292.5 509.0,295.9 501.0,295.9 494.5,292.5 492.0,287.0 494.5,281.5 501.0,278.1 509.0,278.1 515.5,281.5 518.0,287.0M522.8,287.0 519.4,294.6 510.5,299.2 499.5,299.2 490.6,294.6 487.2,287.0 490.6,279.4 499.5,274.8 510.5,274.8 519.4,279.4 522.8,287.0M528.2,287.0 523.8,296.9 512.2,302.9 497.8,302.9 486.2,296.9 481.8,287.0 486.2,277.1 497.8,271.1 512.2,271.1 523.8,277.1 528.2,287.0M533.6,287.0 528.2,299.1 513.8,306.7 496.2,306.7 481.8,299.1 476.4,287.0 481.8,274.9 496.2,267.3 513.8,267.3 528.2,274.9 533.6,287.0M538.5,287.0 532.1,301.2 515.3,310.0 494.7,310.0 477.9,301.2 471.5,287.0 477.9,272.8 494.7,264.0 515.3,264.0 532.1,272.8 538.5,287.0M509.9,287.0 538.5,287.0M508.9,289.1 532.1,301.2M506.5,290.3 515.3,310.0M503.5,290.3 494.7,310.0M501.1,289.1 477.9,301.2M500.1,287.0 471.5,287.0M501.1,284.9 477.9,272.8M503.5,283.7 494.7,264.0M506.5,283.7 515.3,264.0M508.9,284.9 532.1,272.8" fill="none" stroke="#62261e" stroke-width="0.8" stroke-opacity="0.9"/>
<path d="M487.1,380.7 480.0,390.2 470.0,390.2 462.9,380.7 462.9,367.3 470.0,357.8 480.0,357.8 487.1,367.3 487.1,380.7Z" fill="#e0746a"/>
<path d="M476.9,375.1 475.8,376.6 474.2,376.6 473.1,375.1 473.1,372.9 474.2,371.4 475.8,371.4 476.9,372.9 476.9,375.1M479.4,376.4 476.8,379.8 473.2,379.8 470.6,376.4 470.6,371.6 473.2,368.2 476.8,368.2 479.4,371.6 479.4,376.4M482.8,378.3 478.2,384.3 471.8,384.3 467.2,378.3 467.2,369.7 471.8,363.7 478.2,363.7 482.8,369.7 482.8,378.3M487.1,380.7 480.0,390.2 470.0,390.2 462.9,380.7 462.9,367.3 470.0,357.8 480.0,357.8 487.1,367.3 487.1,380.7M476.9,375.1 487.1,380.7M475.8,376.6 480.0,390.2M474.2,376.6 470.0,390.2M473.1,375.1 462.9,380.7M473.1,372.9 462.9,367.3M474.2,371.4 470.0,357.8M475.8,371.4 480.0,357.8M476.9,372.9 487.1,367.3" fill="none" stroke="#62261e" stroke-width="0.8" stroke-opacity="0.9"/>
<path d="M519.6,178.4 518.3,182.7 516.8,186.9 514.8,191.0 512.6,194.8 510.0,198.4 507.2,201.7 504.0,204.8 500.7,207.5 497.1,209.9 493.3,211.9 489.4,213.5 485.4,214.7 481.3,215.5 477.1,215.9 472.9,215.9 468.7,215.5 464.6,214.7 460.6,213.5 456.7,211.9 452.9,209.9 449.3,207.5 446.0,204.8 442.8,201.7 440.0,198.4 437.4,194.8 435.2,191.0 433.2,186.9 431.7,182.7 430.4,178.4" fill="none" stroke="#62261e" stroke-width="0.8" stroke-opacity="0.9"/>
<path d="M529.3,180.8 527.8,186.1 525.9,191.1 523.5,196.0 520.8,200.6 517.6,204.9 514.2,208.9 510.4,212.5 506.3,215.8 501.9,218.6 497.3,221.0 492.6,223.0 487.6,224.5 482.6,225.4 477.5,225.9 472.5,225.9 467.4,225.4 462.4,224.5 457.4,223.0 452.7,221.0 448.1,218.6 443.7,215.8 439.6,212.5 435.8,208.9 432.4,204.9 429.2,200.6 426.5,196.0 424.1,191.1 422.2,186.1 420.7,180.8" fill="none" stroke="#62261e" stroke-width="0.8" stroke-opacity="0.9"/>
<path d="M212.7,97.2 214.3,97.4 215.9,97.6 217.5,97.7 219.1,97.9 220.7,98.0 222.3,98.2 223.9,98.4 225.5,98.6 227.1,98.7 228.7,98.9 230.3,99.2 231.9,99.4 233.4,99.6 235.0,99.9 236.6,100.3 238.2,100.6 239.8,101.0 241.3,101.5 242.9,102.1 244.3,102.7 245.6,103.7 246.9,104.7 247.9,106.0 248.8,107.4 249.5,108.8 250.1,110.3 250.7,111.8 251.2,113.3 251.7,114.9 252.2,116.4 252.7,117.9 253.4,119.4 254.3,120.8 255.2,122.1 256.2,123.4 257.3,124.6 258.5,125.7 259.7,126.9 260.8,128.0M211.4,100.3 213.0,100.6 214.6,100.9 216.1,101.1 217.7,101.4 219.2,101.6 220.8,101.9 222.4,102.1 223.9,102.4 225.5,102.7 227.0,102.9 228.6,103.2 230.2,103.5 231.7,103.9 233.3,104.2 234.8,104.6 236.4,105.0 238.0,105.4 239.5,106.0 241.0,106.6 242.5,107.2 243.8,108.2 245.1,109.2 246.1,110.5 247.0,111.8 247.8,113.2 248.5,114.6 249.1,116.1 249.7,117.6 250.2,119.1 250.8,120.6 251.4,122.0 252.2,123.5 253.0,124.8 254.0,126.1 255.1,127.4 256.2,128.6 257.3,129.7 258.5,130.9 259.7,132.0M210.2,103.5 211.7,103.8 213.2,104.2 214.7,104.5 216.2,104.9 217.8,105.2 219.3,105.5 220.8,105.9 222.3,106.2 223.9,106.6 225.4,106.9 226.9,107.3 228.4,107.7 230.0,108.1 231.5,108.5 233.0,109.0 234.6,109.4 236.1,109.9 237.6,110.5 239.1,111.1 240.6,111.8 241.9,112.7 243.2,113.7 244.3,114.9 245.3,116.2 246.1,117.5 246.9,118.9 247.5,120.4 248.2,121.8 248.8,123.3 249.4,124.7 250.1,126.1 250.9,127.6 251.8,128.9 252.8,130.2 253.9,131.4 255.0,132.6 256.2,133.7 257.4,134.9 258.5,136.0M208.8,106.6 210.3,107.1 211.8,107.5 213.3,107.9 214.8,108.4 216.3,108.8 217.8,109.2 219.3,109.6 220.7,110.0 222.2,110.5 223.7,110.9 225.2,111.4 226.7,111.8 228.2,112.3 229.7,112.8 231.2,113.3 232.7,113.8 234.3,114.3 235.8,115.0 237.3,115.6 238.7,116.3 240.1,117.2 241.4,118.2 242.5,119.4 243.5,120.6 244.4,121.9 245.2,123.3 246.0,124.6 246.7,126.0 247.4,127.4 248.1,128.9 248.8,130.3 249.6,131.6 250.6,132.9 251.6,134.2 252.7,135.4 253.8,136.6 255.0,137.8 256.2,138.9 257.4,140.0M207.5,109.8 208.9,110.3 210.4,110.8 211.8,111.3 213.3,111.8 214.8,112.3 216.2,112.8 217.7,113.3 219.1,113.8 220.6,114.3 222.0,114.9 223.5,115.4 225.0,115.9 226.4,116.5 227.9,117.0 229.4,117.6 230.9,118.2 232.4,118.8 233.9,119.4 235.4,120.1 236.8,120.8 238.2,121.7 239.5,122.7 240.6,123.8 241.7,125.0 242.7,126.3 243.5,127.6 244.4,128.9 245.1,130.3 245.9,131.6 246.7,133.0 247.5,134.4 248.3,135.7 249.3,137.0 250.4,138.2 251.5,139.4 252.6,140.6 253.8,141.8 255.0,142.9 256.2,144.0M206.1,112.9 207.5,113.5 208.9,114.1 210.3,114.7 211.8,115.3 213.2,115.8 214.6,116.4 216.0,117.0 217.4,117.6 218.9,118.2 220.3,118.8 221.7,119.4 223.2,120.0 224.6,120.7 226.1,121.3 227.5,121.9 229.0,122.6 230.5,123.2 232.0,123.9 233.4,124.6 234.9,125.3 236.3,126.2 237.6,127.2 238.8,128.3 239.9,129.4 240.9,130.6 241.9,131.9 242.8,133.2 243.6,134.5 244.4,135.8 245.3,137.2 246.1,138.5 247.1,139.8 248.1,141.1 249.2,142.3 250.3,143.5 251.5,144.6 252.7,145.8 253.9,146.9 255.1,148.0M204.6,115.9 206.0,116.6 207.4,117.3 208.7,118.0 210.1,118.7 211.5,119.3 212.9,120.0 214.3,120.7 215.7,121.4 217.1,122.0 218.5,122.7 219.9,123.4 221.3,124.1 222.7,124.8 224.2,125.5 225.6,126.2 227.1,126.9 228.5,127.6 230.0,128.3 231.5,129.0 232.9,129.8 234.3,130.7 235.7,131.6 236.9,132.7 238.1,133.8 239.1,134.9 240.2,136.2 241.1,137.4 242.0,138.7 242.9,140.0 243.8,141.3 244.8,142.6 245.7,143.9 246.8,145.1 247.9,146.3 249.1,147.5 250.3,148.6 251.5,149.8 252.7,150.9 253.9,152.0M203.0,119.0 204.4,119.7 205.7,120.5 207.1,121.3 208.5,122.0 209.8,122.8 211.2,123.6 212.6,124.3 213.9,125.1 215.3,125.9 216.7,126.6 218.1,127.4 219.4,128.2 220.8,128.9 222.2,129.7 223.6,130.5 225.1,131.2 226.5,132.0 228.0,132.7 229.5,133.5 230.9,134.3 232.3,135.2 233.7,136.1 235.0,137.1 236.2,138.1 237.4,139.3 238.4,140.4 239.5,141.7 240.4,142.9 241.4,144.2 242.4,145.4 243.4,146.7 244.4,147.9 245.5,149.1 246.7,150.3 247.9,151.5 249.1,152.6 250.3,153.8 251.5,154.9 252.8,156.0M201.4,122.0 202.8,122.8 204.1,123.7 205.4,124.6 206.8,125.4 208.1,126.3 209.4,127.1 210.8,128.0 212.1,128.8 213.5,129.7 214.8,130.5 216.2,131.4 217.5,132.2 218.9,133.1 220.3,133.9 221.7,134.7 223.1,135.5 224.5,136.3 226.0,137.1 227.5,137.9 228.9,138.7 230.4,139.6 231.8,140.5 233.1,141.5 234.4,142.5 235.5,143.6 236.7,144.7 237.8,145.9 238.9,147.1 239.9,148.3 241.0,149.5 242.0,150.8 243.1,152.0 244.3,153.2 245.4,154.4 246.6,155.5 247.9,156.6 249.1,157.8 250.4,158.9 251.6,160.0M199.8,125.0 201.2,125.9 202.5,126.9 203.8,127.8 205.1,128.8 206.4,129.7 207.7,130.7 209.0,131.6 210.3,132.5 211.6,133.5 212.9,134.4 214.3,135.3 215.6,136.3 217.0,137.2 218.3,138.1 219.7,139.0 221.1,139.9 222.5,140.7 224.0,141.6 225.4,142.4 226.9,143.2 228.4,144.0 229.8,144.9 231.2,145.9 232.5,146.9 233.7,147.9 235.0,149.0 236.1,150.1 237.3,151.3 238.4,152.5 239.5,153.7 240.6,154.9 241.8,156.0 243.0,157.2 244.2,158.4 245.4,159.5 246.7,160.6 247.9,161.8 249.2,162.9 250.5,164.0M198.2,128.0 199.5,129.0 200.8,130.1 202.1,131.1 203.3,132.1 204.6,133.2 205.9,134.2 207.2,135.2 208.5,136.2 209.8,137.3 211.1,138.3 212.4,139.3 213.7,140.3 215.0,141.3 216.4,142.3 217.7,143.3 219.1,144.2 220.5,145.1 222.0,146.0 223.4,146.8 224.9,147.6 226.4,148.5 227.8,149.4 229.2,150.3 230.6,151.2 231.9,152.2 233.2,153.3 234.4,154.4 235.7,155.5 236.9,156.6 238.1,157.8 239.3,158.9 240.5,160.1 241.7,161.2 242.9,162.4 244.2,163.5 245.5,164.7 246.7,165.8 248.0,166.9 249.3,168.0M196.6,131.0 197.9,132.1 199.1,133.2 200.4,134.4 201.6,135.5 202.9,136.6 204.1,137.7 205.4,138.8 206.6,139.9 207.9,141.0 209.2,142.2 210.5,143.2 211.8,144.3 213.0,145.4 214.4,146.5 215.7,147.5 217.1,148.5 218.5,149.4 219.9,150.4 221.4,151.2 222.9,152.1 224.4,152.9 225.8,153.8 227.3,154.7 228.7,155.6 230.1,156.5 231.5,157.5 232.8,158.6 234.1,159.7 235.3,160.8 236.6,161.9 237.9,163.0 239.1,164.2 240.4,165.3 241.7,166.4 243.0,167.5 244.3,168.7 245.6,169.8 246.9,170.9 248.2,172.0M219.8,94.4 219.3,95.5 218.8,96.7 218.4,97.8 217.9,99.0 217.4,100.1 217.0,101.3 216.5,102.4 216.0,103.6 215.6,104.7 215.1,105.9 214.6,107.0 214.1,108.2 213.6,109.3 213.1,110.4 212.6,111.6 212.1,112.7 211.6,113.9 211.1,115.0 210.6,116.1 210.0,117.2 209.5,118.4 209.0,119.5 208.4,120.6 207.8,121.7 207.3,122.8 206.7,123.9 206.2,125.0 205.6,126.1 205.0,127.2 204.5,128.3 203.9,129.4 203.3,130.6 202.8,131.7 202.2,132.8 201.6,133.9 201.1,135.0 200.5,136.1 199.9,137.2 199.3,138.3M225.6,94.7 225.0,95.9 224.5,97.2 224.0,98.4 223.5,99.7 223.0,100.9 222.5,102.2 222.0,103.4 221.5,104.7 221.0,105.9 220.4,107.2 219.9,108.4 219.4,109.7 218.9,110.9 218.3,112.1 217.8,113.4 217.2,114.6 216.7,115.9 216.1,117.1 215.6,118.3 215.0,119.5 214.4,120.8 213.9,122.0 213.3,123.2 212.7,124.4 212.1,125.6 211.5,126.8 210.9,128.1 210.3,129.3 209.7,130.5 209.1,131.7 208.5,132.9 207.9,134.1 207.3,135.3 206.7,136.5 206.1,137.7 205.5,138.9 204.9,140.1 204.3,141.4 203.7,142.6M231.3,95.1 230.8,96.4 230.2,97.7 229.7,99.1 229.1,100.4 228.6,101.8 228.0,103.1 227.5,104.5 226.9,105.8 226.4,107.2 225.8,108.5 225.2,109.9 224.7,111.2 224.1,112.5 223.5,113.9 223.0,115.2 222.4,116.5 221.8,117.9 221.2,119.2 220.6,120.5 220.0,121.9 219.4,123.2 218.8,124.5 218.2,125.8 217.6,127.1 216.9,128.4 216.3,129.8 215.7,131.1 215.1,132.4 214.4,133.7 213.8,135.0 213.2,136.3 212.5,137.6 211.9,138.9 211.3,140.2 210.6,141.5 210.0,142.8 209.4,144.2 208.7,145.5 208.1,146.8M237.1,95.7 236.5,97.1 235.9,98.6 235.3,100.0 234.7,101.4 234.1,102.9 233.6,104.3 233.0,105.7 232.4,107.1 231.8,108.6 231.2,110.0 230.6,111.4 230.0,112.9 229.4,114.3 228.8,115.7 228.2,117.1 227.6,118.6 227.0,120.0 226.3,121.4 225.7,122.8 225.1,124.2 224.4,125.6 223.8,127.0 223.1,128.4 222.5,129.8 221.8,131.3 221.2,132.7 220.5,134.1 219.9,135.5 219.2,136.9 218.6,138.3 217.9,139.7 217.3,141.1 216.6,142.5 215.9,143.8 215.3,145.2 214.6,146.6 214.0,148.0 213.3,149.4 212.6,150.8M242.7,96.9 242.1,98.4 241.5,99.9 240.9,101.3 240.3,102.8 239.7,104.3 239.1,105.8 238.4,107.3 237.8,108.8 237.2,110.3 236.6,111.8 236.0,113.3 235.4,114.8 234.7,116.3 234.1,117.8 233.5,119.2 232.8,120.7 232.2,122.2 231.6,123.7 230.9,125.2 230.2,126.6 229.6,128.1 228.9,129.6 228.3,131.1 227.6,132.5 226.9,134.0 226.3,135.5 225.6,136.9 224.9,138.4 224.3,139.9 223.6,141.3 222.9,142.8 222.2,144.3 221.6,145.7 220.9,147.2 220.2,148.7 219.5,150.1 218.9,151.6 218.2,153.0 217.5,154.5M247.8,99.5 247.2,101.0 246.6,102.5 246.0,104.0 245.4,105.5 244.7,107.0 244.1,108.5 243.5,110.0 242.9,111.5 242.3,113.0 241.7,114.5 241.0,116.0 240.4,117.5 239.8,119.0 239.2,120.5 238.5,122.0 237.9,123.5 237.3,125.0 236.6,126.5 236.0,128.0 235.3,129.5 234.7,130.9 234.0,132.4 233.4,133.9 232.7,135.4 232.1,136.9 231.4,138.4 230.7,139.8 230.1,141.3 229.4,142.8 228.8,144.3 228.1,145.8 227.4,147.2 226.8,148.7 226.1,150.2 225.4,151.7 224.8,153.2 224.1,154.6 223.4,156.1 222.8,157.6M251.1,104.2 250.5,105.6 249.9,107.1 249.4,108.5 248.8,110.0 248.2,111.5 247.7,112.9 247.1,114.4 246.5,115.8 246.0,117.3 245.4,118.7 244.8,120.2 244.2,121.7 243.7,123.1 243.1,124.6 242.5,126.0 241.9,127.5 241.3,128.9 240.7,130.4 240.2,131.8 239.6,133.3 239.0,134.7 238.4,136.2 237.8,137.6 237.2,139.1 236.6,140.5 235.9,141.9 235.3,143.4 234.7,144.8 234.1,146.3 233.5,147.7 232.9,149.2 232.3,150.6 231.7,152.0 231.1,153.5 230.5,154.9 229.9,156.4 229.2,157.8 228.6,159.2 228.0,160.7M252.8,109.7 252.4,111.1 251.9,112.5 251.4,113.9 250.9,115.3 250.4,116.7 249.9,118.1 249.4,119.5 248.9,120.9 248.4,122.3 247.9,123.7 247.4,125.1 246.9,126.5 246.4,128.0 245.9,129.4 245.4,130.8 244.9,132.2 244.4,133.6 243.9,135.0 243.4,136.4 242.9,137.8 242.4,139.2 241.8,140.6 241.3,142.0 240.8,143.4 240.3,144.8 239.8,146.1 239.2,147.5 238.7,148.9 238.2,150.3 237.7,151.7 237.2,153.1 236.6,154.5 236.1,155.9 235.6,157.3 235.1,158.7 234.5,160.1 234.0,161.5 233.5,162.9 233.0,164.3M254.6,115.2 254.2,116.5 253.8,117.9 253.4,119.2 252.9,120.6 252.5,122.0 252.1,123.3 251.7,124.7 251.2,126.1 250.8,127.4 250.4,128.8 250.0,130.1 249.5,131.5 249.1,132.9 248.7,134.2 248.3,135.6 247.8,137.0 247.4,138.3 247.0,139.7 246.5,141.0 246.1,142.4 245.7,143.7 245.2,145.1 244.8,146.5 244.3,147.8 243.9,149.2 243.5,150.5 243.0,151.9 242.6,153.2 242.1,154.6 241.7,155.9 241.2,157.3 240.8,158.6 240.4,160.0 239.9,161.3 239.5,162.7 239.0,164.1 238.6,165.4 238.1,166.8 237.7,168.1M257.9,119.9 257.5,121.2 257.1,122.6 256.7,123.9 256.3,125.3 256.0,126.6 255.6,127.9 255.2,129.3 254.8,130.6 254.4,132.0 254.0,133.3 253.6,134.6 253.2,136.0 252.8,137.3 252.4,138.6 252.0,140.0 251.6,141.3 251.2,142.7 250.8,144.0 250.4,145.3 250.0,146.7 249.6,148.0 249.2,149.3 248.8,150.7 248.4,152.0 248.0,153.4 247.6,154.7 247.2,156.0 246.8,157.4 246.4,158.7 246.0,160.0 245.6,161.4 245.2,162.7 244.8,164.0 244.4,165.4 244.0,166.7 243.6,168.0 243.2,169.4 242.8,170.7 242.4,172.0" fill="none" stroke="#62261e" stroke-width="0.8" stroke-opacity="0.9"/>
<path d="M740.5,102.7 738.8,102.1 737.2,101.4 735.6,100.7 733.9,100.0 732.3,99.4 730.6,98.8 728.9,98.3 727.2,97.8 725.4,97.5 723.6,97.3 721.8,97.3 720.0,97.3 718.2,97.4 716.3,97.6 714.5,97.8 712.7,98.1 710.9,98.5 709.0,98.9 707.2,99.3 705.5,99.9 703.8,100.6 702.1,101.4 700.6,102.5 699.4,103.9 698.4,105.4 697.6,107.1 696.9,108.8 696.4,110.5 695.8,112.2 695.2,114.0 694.4,115.6 693.6,117.3 692.7,118.9 691.7,120.5 690.8,122.1 689.9,123.7 688.9,125.3 688.0,126.9 687.1,128.5M741.0,105.5 739.4,105.0 737.8,104.4 736.3,103.9 734.7,103.4 733.1,102.9 731.5,102.5 729.8,102.1 728.2,101.8 726.5,101.6 724.8,101.5 723.0,101.6 721.2,101.7 719.5,101.9 717.7,102.1 715.9,102.4 714.1,102.7 712.4,103.1 710.6,103.5 708.8,104.0 707.1,104.6 705.4,105.3 703.7,106.0 702.3,107.1 701.0,108.4 700.0,109.8 699.2,111.4 698.4,113.0 697.8,114.7 697.2,116.3 696.5,118.0 695.7,119.6 694.8,121.2 693.9,122.7 693.0,124.3 692.0,125.8 691.0,127.3 690.1,128.9 689.1,130.4 688.2,131.9M741.7,108.2 740.1,107.8 738.6,107.5 737.1,107.1 735.6,106.7 734.1,106.4 732.5,106.1 730.9,105.9 729.3,105.7 727.7,105.6 726.0,105.7 724.3,105.8 722.6,106.0 720.9,106.3 719.2,106.6 717.5,107.0 715.7,107.3 714.0,107.7 712.2,108.2 710.5,108.7 708.8,109.2 707.1,109.9 705.5,110.7 704.0,111.7 702.7,112.9 701.7,114.3 700.8,115.8 700.0,117.3 699.3,118.9 698.6,120.5 697.9,122.0 697.1,123.6 696.1,125.1 695.2,126.5 694.2,128.0 693.2,129.5 692.2,131.0 691.2,132.4 690.2,133.9 689.2,135.4M742.5,110.8 741.1,110.6 739.6,110.4 738.1,110.2 736.7,110.0 735.2,109.9 733.7,109.7 732.2,109.6 730.6,109.6 729.0,109.7 727.4,109.8 725.8,110.0 724.1,110.3 722.5,110.7 720.8,111.1 719.1,111.5 717.4,111.9 715.7,112.3 714.0,112.8 712.3,113.3 710.6,113.9 708.9,114.5 707.3,115.3 705.8,116.2 704.5,117.4 703.4,118.7 702.5,120.1 701.6,121.5 700.9,123.0 700.1,124.5 699.3,126.0 698.4,127.5 697.5,128.9 696.4,130.4 695.4,131.8 694.4,133.2 693.4,134.6 692.4,136.0 691.3,137.4 690.3,138.8M743.6,113.3 742.2,113.3 740.8,113.3 739.4,113.3 737.9,113.2 736.5,113.2 735.1,113.2 733.6,113.3 732.1,113.4 730.5,113.6 729.0,113.8 727.4,114.2 725.8,114.6 724.2,115.0 722.5,115.5 720.9,115.9 719.2,116.4 717.5,116.9 715.8,117.4 714.1,117.9 712.5,118.4 710.8,119.1 709.2,119.8 707.7,120.8 706.4,121.8 705.2,123.1 704.3,124.4 703.3,125.8 702.5,127.2 701.7,128.6 700.8,130.0 699.8,131.4 698.8,132.8 697.8,134.2 696.7,135.5 695.7,136.9 694.6,138.2 693.5,139.6 692.5,141.0 691.4,142.3M744.8,115.9 743.4,116.0 742.0,116.1 740.7,116.3 739.3,116.4 737.9,116.6 736.5,116.7 735.1,116.9 733.6,117.2 732.1,117.5 730.6,117.9 729.1,118.3 727.5,118.8 726.0,119.4 724.4,119.9 722.7,120.4 721.1,120.9 719.4,121.4 717.7,121.9 716.1,122.4 714.4,123.0 712.8,123.6 711.2,124.4 709.7,125.2 708.3,126.3 707.1,127.4 706.1,128.7 705.1,130.0 704.2,131.3 703.2,132.7 702.3,134.0 701.3,135.4 700.2,136.7 699.1,138.0 698.0,139.3 696.9,140.6 695.8,141.9 694.7,143.2 693.6,144.5 692.5,145.8M746.1,118.3 744.7,118.6 743.4,118.9 742.1,119.2 740.7,119.5 739.4,119.9 738.0,120.2 736.6,120.6 735.2,120.9 733.8,121.4 732.3,121.9 730.8,122.5 729.3,123.0 727.8,123.6 726.2,124.2 724.6,124.8 723.0,125.3 721.4,125.9 719.7,126.4 718.0,127.0 716.4,127.6 714.8,128.2 713.2,128.9 711.7,129.7 710.3,130.7 709.0,131.8 707.9,133.0 706.8,134.2 705.8,135.4 704.8,136.7 703.8,138.0 702.7,139.3 701.6,140.5 700.5,141.8 699.3,143.0 698.2,144.3 697.0,145.5 695.9,146.7 694.7,148.0 693.5,149.2M747.4,120.8 746.1,121.3 744.8,121.7 743.5,122.2 742.2,122.7 740.9,123.1 739.6,123.6 738.2,124.1 736.8,124.7 735.5,125.3 734.0,125.9 732.6,126.6 731.1,127.2 729.6,127.9 728.1,128.6 726.5,129.2 724.9,129.8 723.3,130.4 721.7,130.9 720.0,131.5 718.4,132.1 716.8,132.7 715.2,133.4 713.7,134.2 712.2,135.1 710.9,136.1 709.7,137.2 708.6,138.4 707.5,139.6 706.4,140.8 705.3,142.0 704.2,143.2 703.0,144.4 701.8,145.6 700.6,146.7 699.4,147.9 698.2,149.1 697.0,150.3 695.8,151.5 694.6,152.7M748.7,123.2 747.4,123.9 746.1,124.5 744.9,125.1 743.6,125.8 742.4,126.4 741.1,127.1 739.8,127.7 738.5,128.4 737.1,129.1 735.8,129.9 734.4,130.6 732.9,131.4 731.5,132.2 730.0,132.9 728.4,133.6 726.9,134.2 725.3,134.8 723.7,135.5 722.0,136.0 720.4,136.6 718.8,137.2 717.2,137.9 715.6,138.7 714.2,139.5 712.8,140.5 711.6,141.5 710.3,142.6 709.2,143.7 708.0,144.8 706.9,146.0 705.7,147.1 704.4,148.2 703.2,149.4 701.9,150.5 700.7,151.6 699.4,152.8 698.2,153.9 696.9,155.0 695.7,156.2M750.0,125.7 748.8,126.5 747.6,127.3 746.3,128.1 745.1,128.9 743.9,129.7 742.7,130.5 741.4,131.3 740.1,132.1 738.8,133.0 737.5,133.8 736.2,134.7 734.8,135.6 733.3,136.4 731.9,137.2 730.4,138.0 728.8,138.7 727.2,139.3 725.6,140.0 724.0,140.6 722.4,141.2 720.8,141.8 719.2,142.4 717.7,143.1 716.2,143.9 714.7,144.8 713.4,145.8 712.1,146.8 710.9,147.8 709.6,148.9 708.4,149.9 707.1,151.0 705.8,152.1 704.5,153.1 703.2,154.2 702.0,155.3 700.7,156.4 699.4,157.5 698.1,158.5 696.8,159.6M751.3,128.1 750.1,129.1 749.0,130.0 747.8,131.0 746.6,132.0 745.4,133.0 744.2,133.9 743.0,134.9 741.8,135.9 740.5,136.9 739.3,137.8 738.0,138.8 736.6,139.8 735.2,140.7 733.8,141.6 732.3,142.4 730.8,143.1 729.2,143.8 727.6,144.5 726.0,145.1 724.4,145.7 722.8,146.3 721.2,146.9 719.7,147.6 718.1,148.3 716.7,149.2 715.3,150.0 713.9,150.9 712.6,151.9 711.2,152.9 709.9,153.9 708.6,154.9 707.3,155.9 705.9,156.9 704.6,158.0 703.2,159.0 701.9,160.0 700.5,161.0 699.2,162.1 697.8,163.1M752.7,130.6 751.5,131.7 750.4,132.8 749.2,133.9 748.1,135.1 747.0,136.2 745.8,137.4 744.6,138.5 743.5,139.6 742.2,140.7 741.0,141.8 739.7,142.9 738.4,143.9 737.1,144.9 735.7,145.9 734.2,146.8 732.7,147.6 731.2,148.3 729.6,149.0 728.0,149.6 726.4,150.2 724.8,150.8 723.2,151.4 721.7,152.1 720.1,152.7 718.6,153.5 717.1,154.3 715.7,155.1 714.3,156.0 712.9,156.9 711.5,157.9 710.1,158.8 708.7,159.8 707.3,160.7 705.9,161.7 704.5,162.7 703.1,163.6 701.7,164.6 700.3,165.6 698.9,166.5M734.0,97.0 734.2,98.1 734.5,99.2 734.7,100.3 734.9,101.4 735.1,102.5 735.4,103.6 735.7,104.7 736.0,105.8 736.3,106.9 736.6,108.0 737.0,109.0 737.3,110.1 737.7,111.2 738.1,112.2 738.6,113.2 739.0,114.3 739.5,115.3 739.9,116.3 740.4,117.4 740.9,118.4 741.3,119.4 741.8,120.4 742.3,121.4 742.8,122.4 743.2,123.5 743.7,124.5 744.2,125.5 744.7,126.5 745.2,127.5 745.7,128.5 746.2,129.5 746.7,130.5 747.2,131.5 747.6,132.5 748.1,133.6 748.6,134.6 749.1,135.6 749.6,136.6 750.1,137.6M727.8,94.4 728.2,95.7 728.5,97.0 728.8,98.2 729.1,99.5 729.4,100.8 729.7,102.1 730.0,103.3 730.4,104.6 730.8,105.9 731.2,107.1 731.6,108.4 732.0,109.6 732.5,110.9 732.9,112.1 733.4,113.3 733.9,114.5 734.4,115.8 734.9,117.0 735.5,118.2 736.0,119.4 736.5,120.6 737.0,121.8 737.6,123.0 738.1,124.2 738.6,125.4 739.1,126.6 739.7,127.8 740.2,129.0 740.8,130.2 741.3,131.4 741.8,132.6 742.4,133.8 742.9,135.0 743.4,136.2 744.0,137.4 744.5,138.6 745.1,139.8 745.6,141.0 746.1,142.2M721.3,93.0 721.7,94.4 722.1,95.8 722.5,97.2 722.9,98.7 723.2,100.1 723.6,101.5 724.1,102.9 724.5,104.3 724.9,105.7 725.4,107.1 725.9,108.5 726.4,109.9 726.9,111.3 727.4,112.7 728.0,114.1 728.5,115.4 729.1,116.8 729.7,118.2 730.2,119.5 730.8,120.9 731.4,122.2 732.0,123.6 732.5,124.9 733.1,126.3 733.7,127.6 734.3,129.0 734.9,130.4 735.5,131.7 736.1,133.1 736.7,134.4 737.2,135.8 737.8,137.1 738.4,138.5 739.0,139.8 739.6,141.1 740.2,142.5 740.8,143.8 741.4,145.2 742.0,146.5M714.6,93.1 715.1,94.6 715.6,96.1 716.0,97.6 716.4,99.1 716.9,100.7 717.4,102.2 717.9,103.7 718.4,105.2 718.9,106.7 719.4,108.2 719.9,109.7 720.5,111.1 721.1,112.6 721.6,114.1 722.2,115.6 722.8,117.0 723.5,118.5 724.1,120.0 724.7,121.4 725.3,122.9 725.9,124.3 726.6,125.8 727.2,127.2 727.8,128.7 728.4,130.1 729.1,131.6 729.7,133.0 730.3,134.5 731.0,135.9 731.6,137.4 732.3,138.8 732.9,140.3 733.5,141.7 734.2,143.2 734.8,144.6 735.4,146.1 736.1,147.5 736.7,149.0 737.3,150.4M708.0,94.1 708.5,95.7 709.0,97.2 709.5,98.8 710.0,100.3 710.5,101.9 711.1,103.4 711.6,105.0 712.1,106.5 712.7,108.1 713.3,109.6 713.8,111.1 714.4,112.7 715.0,114.2 715.7,115.7 716.3,117.2 716.9,118.7 717.6,120.3 718.2,121.8 718.9,123.3 719.5,124.8 720.2,126.3 720.8,127.8 721.5,129.3 722.1,130.8 722.8,132.3 723.4,133.8 724.1,135.3 724.8,136.8 725.4,138.3 726.1,139.8 726.7,141.3 727.4,142.8 728.1,144.3 728.7,145.8 729.4,147.3 730.1,148.8 730.7,150.3 731.4,151.8 732.0,153.3M701.7,96.2 702.2,97.7 702.8,99.3 703.3,100.8 703.8,102.4 704.4,103.9 704.9,105.5 705.5,107.0 706.1,108.6 706.7,110.1 707.3,111.6 707.9,113.2 708.5,114.7 709.1,116.2 709.7,117.8 710.4,119.3 711.0,120.8 711.7,122.3 712.3,123.8 713.0,125.3 713.7,126.9 714.3,128.4 715.0,129.9 715.7,131.4 716.3,132.9 717.0,134.4 717.7,135.9 718.3,137.4 719.0,138.9 719.7,140.4 720.4,141.9 721.0,143.5 721.7,145.0 722.4,146.5 723.1,148.0 723.7,149.5 724.4,151.0 725.1,152.5 725.7,154.0 726.4,155.5M696.9,100.7 697.5,102.1 698.0,103.6 698.5,105.1 699.1,106.6 699.6,108.1 700.2,109.6 700.7,111.1 701.3,112.5 701.9,114.0 702.4,115.5 703.0,117.0 703.6,118.4 704.2,119.9 704.8,121.4 705.5,122.8 706.1,124.3 706.7,125.8 707.3,127.2 708.0,128.7 708.6,130.1 709.2,131.6 709.9,133.0 710.5,134.5 711.2,135.9 711.8,137.4 712.4,138.8 713.1,140.3 713.7,141.7 714.4,143.2 715.0,144.6 715.6,146.1 716.3,147.5 716.9,149.0 717.6,150.4 718.2,151.9 718.9,153.3 719.5,154.8 720.1,156.2 720.8,157.7M694.7,107.0 695.2,108.3 695.7,109.7 696.1,111.1 696.6,112.5 697.1,113.9 697.6,115.3 698.1,116.7 698.6,118.1 699.1,119.5 699.6,120.8 700.1,122.2 700.6,123.6 701.1,125.0 701.7,126.3 702.2,127.7 702.7,129.1 703.3,130.4 703.8,131.8 704.4,133.2 704.9,134.5 705.5,135.9 706.0,137.3 706.6,138.6 707.1,140.0 707.7,141.4 708.2,142.7 708.8,144.1 709.3,145.5 709.9,146.8 710.4,148.2 711.0,149.5 711.5,150.9 712.1,152.3 712.6,153.6 713.2,155.0 713.7,156.4 714.3,157.7 714.8,159.1 715.4,160.4M692.4,113.2 692.8,114.5 693.2,115.8 693.6,117.1 694.1,118.4 694.5,119.7 694.9,121.0 695.3,122.3 695.8,123.6 696.2,124.9 696.6,126.2 697.1,127.5 697.5,128.8 698.0,130.1 698.5,131.4 698.9,132.7 699.4,134.0 699.8,135.3 700.3,136.6 700.8,137.8 701.2,139.1 701.7,140.4 702.2,141.7 702.7,143.0 703.1,144.3 703.6,145.6 704.1,146.8 704.5,148.1 705.0,149.4 705.5,150.7 706.0,152.0 706.4,153.3 706.9,154.5 707.4,155.8 707.8,157.1 708.3,158.4 708.8,159.7 709.3,161.0 709.7,162.2 710.2,163.5M689.2,119.1 689.6,120.4 690.0,121.6 690.4,122.8 690.8,124.0 691.2,125.3 691.6,126.5 692.0,127.7 692.4,128.9 692.7,130.2 693.1,131.4 693.5,132.6 694.0,133.8 694.4,135.1 694.8,136.3 695.2,137.5 695.6,138.7 696.0,139.9 696.4,141.2 696.8,142.4 697.2,143.6 697.6,144.8 698.1,146.0 698.5,147.3 698.9,148.5 699.3,149.7 699.7,150.9 700.1,152.1 700.5,153.4 701.0,154.6 701.4,155.8 701.8,157.0 702.2,158.2 702.6,159.4 703.0,160.7 703.4,161.9 703.9,163.1 704.3,164.3 704.7,165.5 705.1,166.8" fill="none" stroke="#62261e" stroke-width="0.8" stroke-opacity="0.9"/>
<ellipse cx="443.5" cy="157.5" rx="3.2" ry="6.5" fill="#4a1a14" opacity="0.6"/><ellipse cx="505.6" cy="156" rx="3.2" ry="6.5" fill="#4a1a14" opacity="0.6"/><ellipse cx="474" cy="163" rx="4.5" ry="4" fill="#4a1a14" opacity="0.6"/><ellipse cx="474" cy="174.5" rx="7" ry="2.2" fill="#4a1a14" opacity="0.6"/><ellipse cx="465" cy="157" rx="3.5" ry="1.4" fill="#4a1a14" opacity="0.6"/><ellipse cx="484" cy="157" rx="3.5" ry="1.4" fill="#4a1a14" opacity="0.6"/><ellipse cx="475" cy="374" rx="2" ry="3.5" fill="#4a1a14" opacity="0.6"/><ellipse cx="254" cy="694.2" rx="2" ry="2" fill="#4a1a14" opacity="0.6"/><ellipse cx="249.2" cy="703.4" rx="2" ry="2" fill="#4a1a14" opacity="0.6"/><ellipse cx="262.9" cy="706.4" rx="1.8" ry="1.8" fill="#4a1a14" opacity="0.6"/><ellipse cx="268.2" cy="713.2" rx="2.2" ry="2.2" fill="#4a1a14" opacity="0.6"/><ellipse cx="695.4" cy="694.2" rx="2.2" ry="2.2" fill="#4a1a14" opacity="0.6"/><ellipse cx="705.7" cy="700.5" rx="1.8" ry="1.8" fill="#4a1a14" opacity="0.6"/><ellipse cx="692" cy="711.7" rx="2" ry="2" fill="#4a1a14" opacity="0.6"/><ellipse cx="681.3" cy="717" rx="2" ry="2" fill="#4a1a14" opacity="0.6"/><ellipse cx="232" cy="100" rx="2" ry="5" fill="#4a1a14" opacity="0.6"/><ellipse cx="218" cy="126" rx="4" ry="2" fill="#4a1a14" opacity="0.6"/><ellipse cx="212" cy="112" rx="3" ry="1.5" fill="#4a1a14" opacity="0.6"/><ellipse cx="720" cy="99" rx="2" ry="5" fill="#4a1a14" opacity="0.6"/><ellipse cx="734" cy="128" rx="4" ry="2" fill="#4a1a14" opacity="0.6"/><ellipse cx="738" cy="113" rx="3" ry="1.5" fill="#4a1a14" opacity="0.6"/></g>
<g stroke="rgba(255,255,255,0.04)" stroke-width="1"><line x1="178.8" y1="71" x2="178.8" y2="726"/><line x1="261.4" y1="71" x2="261.4" y2="726"/><line x1="344.0" y1="71" x2="344.0" y2="726"/><line x1="426.6" y1="71" x2="426.6" y2="726"/><line x1="509.2" y1="71" x2="509.2" y2="726"/><line x1="591.8" y1="71" x2="591.8" y2="726"/><line x1="674.4" y1="71" x2="674.4" y2="726"/><line x1="757.0" y1="71" x2="757.0" y2="726"/><line x1="96" y1="150.2" x2="757" y2="150.2"/><line x1="96" y1="232.8" x2="757" y2="232.8"/><line x1="96" y1="315.4" x2="757" y2="315.4"/><line x1="96" y1="398.0" x2="757" y2="398.0"/><line x1="96" y1="480.6" x2="757" y2="480.6"/><line x1="96" y1="563.2" x2="757" y2="563.2"/><line x1="96" y1="645.8" x2="757" y2="645.8"/></g><rect x="128.5" y="87.5" width="693" height="622" fill="none" stroke="rgba(255,255,255,0.16)" stroke-width="1"/>
</g>
<g><circle cx="666.7" cy="483" r="29" fill="none" stroke="#a81c1c" stroke-width="1.15"/><circle cx="666.6" cy="482.9" r="14.3" fill="none" stroke="#3e1010" stroke-width="1"/>
<path d="M675.3 476 A7 7 0 1 1 668.5 470.5" fill="none" stroke="#fff" stroke-width="1.8"/><path d="M667.5 466.6 L673.5 470.5 L667.5 474.4 Z" fill="#fff"/></g>
</svg>
</body></html>
